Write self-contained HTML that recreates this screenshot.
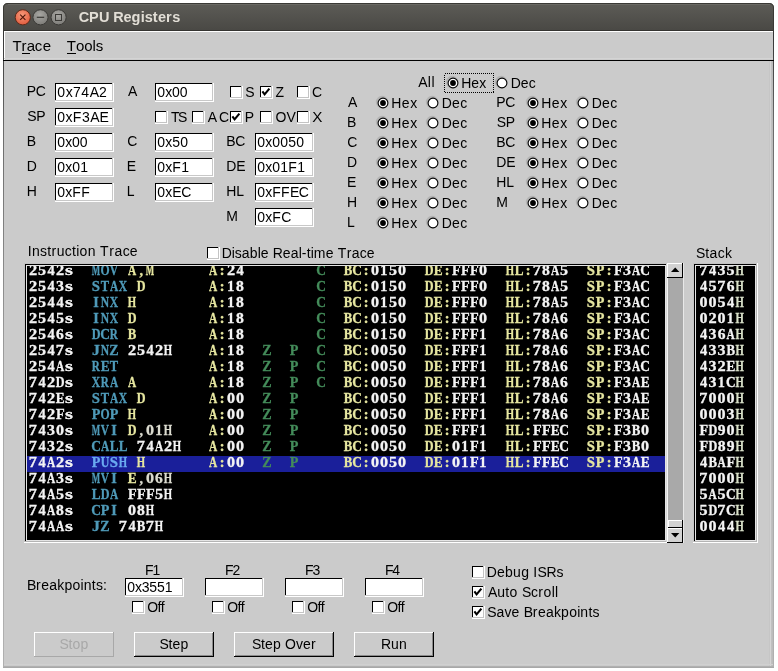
<!DOCTYPE html>
<html><head><meta charset="utf-8"><title>CPU Registers</title>
<style>html,body{margin:0;padding:0;background:#fff;overflow:hidden}svg{display:block;will-change:transform}text{shape-rendering:auto}circle,path{shape-rendering:geometricPrecision}</style>
</head><body><svg width="778" height="671" viewBox="0 0 778 671" shape-rendering="crispEdges"><rect x="0" y="0" width="778" height="671" fill="#ffffff" />
<defs><linearGradient id="lg" x1="0" y1="0" x2="0" y2="1"><stop offset="0" stop-color="#333333"/><stop offset="0.15" stop-color="#6a6a6a"/><stop offset="0.6" stop-color="#a8a8a8"/><stop offset="1" stop-color="#b0b0b0"/></linearGradient><linearGradient id="tg" x1="0" y1="0" x2="0" y2="1"><stop offset="0" stop-color="#5d5c57"/><stop offset="1" stop-color="#494844"/></linearGradient><radialGradient id="cg" cx="0.45" cy="0.35" r="0.7"><stop offset="0" stop-color="#f79a7a"/><stop offset="1" stop-color="#e0573a"/></radialGradient><radialGradient id="gg" cx="0.45" cy="0.35" r="0.7"><stop offset="0" stop-color="#a8a7a3"/><stop offset="1" stop-color="#7a7975"/></radialGradient><clipPath id="tc"><rect x="27" y="266" width="638" height="274"/></clipPath><clipPath id="sc"><rect x="696" y="266" width="59" height="274"/></clipPath></defs>
<rect x="3" y="30" width="771" height="638" fill="#cbcbcb" />
<rect x="3" y="30" width="1" height="638" fill="url(#lg)" />
<rect x="769" y="61" width="1" height="606" fill="#c6c6c6" />
<rect x="770" y="61" width="1" height="606" fill="#d4d4d4" />
<rect x="771" y="61" width="1" height="607" fill="#c0c0c0" />
<rect x="772" y="61" width="1" height="607" fill="#bcbcbc" />
<rect x="773" y="30" width="1" height="638" fill="url(#lg)" />
<rect x="772" y="30" width="1" height="31" fill="#000" />
<rect x="4" y="664" width="769" height="1" fill="#d0d0d0" />
<rect x="3" y="666" width="771" height="1" fill="#b0b0b0" />
<rect x="3" y="667" width="771" height="1" fill="#a8a8a8" />
<path d="M3,31 L3,8 Q3,3 8,3 L769,3 Q774,3 774,8 L774,31 Z" fill="url(#tg)"/>
<path d="M3.5,31 L3.5,8 Q3.5,3.5 8,3.5 L769,3.5 Q773.5,3.5 773.5,8 L773.5,31" fill="none" stroke="#3a3935" stroke-width="1" shape-rendering="geometricPrecision"/>
<rect x="8" y="4" width="762" height="1" fill="#6a6964" />
<rect x="4" y="30" width="770" height="1" fill="#353431" />
<circle cx="22.8" cy="17.3" r="7.6" fill="url(#cg)" stroke="#5a2a1a" stroke-width="1"/>
<path d="M20.2,14.7 L25.4,19.9 M25.4,14.7 L20.2,19.9" stroke="#4a1408" stroke-width="1.1"/>
<circle cx="40.5" cy="17.3" r="7.6" fill="url(#gg)" stroke="#3a3936" stroke-width="1"/>
<path d="M36.8,17.3 L44.2,17.3" stroke="#3a3936" stroke-width="1.2"/>
<circle cx="58.6" cy="17.3" r="7.6" fill="url(#gg)" stroke="#3a3936" stroke-width="1"/>
<rect x="55.5" y="14.2" width="6.2" height="6.2" fill="none" stroke="#3a3936" stroke-width="1.3"/>
<text x="78.81 88.92 99.04 109.16 113.28 123.40 131.52 140.64 144.76 152.87 157.99 166.11 172.23" y="22" font-family="Liberation Sans" font-size="14.5" fill="#e2ded6" font-weight="bold" >CPU Registers</text>
<rect x="4" y="31" width="769" height="29" fill="#cbcbcb" />
<rect x="4" y="31" width="769" height="1" fill="#ffffff" />
<rect x="4" y="31" width="1" height="29" fill="#ffffff" />
<rect x="4" y="58" width="769" height="1" fill="#d4d4d4" />
<rect x="3" y="60" width="771" height="1" fill="#000000" />
<text x="12.46 21.55 26.64 34.73 42.82" y="51" font-family="Liberation Sans" font-size="15" fill="#000" font-weight="normal" >Trace</text>
<rect x="22" y="53" width="8" height="1" fill="#000" />
<text x="66.86 76.06 84.25 92.45 95.64" y="51" font-family="Liberation Sans" font-size="15" fill="#000" font-weight="normal" >Tools</text>
<rect x="67" y="53" width="9" height="1" fill="#000" />
<text transform="translate(0,96) scale(0.9032,1)" x="29.62 39.58" y="0" font-family="Liberation Sans" font-size="15.5" fill="#000" font-weight="normal" >PC</text>
<rect x="55" y="83" width="59" height="19" fill="#ffffff" />
<rect x="55" y="83" width="57" height="1" fill="#000" />
<rect x="55" y="83" width="1" height="17" fill="#000" />
<rect x="55" y="100" width="58" height="1" fill="#c8c8c8" />
<rect x="112" y="83" width="1" height="18" fill="#c8c8c8" />
<text x="57.35 65.69 73.02 81.35 89.69 99.02" y="97" font-family="Liberation Sans" font-size="14" fill="#000" font-weight="normal" >0x74A2</text>
<text transform="translate(0,121) scale(0.9032,1)" x="30.19 40.15" y="0" font-family="Liberation Sans" font-size="15.5" fill="#000" font-weight="normal" >SP</text>
<rect x="55" y="108" width="59" height="19" fill="#ffffff" />
<rect x="55" y="108" width="57" height="1" fill="#000" />
<rect x="55" y="108" width="1" height="17" fill="#000" />
<rect x="55" y="125" width="58" height="1" fill="#c8c8c8" />
<rect x="112" y="108" width="1" height="18" fill="#c8c8c8" />
<text x="57.35 65.58 72.80 82.02 90.24 99.46" y="122" font-family="Liberation Sans" font-size="14" fill="#000" font-weight="normal" >0xF3AE</text>
<text transform="translate(0,146) scale(0.9032,1)" x="29.62" y="0" font-family="Liberation Sans" font-size="15.5" fill="#000" font-weight="normal" >B</text>
<rect x="55" y="133" width="59" height="19" fill="#ffffff" />
<rect x="55" y="133" width="57" height="1" fill="#000" />
<rect x="55" y="133" width="1" height="17" fill="#000" />
<rect x="55" y="150" width="58" height="1" fill="#c8c8c8" />
<rect x="112" y="133" width="1" height="18" fill="#c8c8c8" />
<text x="57.35 65.19 72.02 79.86" y="147" font-family="Liberation Sans" font-size="14" fill="#000" font-weight="normal" >0x00</text>
<text transform="translate(0,171) scale(0.9032,1)" x="29.62" y="0" font-family="Liberation Sans" font-size="15.5" fill="#000" font-weight="normal" >D</text>
<rect x="55" y="158" width="59" height="19" fill="#ffffff" />
<rect x="55" y="158" width="57" height="1" fill="#000" />
<rect x="55" y="158" width="1" height="17" fill="#000" />
<rect x="55" y="175" width="58" height="1" fill="#c8c8c8" />
<rect x="112" y="158" width="1" height="18" fill="#c8c8c8" />
<text x="57.35 65.35 72.35 80.35" y="172" font-family="Liberation Sans" font-size="14" fill="#000" font-weight="normal" >0x01</text>
<text transform="translate(0,196) scale(0.9032,1)" x="29.62" y="0" font-family="Liberation Sans" font-size="15.5" fill="#000" font-weight="normal" >H</text>
<rect x="55" y="183" width="59" height="19" fill="#ffffff" />
<rect x="55" y="183" width="57" height="1" fill="#000" />
<rect x="55" y="183" width="1" height="17" fill="#000" />
<rect x="55" y="200" width="58" height="1" fill="#c8c8c8" />
<rect x="112" y="183" width="1" height="18" fill="#c8c8c8" />
<text x="57.35 65.35 72.35 81.35" y="197" font-family="Liberation Sans" font-size="14" fill="#000" font-weight="normal" >0xFF</text>
<text transform="translate(0,96) scale(0.9032,1)" x="141.68" y="0" font-family="Liberation Sans" font-size="15.5" fill="#000" font-weight="normal" >A</text>
<rect x="155" y="83" width="59" height="19" fill="#ffffff" />
<rect x="155" y="83" width="57" height="1" fill="#000" />
<rect x="155" y="83" width="1" height="17" fill="#000" />
<rect x="155" y="100" width="58" height="1" fill="#c8c8c8" />
<rect x="212" y="83" width="1" height="18" fill="#c8c8c8" />
<text x="157.35 165.19 172.02 179.86" y="97" font-family="Liberation Sans" font-size="14" fill="#000" font-weight="normal" >0x00</text>
<text transform="translate(0,146) scale(0.9032,1)" x="140.93" y="0" font-family="Liberation Sans" font-size="15.5" fill="#000" font-weight="normal" >C</text>
<rect x="155" y="133" width="59" height="19" fill="#ffffff" />
<rect x="155" y="133" width="57" height="1" fill="#000" />
<rect x="155" y="133" width="1" height="17" fill="#000" />
<rect x="155" y="150" width="58" height="1" fill="#c8c8c8" />
<rect x="212" y="133" width="1" height="18" fill="#c8c8c8" />
<text x="157.35 165.35 172.35 180.35" y="147" font-family="Liberation Sans" font-size="14" fill="#000" font-weight="normal" >0x50</text>
<text transform="translate(0,171) scale(0.9032,1)" x="140.44" y="0" font-family="Liberation Sans" font-size="15.5" fill="#000" font-weight="normal" >E</text>
<rect x="155" y="158" width="59" height="19" fill="#ffffff" />
<rect x="155" y="158" width="57" height="1" fill="#000" />
<rect x="155" y="158" width="1" height="17" fill="#000" />
<rect x="155" y="175" width="58" height="1" fill="#c8c8c8" />
<rect x="212" y="158" width="1" height="18" fill="#c8c8c8" />
<text x="157.35 165.35 172.35 181.35" y="172" font-family="Liberation Sans" font-size="14" fill="#000" font-weight="normal" >0xF1</text>
<text transform="translate(0,196) scale(0.9032,1)" x="140.44" y="0" font-family="Liberation Sans" font-size="15.5" fill="#000" font-weight="normal" >L</text>
<rect x="155" y="183" width="59" height="19" fill="#ffffff" />
<rect x="155" y="183" width="57" height="1" fill="#000" />
<rect x="155" y="183" width="1" height="17" fill="#000" />
<rect x="155" y="200" width="58" height="1" fill="#c8c8c8" />
<rect x="212" y="183" width="1" height="18" fill="#c8c8c8" />
<text x="157.35 165.35 172.35 181.35" y="197" font-family="Liberation Sans" font-size="14" fill="#000" font-weight="normal" >0xEC</text>
<text transform="translate(0,146) scale(0.9032,1)" x="250.49 260.46" y="0" font-family="Liberation Sans" font-size="15.5" fill="#000" font-weight="normal" >BC</text>
<rect x="255" y="133" width="59" height="19" fill="#ffffff" />
<rect x="255" y="133" width="57" height="1" fill="#000" />
<rect x="255" y="133" width="1" height="17" fill="#000" />
<rect x="255" y="150" width="58" height="1" fill="#c8c8c8" />
<rect x="312" y="133" width="1" height="18" fill="#c8c8c8" />
<text x="257.35 265.35 272.35 280.35 288.35 296.35" y="147" font-family="Liberation Sans" font-size="14" fill="#000" font-weight="normal" >0x0050</text>
<text transform="translate(0,171) scale(0.9032,1)" x="250.49 261.56" y="0" font-family="Liberation Sans" font-size="15.5" fill="#000" font-weight="normal" >DE</text>
<rect x="255" y="158" width="59" height="19" fill="#ffffff" />
<rect x="255" y="158" width="57" height="1" fill="#000" />
<rect x="255" y="158" width="1" height="17" fill="#000" />
<rect x="255" y="175" width="58" height="1" fill="#c8c8c8" />
<rect x="312" y="158" width="1" height="18" fill="#c8c8c8" />
<text x="257.35 265.35 272.35 280.35 288.35 297.35" y="172" font-family="Liberation Sans" font-size="14" fill="#000" font-weight="normal" >0x01F1</text>
<text transform="translate(0,196) scale(0.9032,1)" x="250.49 261.56" y="0" font-family="Liberation Sans" font-size="15.5" fill="#000" font-weight="normal" >HL</text>
<rect x="255" y="183" width="59" height="19" fill="#ffffff" />
<rect x="255" y="183" width="57" height="1" fill="#000" />
<rect x="255" y="183" width="1" height="17" fill="#000" />
<rect x="255" y="200" width="58" height="1" fill="#c8c8c8" />
<rect x="312" y="183" width="1" height="18" fill="#c8c8c8" />
<text x="257.35 265.25 272.14 281.03 289.93 298.82" y="197" font-family="Liberation Sans" font-size="14" fill="#000" font-weight="normal" >0xFFEC</text>
<text transform="translate(0,221) scale(0.9032,1)" x="250.49" y="0" font-family="Liberation Sans" font-size="15.5" fill="#000" font-weight="normal" >M</text>
<rect x="255" y="208" width="59" height="19" fill="#ffffff" />
<rect x="255" y="208" width="57" height="1" fill="#000" />
<rect x="255" y="208" width="1" height="17" fill="#000" />
<rect x="255" y="225" width="58" height="1" fill="#c8c8c8" />
<rect x="312" y="208" width="1" height="18" fill="#c8c8c8" />
<text x="257.35 265.35 272.35 281.35" y="222" font-family="Liberation Sans" font-size="14" fill="#000" font-weight="normal" >0xFC</text>
<rect x="230" y="86" width="13" height="13" fill="#ffffff" />
<rect x="230" y="86" width="11" height="1" fill="#000" />
<rect x="230" y="86" width="1" height="11" fill="#000" />
<rect x="230" y="97" width="12" height="1" fill="#c4c4c4" />
<rect x="241" y="86" width="1" height="12" fill="#c4c4c4" />
<text transform="translate(0,97) scale(0.9032,1)" x="271.54" y="0" font-family="Liberation Sans" font-size="15.5" fill="#000" font-weight="normal" >S</text>
<rect x="260" y="86" width="13" height="13" fill="#ffffff" />
<rect x="260" y="86" width="11" height="1" fill="#000" />
<rect x="260" y="86" width="1" height="11" fill="#000" />
<rect x="260" y="97" width="12" height="1" fill="#c4c4c4" />
<rect x="271" y="86" width="1" height="12" fill="#c4c4c4" />
<path d="M262.4,91.4 L264.6,94.4 L269.4,88.6" fill="none" stroke="#000" stroke-width="2.1" stroke-linejoin="miter"/>
<text transform="translate(0,97) scale(0.9032,1)" x="305.08" y="0" font-family="Liberation Sans" font-size="15.5" fill="#000" font-weight="normal" >Z</text>
<rect x="297" y="86" width="13" height="13" fill="#ffffff" />
<rect x="297" y="86" width="11" height="1" fill="#000" />
<rect x="297" y="86" width="1" height="11" fill="#000" />
<rect x="297" y="97" width="12" height="1" fill="#c4c4c4" />
<rect x="308" y="86" width="1" height="12" fill="#c4c4c4" />
<text transform="translate(0,97) scale(0.9032,1)" x="345.42" y="0" font-family="Liberation Sans" font-size="15.5" fill="#000" font-weight="normal" >C</text>
<rect x="155" y="111" width="13" height="13" fill="#ffffff" />
<rect x="155" y="111" width="11" height="1" fill="#000" />
<rect x="155" y="111" width="1" height="11" fill="#000" />
<rect x="155" y="122" width="12" height="1" fill="#c4c4c4" />
<rect x="166" y="111" width="1" height="12" fill="#c4c4c4" />
<text transform="translate(0,122) scale(0.9032,1)" x="189.31 196.97" y="0" font-family="Liberation Sans" font-size="15.5" fill="#000" font-weight="normal" >TS</text>
<rect x="192" y="111" width="13" height="13" fill="#ffffff" />
<rect x="192" y="111" width="11" height="1" fill="#000" />
<rect x="192" y="111" width="1" height="11" fill="#000" />
<rect x="192" y="122" width="12" height="1" fill="#c4c4c4" />
<rect x="203" y="111" width="1" height="12" fill="#c4c4c4" />
<text transform="translate(0,122) scale(0.9032,1)" x="230.14 242.60" y="0" font-family="Liberation Sans" font-size="15.5" fill="#000" font-weight="normal" >AC</text>
<rect x="230" y="111" width="13" height="13" fill="#ffffff" />
<rect x="230" y="111" width="11" height="1" fill="#000" />
<rect x="230" y="111" width="1" height="11" fill="#000" />
<rect x="230" y="122" width="12" height="1" fill="#c4c4c4" />
<rect x="241" y="111" width="1" height="12" fill="#c4c4c4" />
<path d="M232.4,116.4 L234.6,119.4 L239.4,113.6" fill="none" stroke="#000" stroke-width="2.1" stroke-linejoin="miter"/>
<text transform="translate(0,122) scale(0.9032,1)" x="271.09" y="0" font-family="Liberation Sans" font-size="15.5" fill="#000" font-weight="normal" >P</text>
<rect x="260" y="111" width="13" height="13" fill="#ffffff" />
<rect x="260" y="111" width="11" height="1" fill="#000" />
<rect x="260" y="111" width="1" height="11" fill="#000" />
<rect x="260" y="122" width="12" height="1" fill="#c4c4c4" />
<rect x="271" y="111" width="1" height="12" fill="#c4c4c4" />
<text transform="translate(0,122) scale(0.9032,1)" x="305.06 317.22" y="0" font-family="Liberation Sans" font-size="15.5" fill="#000" font-weight="normal" >OV</text>
<rect x="297" y="111" width="13" height="13" fill="#ffffff" />
<rect x="297" y="111" width="11" height="1" fill="#000" />
<rect x="297" y="111" width="1" height="11" fill="#000" />
<rect x="297" y="122" width="12" height="1" fill="#c4c4c4" />
<rect x="308" y="111" width="1" height="12" fill="#c4c4c4" />
<text transform="translate(312.5,122) scale(0.983,1)" x="-0.35" font-family="Liberation Sans" font-size="15.5" fill="#000">X</text>
<text transform="translate(0,87) scale(0.9032,1)" x="463.09 473.69 477.65" y="0" font-family="Liberation Sans" font-size="15.5" fill="#000" font-weight="normal" >All</text>
<rect x="444.5" y="73.5" width="49" height="19" fill="none" stroke="#000" stroke-width="1" stroke-dasharray="1,1"/>
<circle cx="453" cy="83" r="6.3" fill="#8a8a8a" opacity="0.35" transform="translate(-0.9,-0.9)"/>
<circle cx="453" cy="83" r="4.9" fill="#ffffff" stroke="#000" stroke-width="1.1"/>
<circle cx="453" cy="83" r="2.9" fill="#000"/>
<text transform="translate(0,88) scale(0.9032,1)" x="510.78 521.85 530.71" y="0" font-family="Liberation Sans" font-size="15.5" fill="#000" font-weight="normal" >Hex</text>
<circle cx="502" cy="83" r="6.3" fill="#8a8a8a" opacity="0.35" transform="translate(-0.9,-0.9)"/>
<circle cx="502" cy="83" r="4.9" fill="#ffffff" stroke="#000" stroke-width="1.1"/>
<text transform="translate(0,88) scale(0.9032,1)" x="565.59 576.66 585.51" y="0" font-family="Liberation Sans" font-size="15.5" fill="#000" font-weight="normal" >Dec</text>
<text transform="translate(0,107) scale(0.9032,1)" x="385.37" y="0" font-family="Liberation Sans" font-size="15.5" fill="#000" font-weight="normal" >A</text>
<circle cx="383" cy="103" r="6.3" fill="#8a8a8a" opacity="0.35" transform="translate(-0.9,-0.9)"/>
<circle cx="383" cy="103" r="4.9" fill="#ffffff" stroke="#000" stroke-width="1.1"/>
<circle cx="383" cy="103" r="2.9" fill="#000"/>
<text transform="translate(0,108) scale(0.9032,1)" x="433.28 444.80 454.10" y="0" font-family="Liberation Sans" font-size="15.5" fill="#000" font-weight="normal" >Hex</text>
<circle cx="433" cy="103" r="6.3" fill="#8a8a8a" opacity="0.35" transform="translate(-0.9,-0.9)"/>
<circle cx="433" cy="103" r="4.9" fill="#ffffff" stroke="#000" stroke-width="1.1"/>
<text transform="translate(0,108) scale(0.9032,1)" x="489.19 500.50 509.58" y="0" font-family="Liberation Sans" font-size="15.5" fill="#000" font-weight="normal" >Dec</text>
<text transform="translate(0,127) scale(0.9032,1)" x="384.12" y="0" font-family="Liberation Sans" font-size="15.5" fill="#000" font-weight="normal" >B</text>
<circle cx="383" cy="123" r="6.3" fill="#8a8a8a" opacity="0.35" transform="translate(-0.9,-0.9)"/>
<circle cx="383" cy="123" r="4.9" fill="#ffffff" stroke="#000" stroke-width="1.1"/>
<circle cx="383" cy="123" r="2.9" fill="#000"/>
<text transform="translate(0,128) scale(0.9032,1)" x="433.28 444.80 454.10" y="0" font-family="Liberation Sans" font-size="15.5" fill="#000" font-weight="normal" >Hex</text>
<circle cx="433" cy="123" r="6.3" fill="#8a8a8a" opacity="0.35" transform="translate(-0.9,-0.9)"/>
<circle cx="433" cy="123" r="4.9" fill="#ffffff" stroke="#000" stroke-width="1.1"/>
<text transform="translate(0,128) scale(0.9032,1)" x="489.19 500.50 509.58" y="0" font-family="Liberation Sans" font-size="15.5" fill="#000" font-weight="normal" >Dec</text>
<text transform="translate(0,147) scale(0.9032,1)" x="384.61" y="0" font-family="Liberation Sans" font-size="15.5" fill="#000" font-weight="normal" >C</text>
<circle cx="383" cy="143" r="6.3" fill="#8a8a8a" opacity="0.35" transform="translate(-0.9,-0.9)"/>
<circle cx="383" cy="143" r="4.9" fill="#ffffff" stroke="#000" stroke-width="1.1"/>
<circle cx="383" cy="143" r="2.9" fill="#000"/>
<text transform="translate(0,148) scale(0.9032,1)" x="433.28 444.80 454.10" y="0" font-family="Liberation Sans" font-size="15.5" fill="#000" font-weight="normal" >Hex</text>
<circle cx="433" cy="143" r="6.3" fill="#8a8a8a" opacity="0.35" transform="translate(-0.9,-0.9)"/>
<circle cx="433" cy="143" r="4.9" fill="#ffffff" stroke="#000" stroke-width="1.1"/>
<text transform="translate(0,148) scale(0.9032,1)" x="489.19 500.50 509.58" y="0" font-family="Liberation Sans" font-size="15.5" fill="#000" font-weight="normal" >Dec</text>
<text transform="translate(0,167) scale(0.9032,1)" x="384.12" y="0" font-family="Liberation Sans" font-size="15.5" fill="#000" font-weight="normal" >D</text>
<circle cx="383" cy="163" r="6.3" fill="#8a8a8a" opacity="0.35" transform="translate(-0.9,-0.9)"/>
<circle cx="383" cy="163" r="4.9" fill="#ffffff" stroke="#000" stroke-width="1.1"/>
<circle cx="383" cy="163" r="2.9" fill="#000"/>
<text transform="translate(0,168) scale(0.9032,1)" x="433.28 444.80 454.10" y="0" font-family="Liberation Sans" font-size="15.5" fill="#000" font-weight="normal" >Hex</text>
<circle cx="433" cy="163" r="6.3" fill="#8a8a8a" opacity="0.35" transform="translate(-0.9,-0.9)"/>
<circle cx="433" cy="163" r="4.9" fill="#ffffff" stroke="#000" stroke-width="1.1"/>
<text transform="translate(0,168) scale(0.9032,1)" x="489.19 500.50 509.58" y="0" font-family="Liberation Sans" font-size="15.5" fill="#000" font-weight="normal" >Dec</text>
<text transform="translate(0,187) scale(0.9032,1)" x="384.12" y="0" font-family="Liberation Sans" font-size="15.5" fill="#000" font-weight="normal" >E</text>
<circle cx="383" cy="183" r="6.3" fill="#8a8a8a" opacity="0.35" transform="translate(-0.9,-0.9)"/>
<circle cx="383" cy="183" r="4.9" fill="#ffffff" stroke="#000" stroke-width="1.1"/>
<circle cx="383" cy="183" r="2.9" fill="#000"/>
<text transform="translate(0,188) scale(0.9032,1)" x="433.28 444.80 454.10" y="0" font-family="Liberation Sans" font-size="15.5" fill="#000" font-weight="normal" >Hex</text>
<circle cx="433" cy="183" r="6.3" fill="#8a8a8a" opacity="0.35" transform="translate(-0.9,-0.9)"/>
<circle cx="433" cy="183" r="4.9" fill="#ffffff" stroke="#000" stroke-width="1.1"/>
<text transform="translate(0,188) scale(0.9032,1)" x="489.19 500.50 509.58" y="0" font-family="Liberation Sans" font-size="15.5" fill="#000" font-weight="normal" >Dec</text>
<text transform="translate(0,207) scale(0.9032,1)" x="384.12" y="0" font-family="Liberation Sans" font-size="15.5" fill="#000" font-weight="normal" >H</text>
<circle cx="383" cy="203" r="6.3" fill="#8a8a8a" opacity="0.35" transform="translate(-0.9,-0.9)"/>
<circle cx="383" cy="203" r="4.9" fill="#ffffff" stroke="#000" stroke-width="1.1"/>
<circle cx="383" cy="203" r="2.9" fill="#000"/>
<text transform="translate(0,208) scale(0.9032,1)" x="433.28 444.80 454.10" y="0" font-family="Liberation Sans" font-size="15.5" fill="#000" font-weight="normal" >Hex</text>
<circle cx="433" cy="203" r="6.3" fill="#8a8a8a" opacity="0.35" transform="translate(-0.9,-0.9)"/>
<circle cx="433" cy="203" r="4.9" fill="#ffffff" stroke="#000" stroke-width="1.1"/>
<text transform="translate(0,208) scale(0.9032,1)" x="489.19 500.50 509.58" y="0" font-family="Liberation Sans" font-size="15.5" fill="#000" font-weight="normal" >Dec</text>
<text transform="translate(0,227) scale(0.9032,1)" x="384.12" y="0" font-family="Liberation Sans" font-size="15.5" fill="#000" font-weight="normal" >L</text>
<circle cx="383" cy="223" r="6.3" fill="#8a8a8a" opacity="0.35" transform="translate(-0.9,-0.9)"/>
<circle cx="383" cy="223" r="4.9" fill="#ffffff" stroke="#000" stroke-width="1.1"/>
<circle cx="383" cy="223" r="2.9" fill="#000"/>
<text transform="translate(0,228) scale(0.9032,1)" x="433.28 444.80 454.10" y="0" font-family="Liberation Sans" font-size="15.5" fill="#000" font-weight="normal" >Hex</text>
<circle cx="433" cy="223" r="6.3" fill="#8a8a8a" opacity="0.35" transform="translate(-0.9,-0.9)"/>
<circle cx="433" cy="223" r="4.9" fill="#ffffff" stroke="#000" stroke-width="1.1"/>
<text transform="translate(0,228) scale(0.9032,1)" x="489.19 500.50 509.58" y="0" font-family="Liberation Sans" font-size="15.5" fill="#000" font-weight="normal" >Dec</text>
<text transform="translate(0,107) scale(0.9032,1)" x="549.53 559.50" y="0" font-family="Liberation Sans" font-size="15.5" fill="#000" font-weight="normal" >PC</text>
<circle cx="533" cy="103" r="6.3" fill="#8a8a8a" opacity="0.35" transform="translate(-0.9,-0.9)"/>
<circle cx="533" cy="103" r="4.9" fill="#ffffff" stroke="#000" stroke-width="1.1"/>
<circle cx="533" cy="103" r="2.9" fill="#000"/>
<text transform="translate(0,108) scale(0.9032,1)" x="599.35 610.87 620.17" y="0" font-family="Liberation Sans" font-size="15.5" fill="#000" font-weight="normal" >Hex</text>
<circle cx="583" cy="103" r="6.3" fill="#8a8a8a" opacity="0.35" transform="translate(-0.9,-0.9)"/>
<circle cx="583" cy="103" r="4.9" fill="#ffffff" stroke="#000" stroke-width="1.1"/>
<text transform="translate(0,108) scale(0.9032,1)" x="655.26 666.57 675.66" y="0" font-family="Liberation Sans" font-size="15.5" fill="#000" font-weight="normal" >Dec</text>
<text transform="translate(0,127) scale(0.9032,1)" x="550.10 560.06" y="0" font-family="Liberation Sans" font-size="15.5" fill="#000" font-weight="normal" >SP</text>
<circle cx="533" cy="123" r="6.3" fill="#8a8a8a" opacity="0.35" transform="translate(-0.9,-0.9)"/>
<circle cx="533" cy="123" r="4.9" fill="#ffffff" stroke="#000" stroke-width="1.1"/>
<circle cx="533" cy="123" r="2.9" fill="#000"/>
<text transform="translate(0,128) scale(0.9032,1)" x="599.35 610.87 620.17" y="0" font-family="Liberation Sans" font-size="15.5" fill="#000" font-weight="normal" >Hex</text>
<circle cx="583" cy="123" r="6.3" fill="#8a8a8a" opacity="0.35" transform="translate(-0.9,-0.9)"/>
<circle cx="583" cy="123" r="4.9" fill="#ffffff" stroke="#000" stroke-width="1.1"/>
<text transform="translate(0,128) scale(0.9032,1)" x="655.26 666.57 675.66" y="0" font-family="Liberation Sans" font-size="15.5" fill="#000" font-weight="normal" >Dec</text>
<text transform="translate(0,147) scale(0.9032,1)" x="549.53 559.50" y="0" font-family="Liberation Sans" font-size="15.5" fill="#000" font-weight="normal" >BC</text>
<circle cx="533" cy="143" r="6.3" fill="#8a8a8a" opacity="0.35" transform="translate(-0.9,-0.9)"/>
<circle cx="533" cy="143" r="4.9" fill="#ffffff" stroke="#000" stroke-width="1.1"/>
<circle cx="533" cy="143" r="2.9" fill="#000"/>
<text transform="translate(0,148) scale(0.9032,1)" x="599.35 610.87 620.17" y="0" font-family="Liberation Sans" font-size="15.5" fill="#000" font-weight="normal" >Hex</text>
<circle cx="583" cy="143" r="6.3" fill="#8a8a8a" opacity="0.35" transform="translate(-0.9,-0.9)"/>
<circle cx="583" cy="143" r="4.9" fill="#ffffff" stroke="#000" stroke-width="1.1"/>
<text transform="translate(0,148) scale(0.9032,1)" x="655.26 666.57 675.66" y="0" font-family="Liberation Sans" font-size="15.5" fill="#000" font-weight="normal" >Dec</text>
<text transform="translate(0,167) scale(0.9032,1)" x="549.53 560.60" y="0" font-family="Liberation Sans" font-size="15.5" fill="#000" font-weight="normal" >DE</text>
<circle cx="533" cy="163" r="6.3" fill="#8a8a8a" opacity="0.35" transform="translate(-0.9,-0.9)"/>
<circle cx="533" cy="163" r="4.9" fill="#ffffff" stroke="#000" stroke-width="1.1"/>
<circle cx="533" cy="163" r="2.9" fill="#000"/>
<text transform="translate(0,168) scale(0.9032,1)" x="599.35 610.87 620.17" y="0" font-family="Liberation Sans" font-size="15.5" fill="#000" font-weight="normal" >Hex</text>
<circle cx="583" cy="163" r="6.3" fill="#8a8a8a" opacity="0.35" transform="translate(-0.9,-0.9)"/>
<circle cx="583" cy="163" r="4.9" fill="#ffffff" stroke="#000" stroke-width="1.1"/>
<text transform="translate(0,168) scale(0.9032,1)" x="655.26 666.57 675.66" y="0" font-family="Liberation Sans" font-size="15.5" fill="#000" font-weight="normal" >Dec</text>
<text transform="translate(0,187) scale(0.9032,1)" x="549.53 560.60" y="0" font-family="Liberation Sans" font-size="15.5" fill="#000" font-weight="normal" >HL</text>
<circle cx="533" cy="183" r="6.3" fill="#8a8a8a" opacity="0.35" transform="translate(-0.9,-0.9)"/>
<circle cx="533" cy="183" r="4.9" fill="#ffffff" stroke="#000" stroke-width="1.1"/>
<circle cx="533" cy="183" r="2.9" fill="#000"/>
<text transform="translate(0,188) scale(0.9032,1)" x="599.35 610.87 620.17" y="0" font-family="Liberation Sans" font-size="15.5" fill="#000" font-weight="normal" >Hex</text>
<circle cx="583" cy="183" r="6.3" fill="#8a8a8a" opacity="0.35" transform="translate(-0.9,-0.9)"/>
<circle cx="583" cy="183" r="4.9" fill="#ffffff" stroke="#000" stroke-width="1.1"/>
<text transform="translate(0,188) scale(0.9032,1)" x="655.26 666.57 675.66" y="0" font-family="Liberation Sans" font-size="15.5" fill="#000" font-weight="normal" >Dec</text>
<text transform="translate(0,207) scale(0.9032,1)" x="549.53" y="0" font-family="Liberation Sans" font-size="15.5" fill="#000" font-weight="normal" >M</text>
<circle cx="533" cy="203" r="6.3" fill="#8a8a8a" opacity="0.35" transform="translate(-0.9,-0.9)"/>
<circle cx="533" cy="203" r="4.9" fill="#ffffff" stroke="#000" stroke-width="1.1"/>
<circle cx="533" cy="203" r="2.9" fill="#000"/>
<text transform="translate(0,208) scale(0.9032,1)" x="599.35 610.87 620.17" y="0" font-family="Liberation Sans" font-size="15.5" fill="#000" font-weight="normal" >Hex</text>
<circle cx="583" cy="203" r="6.3" fill="#8a8a8a" opacity="0.35" transform="translate(-0.9,-0.9)"/>
<circle cx="583" cy="203" r="4.9" fill="#ffffff" stroke="#000" stroke-width="1.1"/>
<text transform="translate(0,208) scale(0.9032,1)" x="655.26 666.57 675.66" y="0" font-family="Liberation Sans" font-size="15.5" fill="#000" font-weight="normal" >Dec</text>
<text transform="translate(0,256) scale(0.9032,1)" x="30.68 35.32 44.40 52.36 57.01 62.76 71.83 79.80 84.44 87.98 97.06 106.13 110.77 120.95 126.71 135.78 143.75" y="0" font-family="Liberation Sans" font-size="15.5" fill="#000" font-weight="normal" >Instruction Trace</text>
<rect x="207" y="247" width="13" height="13" fill="#ffffff" />
<rect x="207" y="247" width="11" height="1" fill="#000" />
<rect x="207" y="247" width="1" height="11" fill="#000" />
<rect x="207" y="258" width="12" height="1" fill="#c4c4c4" />
<rect x="218" y="247" width="1" height="12" fill="#c4c4c4" />
<text transform="translate(0,258) scale(0.9032,1)" x="245.62 256.69 260.01 267.76 276.62 285.47 288.80 297.65 302.08 313.15 322.01 330.86 334.18 339.72 344.15 347.47 360.75 369.61 374.04 384.00 389.53 398.39 406.14" y="0" font-family="Liberation Sans" font-size="15.5" fill="#000" font-weight="normal" >Disable Real-time Trace</text>
<text transform="translate(0,258) scale(0.9032,1)" x="770.64 780.89 785.60 794.74 802.77" y="0" font-family="Liberation Sans" font-size="15.5" fill="#000" font-weight="normal" >Stack</text>
<rect x="24" y="263" width="643" height="1" fill="#c4c4c4" />
<rect x="24" y="263" width="1" height="280" fill="#c4c4c4" />
<rect x="25" y="264" width="641" height="278" fill="#000" />
<rect x="26" y="265" width="640" height="1" fill="#e4e4e4" />
<rect x="26" y="265" width="1" height="276" fill="#e4e4e4" />
<rect x="26" y="540" width="640" height="1" fill="#e4e4e4" />
<rect x="665" y="265" width="1" height="276" fill="#e4e4e4" />
<rect x="25" y="541" width="642" height="1" fill="#b4b4b4" />
<rect x="24" y="542" width="660" height="1" fill="#ffffff" />
<rect x="666" y="264" width="1" height="278" fill="#d8d8d8" />
<rect x="693" y="263" width="65" height="1" fill="#c4c4c4" />
<rect x="693" y="263" width="1" height="280" fill="#c4c4c4" />
<rect x="694" y="264" width="63" height="278" fill="#000" />
<rect x="695" y="265" width="61" height="1" fill="#e4e4e4" />
<rect x="695" y="265" width="1" height="276" fill="#e4e4e4" />
<rect x="695" y="540" width="61" height="1" fill="#e4e4e4" />
<rect x="755" y="265" width="1" height="276" fill="#e4e4e4" />
<rect x="694" y="541" width="63" height="1" fill="#b4b4b4" />
<rect x="756" y="264" width="1" height="278" fill="#b4b4b4" />
<rect x="693" y="542" width="65" height="1" fill="#ffffff" />
<rect x="757" y="263" width="1" height="280" fill="#ffffff" />
<rect x="667" y="263" width="1" height="280" fill="#f4f4f4" />
<rect x="668" y="278" width="15" height="242" fill="#a9a9a9" />
<rect x="667" y="263" width="16" height="15" fill="#d2d2d2" />
<rect x="667" y="263" width="16" height="1" fill="#ffffff" />
<rect x="667" y="263" width="1" height="15" fill="#ffffff" />
<rect x="667" y="277" width="16" height="1" fill="#000" />
<rect x="682" y="263" width="1" height="15" fill="#000" />
<path d="M671,272 L675.2,267.6 L679.4,272 Z" fill="#000"/>
<rect x="668" y="520" width="15" height="8" fill="#d2d2d2" />
<rect x="668" y="520" width="15" height="1" fill="#ffffff" />
<rect x="668" y="520" width="1" height="8" fill="#ffffff" />
<rect x="668" y="527" width="15" height="1" fill="#000" />
<rect x="682" y="520" width="1" height="8" fill="#000" />
<rect x="667" y="528" width="16" height="15" fill="#d2d2d2" />
<rect x="667" y="528" width="16" height="1" fill="#ffffff" />
<rect x="667" y="528" width="1" height="15" fill="#ffffff" />
<rect x="667" y="542" width="16" height="1" fill="#000" />
<rect x="682" y="528" width="1" height="15" fill="#000" />
<path d="M671,533 L675.2,537.4 L679.4,533 Z" fill="#000"/>
<rect x="683" y="263" width="1" height="280" fill="#e8e8e8" />
<g clip-path="url(#tc)">
<text transform="translate(33.00,274.6) scale(1.154,1)" x="-3.54" font-family="Liberation Serif" font-weight="bold" font-size="14.2" fill="#f4f4f4" stroke="#f4f4f4" stroke-width="0.3">2</text>
<text transform="translate(42.00,274.6) scale(1.131,1)" x="-3.57" font-family="Liberation Serif" font-weight="bold" font-size="14.2" fill="#f4f4f4" stroke="#f4f4f4" stroke-width="0.3">5</text>
<text transform="translate(51.00,274.6) scale(1.024,1)" x="-3.52" font-family="Liberation Serif" font-weight="bold" font-size="14.2" fill="#f4f4f4" stroke="#f4f4f4" stroke-width="0.3">4</text>
<text transform="translate(60.00,274.6) scale(1.154,1)" x="-3.54" font-family="Liberation Serif" font-weight="bold" font-size="14.2" fill="#f4f4f4" stroke="#f4f4f4" stroke-width="0.3">2</text>
<text transform="translate(69.00,274.6) scale(1.432,1)" x="-2.80" font-family="Liberation Serif" font-weight="bold" font-size="14.2" fill="#f4f4f4" stroke="#f4f4f4" stroke-width="0.3">s</text>
<text transform="translate(96.00,274.6) scale(0.627,1)" x="-6.62" font-family="Liberation Serif" font-weight="bold" font-size="14.2" fill="#4f9ab8" stroke="#4f9ab8" stroke-width="0.3">M</text>
<text transform="translate(105.00,274.6) scale(0.828,1)" x="-5.52" font-family="Liberation Serif" font-weight="bold" font-size="14.2" fill="#4f9ab8" stroke="#4f9ab8" stroke-width="0.3">O</text>
<text transform="translate(114.00,274.6) scale(0.805,1)" x="-5.13" font-family="Liberation Serif" font-weight="bold" font-size="14.2" fill="#4f9ab8" stroke="#4f9ab8" stroke-width="0.3">V</text>
<text transform="translate(132.00,274.6) scale(0.799,1)" x="-5.14" font-family="Liberation Serif" font-weight="bold" font-size="14.2" fill="#e6e6a0" stroke="#e6e6a0" stroke-width="0.3">A</text>
<text transform="translate(141.00,274.6) scale(1.000,1)" x="-1.60" font-family="Liberation Serif" font-weight="bold" font-size="14.2" fill="#e6e6a0" stroke="#e6e6a0" stroke-width="0.3">,</text>
<text transform="translate(150.00,274.6) scale(0.627,1)" x="-6.62" font-family="Liberation Serif" font-weight="bold" font-size="14.2" fill="#e6e6a0" stroke="#e6e6a0" stroke-width="0.3">M</text>
<text transform="translate(213.00,274.6) scale(0.799,1)" x="-5.14" font-family="Liberation Serif" font-weight="bold" font-size="14.2" fill="#e6e6a0" stroke="#e6e6a0" stroke-width="0.3">A</text>
<text transform="translate(222.00,274.6) scale(1.000,1)" x="-2.31" font-family="Liberation Serif" font-weight="bold" font-size="14.2" fill="#e6e6a0" stroke="#e6e6a0" stroke-width="0.3">:</text>
<text transform="translate(231.00,274.6) scale(1.154,1)" x="-3.54" font-family="Liberation Serif" font-weight="bold" font-size="14.2" fill="#f4f4f4" stroke="#f4f4f4" stroke-width="0.3">2</text>
<text transform="translate(240.00,274.6) scale(1.024,1)" x="-3.52" font-family="Liberation Serif" font-weight="bold" font-size="14.2" fill="#f4f4f4" stroke="#f4f4f4" stroke-width="0.3">4</text>
<text transform="translate(321.00,274.6) scale(0.943,1)" x="-4.93" font-family="Liberation Serif" font-weight="bold" font-size="14.2" fill="#448c5a" stroke="#448c5a" stroke-width="0.3">C</text>
<text transform="translate(348.00,274.6) scale(0.905,1)" x="-4.66" font-family="Liberation Serif" font-weight="bold" font-size="14.2" fill="#e6e6a0" stroke="#e6e6a0" stroke-width="0.3">B</text>
<text transform="translate(357.00,274.6) scale(0.943,1)" x="-4.93" font-family="Liberation Serif" font-weight="bold" font-size="14.2" fill="#e6e6a0" stroke="#e6e6a0" stroke-width="0.3">C</text>
<text transform="translate(366.00,274.6) scale(1.000,1)" x="-2.31" font-family="Liberation Serif" font-weight="bold" font-size="14.2" fill="#e6e6a0" stroke="#e6e6a0" stroke-width="0.3">:</text>
<text transform="translate(375.00,274.6) scale(1.130,1)" x="-3.55" font-family="Liberation Serif" font-weight="bold" font-size="14.2" fill="#f4f4f4" stroke="#f4f4f4" stroke-width="0.3">0</text>
<text transform="translate(384.00,274.6) scale(1.000,1)" x="-3.75" font-family="Liberation Serif" font-weight="bold" font-size="14.2" fill="#f4f4f4" stroke="#f4f4f4" stroke-width="0.3">1</text>
<text transform="translate(393.00,274.6) scale(1.131,1)" x="-3.57" font-family="Liberation Serif" font-weight="bold" font-size="14.2" fill="#f4f4f4" stroke="#f4f4f4" stroke-width="0.3">5</text>
<text transform="translate(402.00,274.6) scale(1.130,1)" x="-3.55" font-family="Liberation Serif" font-weight="bold" font-size="14.2" fill="#f4f4f4" stroke="#f4f4f4" stroke-width="0.3">0</text>
<text transform="translate(429.00,274.6) scale(0.859,1)" x="-4.91" font-family="Liberation Serif" font-weight="bold" font-size="14.2" fill="#e6e6a0" stroke="#e6e6a0" stroke-width="0.3">D</text>
<text transform="translate(438.00,274.6) scale(0.941,1)" x="-4.49" font-family="Liberation Serif" font-weight="bold" font-size="14.2" fill="#e6e6a0" stroke="#e6e6a0" stroke-width="0.3">E</text>
<text transform="translate(447.00,274.6) scale(1.000,1)" x="-2.31" font-family="Liberation Serif" font-weight="bold" font-size="14.2" fill="#e6e6a0" stroke="#e6e6a0" stroke-width="0.3">:</text>
<text transform="translate(456.00,274.6) scale(1.000,1)" x="-4.12" font-family="Liberation Serif" font-weight="bold" font-size="14.2" fill="#f4f4f4" stroke="#f4f4f4" stroke-width="0.3">F</text>
<text transform="translate(465.00,274.6) scale(1.000,1)" x="-4.12" font-family="Liberation Serif" font-weight="bold" font-size="14.2" fill="#f4f4f4" stroke="#f4f4f4" stroke-width="0.3">F</text>
<text transform="translate(474.00,274.6) scale(1.000,1)" x="-4.12" font-family="Liberation Serif" font-weight="bold" font-size="14.2" fill="#f4f4f4" stroke="#f4f4f4" stroke-width="0.3">F</text>
<text transform="translate(483.00,274.6) scale(1.130,1)" x="-3.55" font-family="Liberation Serif" font-weight="bold" font-size="14.2" fill="#f4f4f4" stroke="#f4f4f4" stroke-width="0.3">0</text>
<text transform="translate(510.00,274.6) scale(0.757,1)" x="-5.53" font-family="Liberation Serif" font-weight="bold" font-size="14.2" fill="#e6e6a0" stroke="#e6e6a0" stroke-width="0.3">H</text>
<text transform="translate(519.00,274.6) scale(0.927,1)" x="-4.56" font-family="Liberation Serif" font-weight="bold" font-size="14.2" fill="#e6e6a0" stroke="#e6e6a0" stroke-width="0.3">L</text>
<text transform="translate(528.00,274.6) scale(1.000,1)" x="-2.31" font-family="Liberation Serif" font-weight="bold" font-size="14.2" fill="#e6e6a0" stroke="#e6e6a0" stroke-width="0.3">:</text>
<text transform="translate(537.00,274.6) scale(1.144,1)" x="-3.78" font-family="Liberation Serif" font-weight="bold" font-size="14.2" fill="#f4f4f4" stroke="#f4f4f4" stroke-width="0.3">7</text>
<text transform="translate(546.00,274.6) scale(1.104,1)" x="-3.55" font-family="Liberation Serif" font-weight="bold" font-size="14.2" fill="#f4f4f4" stroke="#f4f4f4" stroke-width="0.3">8</text>
<text transform="translate(555.00,274.6) scale(0.799,1)" x="-5.14" font-family="Liberation Serif" font-weight="bold" font-size="14.2" fill="#f4f4f4" stroke="#f4f4f4" stroke-width="0.3">A</text>
<text transform="translate(564.00,274.6) scale(1.131,1)" x="-3.57" font-family="Liberation Serif" font-weight="bold" font-size="14.2" fill="#f4f4f4" stroke="#f4f4f4" stroke-width="0.3">5</text>
<text transform="translate(591.00,274.6) scale(1.040,1)" x="-4.02" font-family="Liberation Serif" font-weight="bold" font-size="14.2" fill="#e6e6a0" stroke="#e6e6a0" stroke-width="0.3">S</text>
<text transform="translate(600.00,274.6) scale(0.996,1)" x="-4.26" font-family="Liberation Serif" font-weight="bold" font-size="14.2" fill="#e6e6a0" stroke="#e6e6a0" stroke-width="0.3">P</text>
<text transform="translate(609.00,274.6) scale(1.000,1)" x="-2.31" font-family="Liberation Serif" font-weight="bold" font-size="14.2" fill="#e6e6a0" stroke="#e6e6a0" stroke-width="0.3">:</text>
<text transform="translate(618.00,274.6) scale(1.000,1)" x="-4.12" font-family="Liberation Serif" font-weight="bold" font-size="14.2" fill="#f4f4f4" stroke="#f4f4f4" stroke-width="0.3">F</text>
<text transform="translate(627.00,274.6) scale(1.118,1)" x="-3.57" font-family="Liberation Serif" font-weight="bold" font-size="14.2" fill="#f4f4f4" stroke="#f4f4f4" stroke-width="0.3">3</text>
<text transform="translate(636.00,274.6) scale(0.799,1)" x="-5.14" font-family="Liberation Serif" font-weight="bold" font-size="14.2" fill="#f4f4f4" stroke="#f4f4f4" stroke-width="0.3">A</text>
<text transform="translate(645.00,274.6) scale(0.943,1)" x="-4.93" font-family="Liberation Serif" font-weight="bold" font-size="14.2" fill="#f4f4f4" stroke="#f4f4f4" stroke-width="0.3">C</text>
<text transform="translate(33.00,290.6) scale(1.154,1)" x="-3.54" font-family="Liberation Serif" font-weight="bold" font-size="14.2" fill="#f4f4f4" stroke="#f4f4f4" stroke-width="0.3">2</text>
<text transform="translate(42.00,290.6) scale(1.131,1)" x="-3.57" font-family="Liberation Serif" font-weight="bold" font-size="14.2" fill="#f4f4f4" stroke="#f4f4f4" stroke-width="0.3">5</text>
<text transform="translate(51.00,290.6) scale(1.024,1)" x="-3.52" font-family="Liberation Serif" font-weight="bold" font-size="14.2" fill="#f4f4f4" stroke="#f4f4f4" stroke-width="0.3">4</text>
<text transform="translate(60.00,290.6) scale(1.118,1)" x="-3.57" font-family="Liberation Serif" font-weight="bold" font-size="14.2" fill="#f4f4f4" stroke="#f4f4f4" stroke-width="0.3">3</text>
<text transform="translate(69.00,290.6) scale(1.432,1)" x="-2.80" font-family="Liberation Serif" font-weight="bold" font-size="14.2" fill="#f4f4f4" stroke="#f4f4f4" stroke-width="0.3">s</text>
<text transform="translate(96.00,290.6) scale(1.040,1)" x="-4.02" font-family="Liberation Serif" font-weight="bold" font-size="14.2" fill="#4f9ab8" stroke="#4f9ab8" stroke-width="0.3">S</text>
<text transform="translate(105.00,290.6) scale(0.885,1)" x="-4.74" font-family="Liberation Serif" font-weight="bold" font-size="14.2" fill="#4f9ab8" stroke="#4f9ab8" stroke-width="0.3">T</text>
<text transform="translate(114.00,290.6) scale(0.799,1)" x="-5.14" font-family="Liberation Serif" font-weight="bold" font-size="14.2" fill="#4f9ab8" stroke="#4f9ab8" stroke-width="0.3">A</text>
<text transform="translate(123.00,290.6) scale(0.814,1)" x="-5.18" font-family="Liberation Serif" font-weight="bold" font-size="14.2" fill="#4f9ab8" stroke="#4f9ab8" stroke-width="0.3">X</text>
<text transform="translate(141.00,290.6) scale(0.859,1)" x="-4.91" font-family="Liberation Serif" font-weight="bold" font-size="14.2" fill="#e6e6a0" stroke="#e6e6a0" stroke-width="0.3">D</text>
<text transform="translate(213.00,290.6) scale(0.799,1)" x="-5.14" font-family="Liberation Serif" font-weight="bold" font-size="14.2" fill="#e6e6a0" stroke="#e6e6a0" stroke-width="0.3">A</text>
<text transform="translate(222.00,290.6) scale(1.000,1)" x="-2.31" font-family="Liberation Serif" font-weight="bold" font-size="14.2" fill="#e6e6a0" stroke="#e6e6a0" stroke-width="0.3">:</text>
<text transform="translate(231.00,290.6) scale(1.000,1)" x="-3.75" font-family="Liberation Serif" font-weight="bold" font-size="14.2" fill="#f4f4f4" stroke="#f4f4f4" stroke-width="0.3">1</text>
<text transform="translate(240.00,290.6) scale(1.104,1)" x="-3.55" font-family="Liberation Serif" font-weight="bold" font-size="14.2" fill="#f4f4f4" stroke="#f4f4f4" stroke-width="0.3">8</text>
<text transform="translate(321.00,290.6) scale(0.943,1)" x="-4.93" font-family="Liberation Serif" font-weight="bold" font-size="14.2" fill="#448c5a" stroke="#448c5a" stroke-width="0.3">C</text>
<text transform="translate(348.00,290.6) scale(0.905,1)" x="-4.66" font-family="Liberation Serif" font-weight="bold" font-size="14.2" fill="#e6e6a0" stroke="#e6e6a0" stroke-width="0.3">B</text>
<text transform="translate(357.00,290.6) scale(0.943,1)" x="-4.93" font-family="Liberation Serif" font-weight="bold" font-size="14.2" fill="#e6e6a0" stroke="#e6e6a0" stroke-width="0.3">C</text>
<text transform="translate(366.00,290.6) scale(1.000,1)" x="-2.31" font-family="Liberation Serif" font-weight="bold" font-size="14.2" fill="#e6e6a0" stroke="#e6e6a0" stroke-width="0.3">:</text>
<text transform="translate(375.00,290.6) scale(1.130,1)" x="-3.55" font-family="Liberation Serif" font-weight="bold" font-size="14.2" fill="#f4f4f4" stroke="#f4f4f4" stroke-width="0.3">0</text>
<text transform="translate(384.00,290.6) scale(1.000,1)" x="-3.75" font-family="Liberation Serif" font-weight="bold" font-size="14.2" fill="#f4f4f4" stroke="#f4f4f4" stroke-width="0.3">1</text>
<text transform="translate(393.00,290.6) scale(1.131,1)" x="-3.57" font-family="Liberation Serif" font-weight="bold" font-size="14.2" fill="#f4f4f4" stroke="#f4f4f4" stroke-width="0.3">5</text>
<text transform="translate(402.00,290.6) scale(1.130,1)" x="-3.55" font-family="Liberation Serif" font-weight="bold" font-size="14.2" fill="#f4f4f4" stroke="#f4f4f4" stroke-width="0.3">0</text>
<text transform="translate(429.00,290.6) scale(0.859,1)" x="-4.91" font-family="Liberation Serif" font-weight="bold" font-size="14.2" fill="#e6e6a0" stroke="#e6e6a0" stroke-width="0.3">D</text>
<text transform="translate(438.00,290.6) scale(0.941,1)" x="-4.49" font-family="Liberation Serif" font-weight="bold" font-size="14.2" fill="#e6e6a0" stroke="#e6e6a0" stroke-width="0.3">E</text>
<text transform="translate(447.00,290.6) scale(1.000,1)" x="-2.31" font-family="Liberation Serif" font-weight="bold" font-size="14.2" fill="#e6e6a0" stroke="#e6e6a0" stroke-width="0.3">:</text>
<text transform="translate(456.00,290.6) scale(1.000,1)" x="-4.12" font-family="Liberation Serif" font-weight="bold" font-size="14.2" fill="#f4f4f4" stroke="#f4f4f4" stroke-width="0.3">F</text>
<text transform="translate(465.00,290.6) scale(1.000,1)" x="-4.12" font-family="Liberation Serif" font-weight="bold" font-size="14.2" fill="#f4f4f4" stroke="#f4f4f4" stroke-width="0.3">F</text>
<text transform="translate(474.00,290.6) scale(1.000,1)" x="-4.12" font-family="Liberation Serif" font-weight="bold" font-size="14.2" fill="#f4f4f4" stroke="#f4f4f4" stroke-width="0.3">F</text>
<text transform="translate(483.00,290.6) scale(1.130,1)" x="-3.55" font-family="Liberation Serif" font-weight="bold" font-size="14.2" fill="#f4f4f4" stroke="#f4f4f4" stroke-width="0.3">0</text>
<text transform="translate(510.00,290.6) scale(0.757,1)" x="-5.53" font-family="Liberation Serif" font-weight="bold" font-size="14.2" fill="#e6e6a0" stroke="#e6e6a0" stroke-width="0.3">H</text>
<text transform="translate(519.00,290.6) scale(0.927,1)" x="-4.56" font-family="Liberation Serif" font-weight="bold" font-size="14.2" fill="#e6e6a0" stroke="#e6e6a0" stroke-width="0.3">L</text>
<text transform="translate(528.00,290.6) scale(1.000,1)" x="-2.31" font-family="Liberation Serif" font-weight="bold" font-size="14.2" fill="#e6e6a0" stroke="#e6e6a0" stroke-width="0.3">:</text>
<text transform="translate(537.00,290.6) scale(1.144,1)" x="-3.78" font-family="Liberation Serif" font-weight="bold" font-size="14.2" fill="#f4f4f4" stroke="#f4f4f4" stroke-width="0.3">7</text>
<text transform="translate(546.00,290.6) scale(1.104,1)" x="-3.55" font-family="Liberation Serif" font-weight="bold" font-size="14.2" fill="#f4f4f4" stroke="#f4f4f4" stroke-width="0.3">8</text>
<text transform="translate(555.00,290.6) scale(0.799,1)" x="-5.14" font-family="Liberation Serif" font-weight="bold" font-size="14.2" fill="#f4f4f4" stroke="#f4f4f4" stroke-width="0.3">A</text>
<text transform="translate(564.00,290.6) scale(1.131,1)" x="-3.57" font-family="Liberation Serif" font-weight="bold" font-size="14.2" fill="#f4f4f4" stroke="#f4f4f4" stroke-width="0.3">5</text>
<text transform="translate(591.00,290.6) scale(1.040,1)" x="-4.02" font-family="Liberation Serif" font-weight="bold" font-size="14.2" fill="#e6e6a0" stroke="#e6e6a0" stroke-width="0.3">S</text>
<text transform="translate(600.00,290.6) scale(0.996,1)" x="-4.26" font-family="Liberation Serif" font-weight="bold" font-size="14.2" fill="#e6e6a0" stroke="#e6e6a0" stroke-width="0.3">P</text>
<text transform="translate(609.00,290.6) scale(1.000,1)" x="-2.31" font-family="Liberation Serif" font-weight="bold" font-size="14.2" fill="#e6e6a0" stroke="#e6e6a0" stroke-width="0.3">:</text>
<text transform="translate(618.00,290.6) scale(1.000,1)" x="-4.12" font-family="Liberation Serif" font-weight="bold" font-size="14.2" fill="#f4f4f4" stroke="#f4f4f4" stroke-width="0.3">F</text>
<text transform="translate(627.00,290.6) scale(1.118,1)" x="-3.57" font-family="Liberation Serif" font-weight="bold" font-size="14.2" fill="#f4f4f4" stroke="#f4f4f4" stroke-width="0.3">3</text>
<text transform="translate(636.00,290.6) scale(0.799,1)" x="-5.14" font-family="Liberation Serif" font-weight="bold" font-size="14.2" fill="#f4f4f4" stroke="#f4f4f4" stroke-width="0.3">A</text>
<text transform="translate(645.00,290.6) scale(0.943,1)" x="-4.93" font-family="Liberation Serif" font-weight="bold" font-size="14.2" fill="#f4f4f4" stroke="#f4f4f4" stroke-width="0.3">C</text>
<text transform="translate(33.00,306.6) scale(1.154,1)" x="-3.54" font-family="Liberation Serif" font-weight="bold" font-size="14.2" fill="#f4f4f4" stroke="#f4f4f4" stroke-width="0.3">2</text>
<text transform="translate(42.00,306.6) scale(1.131,1)" x="-3.57" font-family="Liberation Serif" font-weight="bold" font-size="14.2" fill="#f4f4f4" stroke="#f4f4f4" stroke-width="0.3">5</text>
<text transform="translate(51.00,306.6) scale(1.024,1)" x="-3.52" font-family="Liberation Serif" font-weight="bold" font-size="14.2" fill="#f4f4f4" stroke="#f4f4f4" stroke-width="0.3">4</text>
<text transform="translate(60.00,306.6) scale(1.024,1)" x="-3.52" font-family="Liberation Serif" font-weight="bold" font-size="14.2" fill="#f4f4f4" stroke="#f4f4f4" stroke-width="0.3">4</text>
<text transform="translate(69.00,306.6) scale(1.432,1)" x="-2.80" font-family="Liberation Serif" font-weight="bold" font-size="14.2" fill="#f4f4f4" stroke="#f4f4f4" stroke-width="0.3">s</text>
<text transform="translate(96.00,306.6) scale(1.000,1)" x="-2.76" font-family="Liberation Serif" font-weight="bold" font-size="14.2" fill="#4f9ab8" stroke="#4f9ab8" stroke-width="0.3">I</text>
<text transform="translate(105.00,306.6) scale(0.817,1)" x="-5.17" font-family="Liberation Serif" font-weight="bold" font-size="14.2" fill="#4f9ab8" stroke="#4f9ab8" stroke-width="0.3">N</text>
<text transform="translate(114.00,306.6) scale(0.814,1)" x="-5.18" font-family="Liberation Serif" font-weight="bold" font-size="14.2" fill="#4f9ab8" stroke="#4f9ab8" stroke-width="0.3">X</text>
<text transform="translate(132.00,306.6) scale(0.757,1)" x="-5.53" font-family="Liberation Serif" font-weight="bold" font-size="14.2" fill="#e6e6a0" stroke="#e6e6a0" stroke-width="0.3">H</text>
<text transform="translate(213.00,306.6) scale(0.799,1)" x="-5.14" font-family="Liberation Serif" font-weight="bold" font-size="14.2" fill="#e6e6a0" stroke="#e6e6a0" stroke-width="0.3">A</text>
<text transform="translate(222.00,306.6) scale(1.000,1)" x="-2.31" font-family="Liberation Serif" font-weight="bold" font-size="14.2" fill="#e6e6a0" stroke="#e6e6a0" stroke-width="0.3">:</text>
<text transform="translate(231.00,306.6) scale(1.000,1)" x="-3.75" font-family="Liberation Serif" font-weight="bold" font-size="14.2" fill="#f4f4f4" stroke="#f4f4f4" stroke-width="0.3">1</text>
<text transform="translate(240.00,306.6) scale(1.104,1)" x="-3.55" font-family="Liberation Serif" font-weight="bold" font-size="14.2" fill="#f4f4f4" stroke="#f4f4f4" stroke-width="0.3">8</text>
<text transform="translate(321.00,306.6) scale(0.943,1)" x="-4.93" font-family="Liberation Serif" font-weight="bold" font-size="14.2" fill="#448c5a" stroke="#448c5a" stroke-width="0.3">C</text>
<text transform="translate(348.00,306.6) scale(0.905,1)" x="-4.66" font-family="Liberation Serif" font-weight="bold" font-size="14.2" fill="#e6e6a0" stroke="#e6e6a0" stroke-width="0.3">B</text>
<text transform="translate(357.00,306.6) scale(0.943,1)" x="-4.93" font-family="Liberation Serif" font-weight="bold" font-size="14.2" fill="#e6e6a0" stroke="#e6e6a0" stroke-width="0.3">C</text>
<text transform="translate(366.00,306.6) scale(1.000,1)" x="-2.31" font-family="Liberation Serif" font-weight="bold" font-size="14.2" fill="#e6e6a0" stroke="#e6e6a0" stroke-width="0.3">:</text>
<text transform="translate(375.00,306.6) scale(1.130,1)" x="-3.55" font-family="Liberation Serif" font-weight="bold" font-size="14.2" fill="#f4f4f4" stroke="#f4f4f4" stroke-width="0.3">0</text>
<text transform="translate(384.00,306.6) scale(1.000,1)" x="-3.75" font-family="Liberation Serif" font-weight="bold" font-size="14.2" fill="#f4f4f4" stroke="#f4f4f4" stroke-width="0.3">1</text>
<text transform="translate(393.00,306.6) scale(1.131,1)" x="-3.57" font-family="Liberation Serif" font-weight="bold" font-size="14.2" fill="#f4f4f4" stroke="#f4f4f4" stroke-width="0.3">5</text>
<text transform="translate(402.00,306.6) scale(1.130,1)" x="-3.55" font-family="Liberation Serif" font-weight="bold" font-size="14.2" fill="#f4f4f4" stroke="#f4f4f4" stroke-width="0.3">0</text>
<text transform="translate(429.00,306.6) scale(0.859,1)" x="-4.91" font-family="Liberation Serif" font-weight="bold" font-size="14.2" fill="#e6e6a0" stroke="#e6e6a0" stroke-width="0.3">D</text>
<text transform="translate(438.00,306.6) scale(0.941,1)" x="-4.49" font-family="Liberation Serif" font-weight="bold" font-size="14.2" fill="#e6e6a0" stroke="#e6e6a0" stroke-width="0.3">E</text>
<text transform="translate(447.00,306.6) scale(1.000,1)" x="-2.31" font-family="Liberation Serif" font-weight="bold" font-size="14.2" fill="#e6e6a0" stroke="#e6e6a0" stroke-width="0.3">:</text>
<text transform="translate(456.00,306.6) scale(1.000,1)" x="-4.12" font-family="Liberation Serif" font-weight="bold" font-size="14.2" fill="#f4f4f4" stroke="#f4f4f4" stroke-width="0.3">F</text>
<text transform="translate(465.00,306.6) scale(1.000,1)" x="-4.12" font-family="Liberation Serif" font-weight="bold" font-size="14.2" fill="#f4f4f4" stroke="#f4f4f4" stroke-width="0.3">F</text>
<text transform="translate(474.00,306.6) scale(1.000,1)" x="-4.12" font-family="Liberation Serif" font-weight="bold" font-size="14.2" fill="#f4f4f4" stroke="#f4f4f4" stroke-width="0.3">F</text>
<text transform="translate(483.00,306.6) scale(1.130,1)" x="-3.55" font-family="Liberation Serif" font-weight="bold" font-size="14.2" fill="#f4f4f4" stroke="#f4f4f4" stroke-width="0.3">0</text>
<text transform="translate(510.00,306.6) scale(0.757,1)" x="-5.53" font-family="Liberation Serif" font-weight="bold" font-size="14.2" fill="#e6e6a0" stroke="#e6e6a0" stroke-width="0.3">H</text>
<text transform="translate(519.00,306.6) scale(0.927,1)" x="-4.56" font-family="Liberation Serif" font-weight="bold" font-size="14.2" fill="#e6e6a0" stroke="#e6e6a0" stroke-width="0.3">L</text>
<text transform="translate(528.00,306.6) scale(1.000,1)" x="-2.31" font-family="Liberation Serif" font-weight="bold" font-size="14.2" fill="#e6e6a0" stroke="#e6e6a0" stroke-width="0.3">:</text>
<text transform="translate(537.00,306.6) scale(1.144,1)" x="-3.78" font-family="Liberation Serif" font-weight="bold" font-size="14.2" fill="#f4f4f4" stroke="#f4f4f4" stroke-width="0.3">7</text>
<text transform="translate(546.00,306.6) scale(1.104,1)" x="-3.55" font-family="Liberation Serif" font-weight="bold" font-size="14.2" fill="#f4f4f4" stroke="#f4f4f4" stroke-width="0.3">8</text>
<text transform="translate(555.00,306.6) scale(0.799,1)" x="-5.14" font-family="Liberation Serif" font-weight="bold" font-size="14.2" fill="#f4f4f4" stroke="#f4f4f4" stroke-width="0.3">A</text>
<text transform="translate(564.00,306.6) scale(1.131,1)" x="-3.57" font-family="Liberation Serif" font-weight="bold" font-size="14.2" fill="#f4f4f4" stroke="#f4f4f4" stroke-width="0.3">5</text>
<text transform="translate(591.00,306.6) scale(1.040,1)" x="-4.02" font-family="Liberation Serif" font-weight="bold" font-size="14.2" fill="#e6e6a0" stroke="#e6e6a0" stroke-width="0.3">S</text>
<text transform="translate(600.00,306.6) scale(0.996,1)" x="-4.26" font-family="Liberation Serif" font-weight="bold" font-size="14.2" fill="#e6e6a0" stroke="#e6e6a0" stroke-width="0.3">P</text>
<text transform="translate(609.00,306.6) scale(1.000,1)" x="-2.31" font-family="Liberation Serif" font-weight="bold" font-size="14.2" fill="#e6e6a0" stroke="#e6e6a0" stroke-width="0.3">:</text>
<text transform="translate(618.00,306.6) scale(1.000,1)" x="-4.12" font-family="Liberation Serif" font-weight="bold" font-size="14.2" fill="#f4f4f4" stroke="#f4f4f4" stroke-width="0.3">F</text>
<text transform="translate(627.00,306.6) scale(1.118,1)" x="-3.57" font-family="Liberation Serif" font-weight="bold" font-size="14.2" fill="#f4f4f4" stroke="#f4f4f4" stroke-width="0.3">3</text>
<text transform="translate(636.00,306.6) scale(0.799,1)" x="-5.14" font-family="Liberation Serif" font-weight="bold" font-size="14.2" fill="#f4f4f4" stroke="#f4f4f4" stroke-width="0.3">A</text>
<text transform="translate(645.00,306.6) scale(0.943,1)" x="-4.93" font-family="Liberation Serif" font-weight="bold" font-size="14.2" fill="#f4f4f4" stroke="#f4f4f4" stroke-width="0.3">C</text>
<text transform="translate(33.00,322.6) scale(1.154,1)" x="-3.54" font-family="Liberation Serif" font-weight="bold" font-size="14.2" fill="#f4f4f4" stroke="#f4f4f4" stroke-width="0.3">2</text>
<text transform="translate(42.00,322.6) scale(1.131,1)" x="-3.57" font-family="Liberation Serif" font-weight="bold" font-size="14.2" fill="#f4f4f4" stroke="#f4f4f4" stroke-width="0.3">5</text>
<text transform="translate(51.00,322.6) scale(1.024,1)" x="-3.52" font-family="Liberation Serif" font-weight="bold" font-size="14.2" fill="#f4f4f4" stroke="#f4f4f4" stroke-width="0.3">4</text>
<text transform="translate(60.00,322.6) scale(1.131,1)" x="-3.57" font-family="Liberation Serif" font-weight="bold" font-size="14.2" fill="#f4f4f4" stroke="#f4f4f4" stroke-width="0.3">5</text>
<text transform="translate(69.00,322.6) scale(1.432,1)" x="-2.80" font-family="Liberation Serif" font-weight="bold" font-size="14.2" fill="#f4f4f4" stroke="#f4f4f4" stroke-width="0.3">s</text>
<text transform="translate(96.00,322.6) scale(1.000,1)" x="-2.76" font-family="Liberation Serif" font-weight="bold" font-size="14.2" fill="#4f9ab8" stroke="#4f9ab8" stroke-width="0.3">I</text>
<text transform="translate(105.00,322.6) scale(0.817,1)" x="-5.17" font-family="Liberation Serif" font-weight="bold" font-size="14.2" fill="#4f9ab8" stroke="#4f9ab8" stroke-width="0.3">N</text>
<text transform="translate(114.00,322.6) scale(0.814,1)" x="-5.18" font-family="Liberation Serif" font-weight="bold" font-size="14.2" fill="#4f9ab8" stroke="#4f9ab8" stroke-width="0.3">X</text>
<text transform="translate(132.00,322.6) scale(0.859,1)" x="-4.91" font-family="Liberation Serif" font-weight="bold" font-size="14.2" fill="#e6e6a0" stroke="#e6e6a0" stroke-width="0.3">D</text>
<text transform="translate(213.00,322.6) scale(0.799,1)" x="-5.14" font-family="Liberation Serif" font-weight="bold" font-size="14.2" fill="#e6e6a0" stroke="#e6e6a0" stroke-width="0.3">A</text>
<text transform="translate(222.00,322.6) scale(1.000,1)" x="-2.31" font-family="Liberation Serif" font-weight="bold" font-size="14.2" fill="#e6e6a0" stroke="#e6e6a0" stroke-width="0.3">:</text>
<text transform="translate(231.00,322.6) scale(1.000,1)" x="-3.75" font-family="Liberation Serif" font-weight="bold" font-size="14.2" fill="#f4f4f4" stroke="#f4f4f4" stroke-width="0.3">1</text>
<text transform="translate(240.00,322.6) scale(1.104,1)" x="-3.55" font-family="Liberation Serif" font-weight="bold" font-size="14.2" fill="#f4f4f4" stroke="#f4f4f4" stroke-width="0.3">8</text>
<text transform="translate(321.00,322.6) scale(0.943,1)" x="-4.93" font-family="Liberation Serif" font-weight="bold" font-size="14.2" fill="#448c5a" stroke="#448c5a" stroke-width="0.3">C</text>
<text transform="translate(348.00,322.6) scale(0.905,1)" x="-4.66" font-family="Liberation Serif" font-weight="bold" font-size="14.2" fill="#e6e6a0" stroke="#e6e6a0" stroke-width="0.3">B</text>
<text transform="translate(357.00,322.6) scale(0.943,1)" x="-4.93" font-family="Liberation Serif" font-weight="bold" font-size="14.2" fill="#e6e6a0" stroke="#e6e6a0" stroke-width="0.3">C</text>
<text transform="translate(366.00,322.6) scale(1.000,1)" x="-2.31" font-family="Liberation Serif" font-weight="bold" font-size="14.2" fill="#e6e6a0" stroke="#e6e6a0" stroke-width="0.3">:</text>
<text transform="translate(375.00,322.6) scale(1.130,1)" x="-3.55" font-family="Liberation Serif" font-weight="bold" font-size="14.2" fill="#f4f4f4" stroke="#f4f4f4" stroke-width="0.3">0</text>
<text transform="translate(384.00,322.6) scale(1.000,1)" x="-3.75" font-family="Liberation Serif" font-weight="bold" font-size="14.2" fill="#f4f4f4" stroke="#f4f4f4" stroke-width="0.3">1</text>
<text transform="translate(393.00,322.6) scale(1.131,1)" x="-3.57" font-family="Liberation Serif" font-weight="bold" font-size="14.2" fill="#f4f4f4" stroke="#f4f4f4" stroke-width="0.3">5</text>
<text transform="translate(402.00,322.6) scale(1.130,1)" x="-3.55" font-family="Liberation Serif" font-weight="bold" font-size="14.2" fill="#f4f4f4" stroke="#f4f4f4" stroke-width="0.3">0</text>
<text transform="translate(429.00,322.6) scale(0.859,1)" x="-4.91" font-family="Liberation Serif" font-weight="bold" font-size="14.2" fill="#e6e6a0" stroke="#e6e6a0" stroke-width="0.3">D</text>
<text transform="translate(438.00,322.6) scale(0.941,1)" x="-4.49" font-family="Liberation Serif" font-weight="bold" font-size="14.2" fill="#e6e6a0" stroke="#e6e6a0" stroke-width="0.3">E</text>
<text transform="translate(447.00,322.6) scale(1.000,1)" x="-2.31" font-family="Liberation Serif" font-weight="bold" font-size="14.2" fill="#e6e6a0" stroke="#e6e6a0" stroke-width="0.3">:</text>
<text transform="translate(456.00,322.6) scale(1.000,1)" x="-4.12" font-family="Liberation Serif" font-weight="bold" font-size="14.2" fill="#f4f4f4" stroke="#f4f4f4" stroke-width="0.3">F</text>
<text transform="translate(465.00,322.6) scale(1.000,1)" x="-4.12" font-family="Liberation Serif" font-weight="bold" font-size="14.2" fill="#f4f4f4" stroke="#f4f4f4" stroke-width="0.3">F</text>
<text transform="translate(474.00,322.6) scale(1.000,1)" x="-4.12" font-family="Liberation Serif" font-weight="bold" font-size="14.2" fill="#f4f4f4" stroke="#f4f4f4" stroke-width="0.3">F</text>
<text transform="translate(483.00,322.6) scale(1.130,1)" x="-3.55" font-family="Liberation Serif" font-weight="bold" font-size="14.2" fill="#f4f4f4" stroke="#f4f4f4" stroke-width="0.3">0</text>
<text transform="translate(510.00,322.6) scale(0.757,1)" x="-5.53" font-family="Liberation Serif" font-weight="bold" font-size="14.2" fill="#e6e6a0" stroke="#e6e6a0" stroke-width="0.3">H</text>
<text transform="translate(519.00,322.6) scale(0.927,1)" x="-4.56" font-family="Liberation Serif" font-weight="bold" font-size="14.2" fill="#e6e6a0" stroke="#e6e6a0" stroke-width="0.3">L</text>
<text transform="translate(528.00,322.6) scale(1.000,1)" x="-2.31" font-family="Liberation Serif" font-weight="bold" font-size="14.2" fill="#e6e6a0" stroke="#e6e6a0" stroke-width="0.3">:</text>
<text transform="translate(537.00,322.6) scale(1.144,1)" x="-3.78" font-family="Liberation Serif" font-weight="bold" font-size="14.2" fill="#f4f4f4" stroke="#f4f4f4" stroke-width="0.3">7</text>
<text transform="translate(546.00,322.6) scale(1.104,1)" x="-3.55" font-family="Liberation Serif" font-weight="bold" font-size="14.2" fill="#f4f4f4" stroke="#f4f4f4" stroke-width="0.3">8</text>
<text transform="translate(555.00,322.6) scale(0.799,1)" x="-5.14" font-family="Liberation Serif" font-weight="bold" font-size="14.2" fill="#f4f4f4" stroke="#f4f4f4" stroke-width="0.3">A</text>
<text transform="translate(564.00,322.6) scale(1.097,1)" x="-3.58" font-family="Liberation Serif" font-weight="bold" font-size="14.2" fill="#f4f4f4" stroke="#f4f4f4" stroke-width="0.3">6</text>
<text transform="translate(591.00,322.6) scale(1.040,1)" x="-4.02" font-family="Liberation Serif" font-weight="bold" font-size="14.2" fill="#e6e6a0" stroke="#e6e6a0" stroke-width="0.3">S</text>
<text transform="translate(600.00,322.6) scale(0.996,1)" x="-4.26" font-family="Liberation Serif" font-weight="bold" font-size="14.2" fill="#e6e6a0" stroke="#e6e6a0" stroke-width="0.3">P</text>
<text transform="translate(609.00,322.6) scale(1.000,1)" x="-2.31" font-family="Liberation Serif" font-weight="bold" font-size="14.2" fill="#e6e6a0" stroke="#e6e6a0" stroke-width="0.3">:</text>
<text transform="translate(618.00,322.6) scale(1.000,1)" x="-4.12" font-family="Liberation Serif" font-weight="bold" font-size="14.2" fill="#f4f4f4" stroke="#f4f4f4" stroke-width="0.3">F</text>
<text transform="translate(627.00,322.6) scale(1.118,1)" x="-3.57" font-family="Liberation Serif" font-weight="bold" font-size="14.2" fill="#f4f4f4" stroke="#f4f4f4" stroke-width="0.3">3</text>
<text transform="translate(636.00,322.6) scale(0.799,1)" x="-5.14" font-family="Liberation Serif" font-weight="bold" font-size="14.2" fill="#f4f4f4" stroke="#f4f4f4" stroke-width="0.3">A</text>
<text transform="translate(645.00,322.6) scale(0.943,1)" x="-4.93" font-family="Liberation Serif" font-weight="bold" font-size="14.2" fill="#f4f4f4" stroke="#f4f4f4" stroke-width="0.3">C</text>
<text transform="translate(33.00,338.6) scale(1.154,1)" x="-3.54" font-family="Liberation Serif" font-weight="bold" font-size="14.2" fill="#f4f4f4" stroke="#f4f4f4" stroke-width="0.3">2</text>
<text transform="translate(42.00,338.6) scale(1.131,1)" x="-3.57" font-family="Liberation Serif" font-weight="bold" font-size="14.2" fill="#f4f4f4" stroke="#f4f4f4" stroke-width="0.3">5</text>
<text transform="translate(51.00,338.6) scale(1.024,1)" x="-3.52" font-family="Liberation Serif" font-weight="bold" font-size="14.2" fill="#f4f4f4" stroke="#f4f4f4" stroke-width="0.3">4</text>
<text transform="translate(60.00,338.6) scale(1.097,1)" x="-3.58" font-family="Liberation Serif" font-weight="bold" font-size="14.2" fill="#f4f4f4" stroke="#f4f4f4" stroke-width="0.3">6</text>
<text transform="translate(69.00,338.6) scale(1.432,1)" x="-2.80" font-family="Liberation Serif" font-weight="bold" font-size="14.2" fill="#f4f4f4" stroke="#f4f4f4" stroke-width="0.3">s</text>
<text transform="translate(96.00,338.6) scale(0.859,1)" x="-4.91" font-family="Liberation Serif" font-weight="bold" font-size="14.2" fill="#4f9ab8" stroke="#4f9ab8" stroke-width="0.3">D</text>
<text transform="translate(105.00,338.6) scale(0.943,1)" x="-4.93" font-family="Liberation Serif" font-weight="bold" font-size="14.2" fill="#4f9ab8" stroke="#4f9ab8" stroke-width="0.3">C</text>
<text transform="translate(114.00,338.6) scale(0.789,1)" x="-5.31" font-family="Liberation Serif" font-weight="bold" font-size="14.2" fill="#4f9ab8" stroke="#4f9ab8" stroke-width="0.3">R</text>
<text transform="translate(132.00,338.6) scale(0.905,1)" x="-4.66" font-family="Liberation Serif" font-weight="bold" font-size="14.2" fill="#e6e6a0" stroke="#e6e6a0" stroke-width="0.3">B</text>
<text transform="translate(213.00,338.6) scale(0.799,1)" x="-5.14" font-family="Liberation Serif" font-weight="bold" font-size="14.2" fill="#e6e6a0" stroke="#e6e6a0" stroke-width="0.3">A</text>
<text transform="translate(222.00,338.6) scale(1.000,1)" x="-2.31" font-family="Liberation Serif" font-weight="bold" font-size="14.2" fill="#e6e6a0" stroke="#e6e6a0" stroke-width="0.3">:</text>
<text transform="translate(231.00,338.6) scale(1.000,1)" x="-3.75" font-family="Liberation Serif" font-weight="bold" font-size="14.2" fill="#f4f4f4" stroke="#f4f4f4" stroke-width="0.3">1</text>
<text transform="translate(240.00,338.6) scale(1.104,1)" x="-3.55" font-family="Liberation Serif" font-weight="bold" font-size="14.2" fill="#f4f4f4" stroke="#f4f4f4" stroke-width="0.3">8</text>
<text transform="translate(321.00,338.6) scale(0.943,1)" x="-4.93" font-family="Liberation Serif" font-weight="bold" font-size="14.2" fill="#448c5a" stroke="#448c5a" stroke-width="0.3">C</text>
<text transform="translate(348.00,338.6) scale(0.905,1)" x="-4.66" font-family="Liberation Serif" font-weight="bold" font-size="14.2" fill="#e6e6a0" stroke="#e6e6a0" stroke-width="0.3">B</text>
<text transform="translate(357.00,338.6) scale(0.943,1)" x="-4.93" font-family="Liberation Serif" font-weight="bold" font-size="14.2" fill="#e6e6a0" stroke="#e6e6a0" stroke-width="0.3">C</text>
<text transform="translate(366.00,338.6) scale(1.000,1)" x="-2.31" font-family="Liberation Serif" font-weight="bold" font-size="14.2" fill="#e6e6a0" stroke="#e6e6a0" stroke-width="0.3">:</text>
<text transform="translate(375.00,338.6) scale(1.130,1)" x="-3.55" font-family="Liberation Serif" font-weight="bold" font-size="14.2" fill="#f4f4f4" stroke="#f4f4f4" stroke-width="0.3">0</text>
<text transform="translate(384.00,338.6) scale(1.000,1)" x="-3.75" font-family="Liberation Serif" font-weight="bold" font-size="14.2" fill="#f4f4f4" stroke="#f4f4f4" stroke-width="0.3">1</text>
<text transform="translate(393.00,338.6) scale(1.131,1)" x="-3.57" font-family="Liberation Serif" font-weight="bold" font-size="14.2" fill="#f4f4f4" stroke="#f4f4f4" stroke-width="0.3">5</text>
<text transform="translate(402.00,338.6) scale(1.130,1)" x="-3.55" font-family="Liberation Serif" font-weight="bold" font-size="14.2" fill="#f4f4f4" stroke="#f4f4f4" stroke-width="0.3">0</text>
<text transform="translate(429.00,338.6) scale(0.859,1)" x="-4.91" font-family="Liberation Serif" font-weight="bold" font-size="14.2" fill="#e6e6a0" stroke="#e6e6a0" stroke-width="0.3">D</text>
<text transform="translate(438.00,338.6) scale(0.941,1)" x="-4.49" font-family="Liberation Serif" font-weight="bold" font-size="14.2" fill="#e6e6a0" stroke="#e6e6a0" stroke-width="0.3">E</text>
<text transform="translate(447.00,338.6) scale(1.000,1)" x="-2.31" font-family="Liberation Serif" font-weight="bold" font-size="14.2" fill="#e6e6a0" stroke="#e6e6a0" stroke-width="0.3">:</text>
<text transform="translate(456.00,338.6) scale(1.000,1)" x="-4.12" font-family="Liberation Serif" font-weight="bold" font-size="14.2" fill="#f4f4f4" stroke="#f4f4f4" stroke-width="0.3">F</text>
<text transform="translate(465.00,338.6) scale(1.000,1)" x="-4.12" font-family="Liberation Serif" font-weight="bold" font-size="14.2" fill="#f4f4f4" stroke="#f4f4f4" stroke-width="0.3">F</text>
<text transform="translate(474.00,338.6) scale(1.000,1)" x="-4.12" font-family="Liberation Serif" font-weight="bold" font-size="14.2" fill="#f4f4f4" stroke="#f4f4f4" stroke-width="0.3">F</text>
<text transform="translate(483.00,338.6) scale(1.000,1)" x="-3.75" font-family="Liberation Serif" font-weight="bold" font-size="14.2" fill="#f4f4f4" stroke="#f4f4f4" stroke-width="0.3">1</text>
<text transform="translate(510.00,338.6) scale(0.757,1)" x="-5.53" font-family="Liberation Serif" font-weight="bold" font-size="14.2" fill="#e6e6a0" stroke="#e6e6a0" stroke-width="0.3">H</text>
<text transform="translate(519.00,338.6) scale(0.927,1)" x="-4.56" font-family="Liberation Serif" font-weight="bold" font-size="14.2" fill="#e6e6a0" stroke="#e6e6a0" stroke-width="0.3">L</text>
<text transform="translate(528.00,338.6) scale(1.000,1)" x="-2.31" font-family="Liberation Serif" font-weight="bold" font-size="14.2" fill="#e6e6a0" stroke="#e6e6a0" stroke-width="0.3">:</text>
<text transform="translate(537.00,338.6) scale(1.144,1)" x="-3.78" font-family="Liberation Serif" font-weight="bold" font-size="14.2" fill="#f4f4f4" stroke="#f4f4f4" stroke-width="0.3">7</text>
<text transform="translate(546.00,338.6) scale(1.104,1)" x="-3.55" font-family="Liberation Serif" font-weight="bold" font-size="14.2" fill="#f4f4f4" stroke="#f4f4f4" stroke-width="0.3">8</text>
<text transform="translate(555.00,338.6) scale(0.799,1)" x="-5.14" font-family="Liberation Serif" font-weight="bold" font-size="14.2" fill="#f4f4f4" stroke="#f4f4f4" stroke-width="0.3">A</text>
<text transform="translate(564.00,338.6) scale(1.097,1)" x="-3.58" font-family="Liberation Serif" font-weight="bold" font-size="14.2" fill="#f4f4f4" stroke="#f4f4f4" stroke-width="0.3">6</text>
<text transform="translate(591.00,338.6) scale(1.040,1)" x="-4.02" font-family="Liberation Serif" font-weight="bold" font-size="14.2" fill="#e6e6a0" stroke="#e6e6a0" stroke-width="0.3">S</text>
<text transform="translate(600.00,338.6) scale(0.996,1)" x="-4.26" font-family="Liberation Serif" font-weight="bold" font-size="14.2" fill="#e6e6a0" stroke="#e6e6a0" stroke-width="0.3">P</text>
<text transform="translate(609.00,338.6) scale(1.000,1)" x="-2.31" font-family="Liberation Serif" font-weight="bold" font-size="14.2" fill="#e6e6a0" stroke="#e6e6a0" stroke-width="0.3">:</text>
<text transform="translate(618.00,338.6) scale(1.000,1)" x="-4.12" font-family="Liberation Serif" font-weight="bold" font-size="14.2" fill="#f4f4f4" stroke="#f4f4f4" stroke-width="0.3">F</text>
<text transform="translate(627.00,338.6) scale(1.118,1)" x="-3.57" font-family="Liberation Serif" font-weight="bold" font-size="14.2" fill="#f4f4f4" stroke="#f4f4f4" stroke-width="0.3">3</text>
<text transform="translate(636.00,338.6) scale(0.799,1)" x="-5.14" font-family="Liberation Serif" font-weight="bold" font-size="14.2" fill="#f4f4f4" stroke="#f4f4f4" stroke-width="0.3">A</text>
<text transform="translate(645.00,338.6) scale(0.943,1)" x="-4.93" font-family="Liberation Serif" font-weight="bold" font-size="14.2" fill="#f4f4f4" stroke="#f4f4f4" stroke-width="0.3">C</text>
<text transform="translate(33.00,354.6) scale(1.154,1)" x="-3.54" font-family="Liberation Serif" font-weight="bold" font-size="14.2" fill="#f4f4f4" stroke="#f4f4f4" stroke-width="0.3">2</text>
<text transform="translate(42.00,354.6) scale(1.131,1)" x="-3.57" font-family="Liberation Serif" font-weight="bold" font-size="14.2" fill="#f4f4f4" stroke="#f4f4f4" stroke-width="0.3">5</text>
<text transform="translate(51.00,354.6) scale(1.024,1)" x="-3.52" font-family="Liberation Serif" font-weight="bold" font-size="14.2" fill="#f4f4f4" stroke="#f4f4f4" stroke-width="0.3">4</text>
<text transform="translate(60.00,354.6) scale(1.144,1)" x="-3.78" font-family="Liberation Serif" font-weight="bold" font-size="14.2" fill="#f4f4f4" stroke="#f4f4f4" stroke-width="0.3">7</text>
<text transform="translate(69.00,354.6) scale(1.432,1)" x="-2.80" font-family="Liberation Serif" font-weight="bold" font-size="14.2" fill="#f4f4f4" stroke="#f4f4f4" stroke-width="0.3">s</text>
<text transform="translate(96.00,354.6) scale(1.118,1)" x="-3.67" font-family="Liberation Serif" font-weight="bold" font-size="14.2" fill="#4f9ab8" stroke="#4f9ab8" stroke-width="0.3">J</text>
<text transform="translate(105.00,354.6) scale(0.817,1)" x="-5.17" font-family="Liberation Serif" font-weight="bold" font-size="14.2" fill="#4f9ab8" stroke="#4f9ab8" stroke-width="0.3">N</text>
<text transform="translate(114.00,354.6) scale(0.991,1)" x="-4.71" font-family="Liberation Serif" font-weight="bold" font-size="14.2" fill="#4f9ab8" stroke="#4f9ab8" stroke-width="0.3">Z</text>
<text transform="translate(132.00,354.6) scale(1.154,1)" x="-3.54" font-family="Liberation Serif" font-weight="bold" font-size="14.2" fill="#f4f4f4" stroke="#f4f4f4" stroke-width="0.3">2</text>
<text transform="translate(141.00,354.6) scale(1.131,1)" x="-3.57" font-family="Liberation Serif" font-weight="bold" font-size="14.2" fill="#f4f4f4" stroke="#f4f4f4" stroke-width="0.3">5</text>
<text transform="translate(150.00,354.6) scale(1.024,1)" x="-3.52" font-family="Liberation Serif" font-weight="bold" font-size="14.2" fill="#f4f4f4" stroke="#f4f4f4" stroke-width="0.3">4</text>
<text transform="translate(159.00,354.6) scale(1.154,1)" x="-3.54" font-family="Liberation Serif" font-weight="bold" font-size="14.2" fill="#f4f4f4" stroke="#f4f4f4" stroke-width="0.3">2</text>
<text transform="translate(168.00,354.6) scale(0.757,1)" x="-5.53" font-family="Liberation Serif" font-weight="bold" font-size="14.2" fill="#f4f4f4" stroke="#f4f4f4" stroke-width="0.3">H</text>
<text transform="translate(213.00,354.6) scale(0.799,1)" x="-5.14" font-family="Liberation Serif" font-weight="bold" font-size="14.2" fill="#e6e6a0" stroke="#e6e6a0" stroke-width="0.3">A</text>
<text transform="translate(222.00,354.6) scale(1.000,1)" x="-2.31" font-family="Liberation Serif" font-weight="bold" font-size="14.2" fill="#e6e6a0" stroke="#e6e6a0" stroke-width="0.3">:</text>
<text transform="translate(231.00,354.6) scale(1.000,1)" x="-3.75" font-family="Liberation Serif" font-weight="bold" font-size="14.2" fill="#f4f4f4" stroke="#f4f4f4" stroke-width="0.3">1</text>
<text transform="translate(240.00,354.6) scale(1.104,1)" x="-3.55" font-family="Liberation Serif" font-weight="bold" font-size="14.2" fill="#f4f4f4" stroke="#f4f4f4" stroke-width="0.3">8</text>
<text transform="translate(267.00,354.6) scale(0.991,1)" x="-4.71" font-family="Liberation Serif" font-weight="bold" font-size="14.2" fill="#448c5a" stroke="#448c5a" stroke-width="0.3">Z</text>
<text transform="translate(294.00,354.6) scale(0.996,1)" x="-4.26" font-family="Liberation Serif" font-weight="bold" font-size="14.2" fill="#448c5a" stroke="#448c5a" stroke-width="0.3">P</text>
<text transform="translate(321.00,354.6) scale(0.943,1)" x="-4.93" font-family="Liberation Serif" font-weight="bold" font-size="14.2" fill="#448c5a" stroke="#448c5a" stroke-width="0.3">C</text>
<text transform="translate(348.00,354.6) scale(0.905,1)" x="-4.66" font-family="Liberation Serif" font-weight="bold" font-size="14.2" fill="#e6e6a0" stroke="#e6e6a0" stroke-width="0.3">B</text>
<text transform="translate(357.00,354.6) scale(0.943,1)" x="-4.93" font-family="Liberation Serif" font-weight="bold" font-size="14.2" fill="#e6e6a0" stroke="#e6e6a0" stroke-width="0.3">C</text>
<text transform="translate(366.00,354.6) scale(1.000,1)" x="-2.31" font-family="Liberation Serif" font-weight="bold" font-size="14.2" fill="#e6e6a0" stroke="#e6e6a0" stroke-width="0.3">:</text>
<text transform="translate(375.00,354.6) scale(1.130,1)" x="-3.55" font-family="Liberation Serif" font-weight="bold" font-size="14.2" fill="#f4f4f4" stroke="#f4f4f4" stroke-width="0.3">0</text>
<text transform="translate(384.00,354.6) scale(1.130,1)" x="-3.55" font-family="Liberation Serif" font-weight="bold" font-size="14.2" fill="#f4f4f4" stroke="#f4f4f4" stroke-width="0.3">0</text>
<text transform="translate(393.00,354.6) scale(1.131,1)" x="-3.57" font-family="Liberation Serif" font-weight="bold" font-size="14.2" fill="#f4f4f4" stroke="#f4f4f4" stroke-width="0.3">5</text>
<text transform="translate(402.00,354.6) scale(1.130,1)" x="-3.55" font-family="Liberation Serif" font-weight="bold" font-size="14.2" fill="#f4f4f4" stroke="#f4f4f4" stroke-width="0.3">0</text>
<text transform="translate(429.00,354.6) scale(0.859,1)" x="-4.91" font-family="Liberation Serif" font-weight="bold" font-size="14.2" fill="#e6e6a0" stroke="#e6e6a0" stroke-width="0.3">D</text>
<text transform="translate(438.00,354.6) scale(0.941,1)" x="-4.49" font-family="Liberation Serif" font-weight="bold" font-size="14.2" fill="#e6e6a0" stroke="#e6e6a0" stroke-width="0.3">E</text>
<text transform="translate(447.00,354.6) scale(1.000,1)" x="-2.31" font-family="Liberation Serif" font-weight="bold" font-size="14.2" fill="#e6e6a0" stroke="#e6e6a0" stroke-width="0.3">:</text>
<text transform="translate(456.00,354.6) scale(1.000,1)" x="-4.12" font-family="Liberation Serif" font-weight="bold" font-size="14.2" fill="#f4f4f4" stroke="#f4f4f4" stroke-width="0.3">F</text>
<text transform="translate(465.00,354.6) scale(1.000,1)" x="-4.12" font-family="Liberation Serif" font-weight="bold" font-size="14.2" fill="#f4f4f4" stroke="#f4f4f4" stroke-width="0.3">F</text>
<text transform="translate(474.00,354.6) scale(1.000,1)" x="-4.12" font-family="Liberation Serif" font-weight="bold" font-size="14.2" fill="#f4f4f4" stroke="#f4f4f4" stroke-width="0.3">F</text>
<text transform="translate(483.00,354.6) scale(1.000,1)" x="-3.75" font-family="Liberation Serif" font-weight="bold" font-size="14.2" fill="#f4f4f4" stroke="#f4f4f4" stroke-width="0.3">1</text>
<text transform="translate(510.00,354.6) scale(0.757,1)" x="-5.53" font-family="Liberation Serif" font-weight="bold" font-size="14.2" fill="#e6e6a0" stroke="#e6e6a0" stroke-width="0.3">H</text>
<text transform="translate(519.00,354.6) scale(0.927,1)" x="-4.56" font-family="Liberation Serif" font-weight="bold" font-size="14.2" fill="#e6e6a0" stroke="#e6e6a0" stroke-width="0.3">L</text>
<text transform="translate(528.00,354.6) scale(1.000,1)" x="-2.31" font-family="Liberation Serif" font-weight="bold" font-size="14.2" fill="#e6e6a0" stroke="#e6e6a0" stroke-width="0.3">:</text>
<text transform="translate(537.00,354.6) scale(1.144,1)" x="-3.78" font-family="Liberation Serif" font-weight="bold" font-size="14.2" fill="#f4f4f4" stroke="#f4f4f4" stroke-width="0.3">7</text>
<text transform="translate(546.00,354.6) scale(1.104,1)" x="-3.55" font-family="Liberation Serif" font-weight="bold" font-size="14.2" fill="#f4f4f4" stroke="#f4f4f4" stroke-width="0.3">8</text>
<text transform="translate(555.00,354.6) scale(0.799,1)" x="-5.14" font-family="Liberation Serif" font-weight="bold" font-size="14.2" fill="#f4f4f4" stroke="#f4f4f4" stroke-width="0.3">A</text>
<text transform="translate(564.00,354.6) scale(1.097,1)" x="-3.58" font-family="Liberation Serif" font-weight="bold" font-size="14.2" fill="#f4f4f4" stroke="#f4f4f4" stroke-width="0.3">6</text>
<text transform="translate(591.00,354.6) scale(1.040,1)" x="-4.02" font-family="Liberation Serif" font-weight="bold" font-size="14.2" fill="#e6e6a0" stroke="#e6e6a0" stroke-width="0.3">S</text>
<text transform="translate(600.00,354.6) scale(0.996,1)" x="-4.26" font-family="Liberation Serif" font-weight="bold" font-size="14.2" fill="#e6e6a0" stroke="#e6e6a0" stroke-width="0.3">P</text>
<text transform="translate(609.00,354.6) scale(1.000,1)" x="-2.31" font-family="Liberation Serif" font-weight="bold" font-size="14.2" fill="#e6e6a0" stroke="#e6e6a0" stroke-width="0.3">:</text>
<text transform="translate(618.00,354.6) scale(1.000,1)" x="-4.12" font-family="Liberation Serif" font-weight="bold" font-size="14.2" fill="#f4f4f4" stroke="#f4f4f4" stroke-width="0.3">F</text>
<text transform="translate(627.00,354.6) scale(1.118,1)" x="-3.57" font-family="Liberation Serif" font-weight="bold" font-size="14.2" fill="#f4f4f4" stroke="#f4f4f4" stroke-width="0.3">3</text>
<text transform="translate(636.00,354.6) scale(0.799,1)" x="-5.14" font-family="Liberation Serif" font-weight="bold" font-size="14.2" fill="#f4f4f4" stroke="#f4f4f4" stroke-width="0.3">A</text>
<text transform="translate(645.00,354.6) scale(0.943,1)" x="-4.93" font-family="Liberation Serif" font-weight="bold" font-size="14.2" fill="#f4f4f4" stroke="#f4f4f4" stroke-width="0.3">C</text>
<text transform="translate(33.00,370.6) scale(1.154,1)" x="-3.54" font-family="Liberation Serif" font-weight="bold" font-size="14.2" fill="#f4f4f4" stroke="#f4f4f4" stroke-width="0.3">2</text>
<text transform="translate(42.00,370.6) scale(1.131,1)" x="-3.57" font-family="Liberation Serif" font-weight="bold" font-size="14.2" fill="#f4f4f4" stroke="#f4f4f4" stroke-width="0.3">5</text>
<text transform="translate(51.00,370.6) scale(1.024,1)" x="-3.52" font-family="Liberation Serif" font-weight="bold" font-size="14.2" fill="#f4f4f4" stroke="#f4f4f4" stroke-width="0.3">4</text>
<text transform="translate(60.00,370.6) scale(0.799,1)" x="-5.14" font-family="Liberation Serif" font-weight="bold" font-size="14.2" fill="#f4f4f4" stroke="#f4f4f4" stroke-width="0.3">A</text>
<text transform="translate(69.00,370.6) scale(1.432,1)" x="-2.80" font-family="Liberation Serif" font-weight="bold" font-size="14.2" fill="#f4f4f4" stroke="#f4f4f4" stroke-width="0.3">s</text>
<text transform="translate(96.00,370.6) scale(0.789,1)" x="-5.31" font-family="Liberation Serif" font-weight="bold" font-size="14.2" fill="#4f9ab8" stroke="#4f9ab8" stroke-width="0.3">R</text>
<text transform="translate(105.00,370.6) scale(0.941,1)" x="-4.49" font-family="Liberation Serif" font-weight="bold" font-size="14.2" fill="#4f9ab8" stroke="#4f9ab8" stroke-width="0.3">E</text>
<text transform="translate(114.00,370.6) scale(0.885,1)" x="-4.74" font-family="Liberation Serif" font-weight="bold" font-size="14.2" fill="#4f9ab8" stroke="#4f9ab8" stroke-width="0.3">T</text>
<text transform="translate(213.00,370.6) scale(0.799,1)" x="-5.14" font-family="Liberation Serif" font-weight="bold" font-size="14.2" fill="#e6e6a0" stroke="#e6e6a0" stroke-width="0.3">A</text>
<text transform="translate(222.00,370.6) scale(1.000,1)" x="-2.31" font-family="Liberation Serif" font-weight="bold" font-size="14.2" fill="#e6e6a0" stroke="#e6e6a0" stroke-width="0.3">:</text>
<text transform="translate(231.00,370.6) scale(1.000,1)" x="-3.75" font-family="Liberation Serif" font-weight="bold" font-size="14.2" fill="#f4f4f4" stroke="#f4f4f4" stroke-width="0.3">1</text>
<text transform="translate(240.00,370.6) scale(1.104,1)" x="-3.55" font-family="Liberation Serif" font-weight="bold" font-size="14.2" fill="#f4f4f4" stroke="#f4f4f4" stroke-width="0.3">8</text>
<text transform="translate(267.00,370.6) scale(0.991,1)" x="-4.71" font-family="Liberation Serif" font-weight="bold" font-size="14.2" fill="#448c5a" stroke="#448c5a" stroke-width="0.3">Z</text>
<text transform="translate(294.00,370.6) scale(0.996,1)" x="-4.26" font-family="Liberation Serif" font-weight="bold" font-size="14.2" fill="#448c5a" stroke="#448c5a" stroke-width="0.3">P</text>
<text transform="translate(321.00,370.6) scale(0.943,1)" x="-4.93" font-family="Liberation Serif" font-weight="bold" font-size="14.2" fill="#448c5a" stroke="#448c5a" stroke-width="0.3">C</text>
<text transform="translate(348.00,370.6) scale(0.905,1)" x="-4.66" font-family="Liberation Serif" font-weight="bold" font-size="14.2" fill="#e6e6a0" stroke="#e6e6a0" stroke-width="0.3">B</text>
<text transform="translate(357.00,370.6) scale(0.943,1)" x="-4.93" font-family="Liberation Serif" font-weight="bold" font-size="14.2" fill="#e6e6a0" stroke="#e6e6a0" stroke-width="0.3">C</text>
<text transform="translate(366.00,370.6) scale(1.000,1)" x="-2.31" font-family="Liberation Serif" font-weight="bold" font-size="14.2" fill="#e6e6a0" stroke="#e6e6a0" stroke-width="0.3">:</text>
<text transform="translate(375.00,370.6) scale(1.130,1)" x="-3.55" font-family="Liberation Serif" font-weight="bold" font-size="14.2" fill="#f4f4f4" stroke="#f4f4f4" stroke-width="0.3">0</text>
<text transform="translate(384.00,370.6) scale(1.130,1)" x="-3.55" font-family="Liberation Serif" font-weight="bold" font-size="14.2" fill="#f4f4f4" stroke="#f4f4f4" stroke-width="0.3">0</text>
<text transform="translate(393.00,370.6) scale(1.131,1)" x="-3.57" font-family="Liberation Serif" font-weight="bold" font-size="14.2" fill="#f4f4f4" stroke="#f4f4f4" stroke-width="0.3">5</text>
<text transform="translate(402.00,370.6) scale(1.130,1)" x="-3.55" font-family="Liberation Serif" font-weight="bold" font-size="14.2" fill="#f4f4f4" stroke="#f4f4f4" stroke-width="0.3">0</text>
<text transform="translate(429.00,370.6) scale(0.859,1)" x="-4.91" font-family="Liberation Serif" font-weight="bold" font-size="14.2" fill="#e6e6a0" stroke="#e6e6a0" stroke-width="0.3">D</text>
<text transform="translate(438.00,370.6) scale(0.941,1)" x="-4.49" font-family="Liberation Serif" font-weight="bold" font-size="14.2" fill="#e6e6a0" stroke="#e6e6a0" stroke-width="0.3">E</text>
<text transform="translate(447.00,370.6) scale(1.000,1)" x="-2.31" font-family="Liberation Serif" font-weight="bold" font-size="14.2" fill="#e6e6a0" stroke="#e6e6a0" stroke-width="0.3">:</text>
<text transform="translate(456.00,370.6) scale(1.000,1)" x="-4.12" font-family="Liberation Serif" font-weight="bold" font-size="14.2" fill="#f4f4f4" stroke="#f4f4f4" stroke-width="0.3">F</text>
<text transform="translate(465.00,370.6) scale(1.000,1)" x="-4.12" font-family="Liberation Serif" font-weight="bold" font-size="14.2" fill="#f4f4f4" stroke="#f4f4f4" stroke-width="0.3">F</text>
<text transform="translate(474.00,370.6) scale(1.000,1)" x="-4.12" font-family="Liberation Serif" font-weight="bold" font-size="14.2" fill="#f4f4f4" stroke="#f4f4f4" stroke-width="0.3">F</text>
<text transform="translate(483.00,370.6) scale(1.000,1)" x="-3.75" font-family="Liberation Serif" font-weight="bold" font-size="14.2" fill="#f4f4f4" stroke="#f4f4f4" stroke-width="0.3">1</text>
<text transform="translate(510.00,370.6) scale(0.757,1)" x="-5.53" font-family="Liberation Serif" font-weight="bold" font-size="14.2" fill="#e6e6a0" stroke="#e6e6a0" stroke-width="0.3">H</text>
<text transform="translate(519.00,370.6) scale(0.927,1)" x="-4.56" font-family="Liberation Serif" font-weight="bold" font-size="14.2" fill="#e6e6a0" stroke="#e6e6a0" stroke-width="0.3">L</text>
<text transform="translate(528.00,370.6) scale(1.000,1)" x="-2.31" font-family="Liberation Serif" font-weight="bold" font-size="14.2" fill="#e6e6a0" stroke="#e6e6a0" stroke-width="0.3">:</text>
<text transform="translate(537.00,370.6) scale(1.144,1)" x="-3.78" font-family="Liberation Serif" font-weight="bold" font-size="14.2" fill="#f4f4f4" stroke="#f4f4f4" stroke-width="0.3">7</text>
<text transform="translate(546.00,370.6) scale(1.104,1)" x="-3.55" font-family="Liberation Serif" font-weight="bold" font-size="14.2" fill="#f4f4f4" stroke="#f4f4f4" stroke-width="0.3">8</text>
<text transform="translate(555.00,370.6) scale(0.799,1)" x="-5.14" font-family="Liberation Serif" font-weight="bold" font-size="14.2" fill="#f4f4f4" stroke="#f4f4f4" stroke-width="0.3">A</text>
<text transform="translate(564.00,370.6) scale(1.097,1)" x="-3.58" font-family="Liberation Serif" font-weight="bold" font-size="14.2" fill="#f4f4f4" stroke="#f4f4f4" stroke-width="0.3">6</text>
<text transform="translate(591.00,370.6) scale(1.040,1)" x="-4.02" font-family="Liberation Serif" font-weight="bold" font-size="14.2" fill="#e6e6a0" stroke="#e6e6a0" stroke-width="0.3">S</text>
<text transform="translate(600.00,370.6) scale(0.996,1)" x="-4.26" font-family="Liberation Serif" font-weight="bold" font-size="14.2" fill="#e6e6a0" stroke="#e6e6a0" stroke-width="0.3">P</text>
<text transform="translate(609.00,370.6) scale(1.000,1)" x="-2.31" font-family="Liberation Serif" font-weight="bold" font-size="14.2" fill="#e6e6a0" stroke="#e6e6a0" stroke-width="0.3">:</text>
<text transform="translate(618.00,370.6) scale(1.000,1)" x="-4.12" font-family="Liberation Serif" font-weight="bold" font-size="14.2" fill="#f4f4f4" stroke="#f4f4f4" stroke-width="0.3">F</text>
<text transform="translate(627.00,370.6) scale(1.118,1)" x="-3.57" font-family="Liberation Serif" font-weight="bold" font-size="14.2" fill="#f4f4f4" stroke="#f4f4f4" stroke-width="0.3">3</text>
<text transform="translate(636.00,370.6) scale(0.799,1)" x="-5.14" font-family="Liberation Serif" font-weight="bold" font-size="14.2" fill="#f4f4f4" stroke="#f4f4f4" stroke-width="0.3">A</text>
<text transform="translate(645.00,370.6) scale(0.943,1)" x="-4.93" font-family="Liberation Serif" font-weight="bold" font-size="14.2" fill="#f4f4f4" stroke="#f4f4f4" stroke-width="0.3">C</text>
<text transform="translate(33.00,386.6) scale(1.144,1)" x="-3.78" font-family="Liberation Serif" font-weight="bold" font-size="14.2" fill="#f4f4f4" stroke="#f4f4f4" stroke-width="0.3">7</text>
<text transform="translate(42.00,386.6) scale(1.024,1)" x="-3.52" font-family="Liberation Serif" font-weight="bold" font-size="14.2" fill="#f4f4f4" stroke="#f4f4f4" stroke-width="0.3">4</text>
<text transform="translate(51.00,386.6) scale(1.154,1)" x="-3.54" font-family="Liberation Serif" font-weight="bold" font-size="14.2" fill="#f4f4f4" stroke="#f4f4f4" stroke-width="0.3">2</text>
<text transform="translate(60.00,386.6) scale(0.859,1)" x="-4.91" font-family="Liberation Serif" font-weight="bold" font-size="14.2" fill="#f4f4f4" stroke="#f4f4f4" stroke-width="0.3">D</text>
<text transform="translate(69.00,386.6) scale(1.432,1)" x="-2.80" font-family="Liberation Serif" font-weight="bold" font-size="14.2" fill="#f4f4f4" stroke="#f4f4f4" stroke-width="0.3">s</text>
<text transform="translate(96.00,386.6) scale(0.814,1)" x="-5.18" font-family="Liberation Serif" font-weight="bold" font-size="14.2" fill="#4f9ab8" stroke="#4f9ab8" stroke-width="0.3">X</text>
<text transform="translate(105.00,386.6) scale(0.789,1)" x="-5.31" font-family="Liberation Serif" font-weight="bold" font-size="14.2" fill="#4f9ab8" stroke="#4f9ab8" stroke-width="0.3">R</text>
<text transform="translate(114.00,386.6) scale(0.799,1)" x="-5.14" font-family="Liberation Serif" font-weight="bold" font-size="14.2" fill="#4f9ab8" stroke="#4f9ab8" stroke-width="0.3">A</text>
<text transform="translate(132.00,386.6) scale(0.799,1)" x="-5.14" font-family="Liberation Serif" font-weight="bold" font-size="14.2" fill="#e6e6a0" stroke="#e6e6a0" stroke-width="0.3">A</text>
<text transform="translate(213.00,386.6) scale(0.799,1)" x="-5.14" font-family="Liberation Serif" font-weight="bold" font-size="14.2" fill="#e6e6a0" stroke="#e6e6a0" stroke-width="0.3">A</text>
<text transform="translate(222.00,386.6) scale(1.000,1)" x="-2.31" font-family="Liberation Serif" font-weight="bold" font-size="14.2" fill="#e6e6a0" stroke="#e6e6a0" stroke-width="0.3">:</text>
<text transform="translate(231.00,386.6) scale(1.000,1)" x="-3.75" font-family="Liberation Serif" font-weight="bold" font-size="14.2" fill="#f4f4f4" stroke="#f4f4f4" stroke-width="0.3">1</text>
<text transform="translate(240.00,386.6) scale(1.104,1)" x="-3.55" font-family="Liberation Serif" font-weight="bold" font-size="14.2" fill="#f4f4f4" stroke="#f4f4f4" stroke-width="0.3">8</text>
<text transform="translate(267.00,386.6) scale(0.991,1)" x="-4.71" font-family="Liberation Serif" font-weight="bold" font-size="14.2" fill="#448c5a" stroke="#448c5a" stroke-width="0.3">Z</text>
<text transform="translate(294.00,386.6) scale(0.996,1)" x="-4.26" font-family="Liberation Serif" font-weight="bold" font-size="14.2" fill="#448c5a" stroke="#448c5a" stroke-width="0.3">P</text>
<text transform="translate(321.00,386.6) scale(0.943,1)" x="-4.93" font-family="Liberation Serif" font-weight="bold" font-size="14.2" fill="#448c5a" stroke="#448c5a" stroke-width="0.3">C</text>
<text transform="translate(348.00,386.6) scale(0.905,1)" x="-4.66" font-family="Liberation Serif" font-weight="bold" font-size="14.2" fill="#e6e6a0" stroke="#e6e6a0" stroke-width="0.3">B</text>
<text transform="translate(357.00,386.6) scale(0.943,1)" x="-4.93" font-family="Liberation Serif" font-weight="bold" font-size="14.2" fill="#e6e6a0" stroke="#e6e6a0" stroke-width="0.3">C</text>
<text transform="translate(366.00,386.6) scale(1.000,1)" x="-2.31" font-family="Liberation Serif" font-weight="bold" font-size="14.2" fill="#e6e6a0" stroke="#e6e6a0" stroke-width="0.3">:</text>
<text transform="translate(375.00,386.6) scale(1.130,1)" x="-3.55" font-family="Liberation Serif" font-weight="bold" font-size="14.2" fill="#f4f4f4" stroke="#f4f4f4" stroke-width="0.3">0</text>
<text transform="translate(384.00,386.6) scale(1.130,1)" x="-3.55" font-family="Liberation Serif" font-weight="bold" font-size="14.2" fill="#f4f4f4" stroke="#f4f4f4" stroke-width="0.3">0</text>
<text transform="translate(393.00,386.6) scale(1.131,1)" x="-3.57" font-family="Liberation Serif" font-weight="bold" font-size="14.2" fill="#f4f4f4" stroke="#f4f4f4" stroke-width="0.3">5</text>
<text transform="translate(402.00,386.6) scale(1.130,1)" x="-3.55" font-family="Liberation Serif" font-weight="bold" font-size="14.2" fill="#f4f4f4" stroke="#f4f4f4" stroke-width="0.3">0</text>
<text transform="translate(429.00,386.6) scale(0.859,1)" x="-4.91" font-family="Liberation Serif" font-weight="bold" font-size="14.2" fill="#e6e6a0" stroke="#e6e6a0" stroke-width="0.3">D</text>
<text transform="translate(438.00,386.6) scale(0.941,1)" x="-4.49" font-family="Liberation Serif" font-weight="bold" font-size="14.2" fill="#e6e6a0" stroke="#e6e6a0" stroke-width="0.3">E</text>
<text transform="translate(447.00,386.6) scale(1.000,1)" x="-2.31" font-family="Liberation Serif" font-weight="bold" font-size="14.2" fill="#e6e6a0" stroke="#e6e6a0" stroke-width="0.3">:</text>
<text transform="translate(456.00,386.6) scale(1.000,1)" x="-4.12" font-family="Liberation Serif" font-weight="bold" font-size="14.2" fill="#f4f4f4" stroke="#f4f4f4" stroke-width="0.3">F</text>
<text transform="translate(465.00,386.6) scale(1.000,1)" x="-4.12" font-family="Liberation Serif" font-weight="bold" font-size="14.2" fill="#f4f4f4" stroke="#f4f4f4" stroke-width="0.3">F</text>
<text transform="translate(474.00,386.6) scale(1.000,1)" x="-4.12" font-family="Liberation Serif" font-weight="bold" font-size="14.2" fill="#f4f4f4" stroke="#f4f4f4" stroke-width="0.3">F</text>
<text transform="translate(483.00,386.6) scale(1.000,1)" x="-3.75" font-family="Liberation Serif" font-weight="bold" font-size="14.2" fill="#f4f4f4" stroke="#f4f4f4" stroke-width="0.3">1</text>
<text transform="translate(510.00,386.6) scale(0.757,1)" x="-5.53" font-family="Liberation Serif" font-weight="bold" font-size="14.2" fill="#e6e6a0" stroke="#e6e6a0" stroke-width="0.3">H</text>
<text transform="translate(519.00,386.6) scale(0.927,1)" x="-4.56" font-family="Liberation Serif" font-weight="bold" font-size="14.2" fill="#e6e6a0" stroke="#e6e6a0" stroke-width="0.3">L</text>
<text transform="translate(528.00,386.6) scale(1.000,1)" x="-2.31" font-family="Liberation Serif" font-weight="bold" font-size="14.2" fill="#e6e6a0" stroke="#e6e6a0" stroke-width="0.3">:</text>
<text transform="translate(537.00,386.6) scale(1.144,1)" x="-3.78" font-family="Liberation Serif" font-weight="bold" font-size="14.2" fill="#f4f4f4" stroke="#f4f4f4" stroke-width="0.3">7</text>
<text transform="translate(546.00,386.6) scale(1.104,1)" x="-3.55" font-family="Liberation Serif" font-weight="bold" font-size="14.2" fill="#f4f4f4" stroke="#f4f4f4" stroke-width="0.3">8</text>
<text transform="translate(555.00,386.6) scale(0.799,1)" x="-5.14" font-family="Liberation Serif" font-weight="bold" font-size="14.2" fill="#f4f4f4" stroke="#f4f4f4" stroke-width="0.3">A</text>
<text transform="translate(564.00,386.6) scale(1.097,1)" x="-3.58" font-family="Liberation Serif" font-weight="bold" font-size="14.2" fill="#f4f4f4" stroke="#f4f4f4" stroke-width="0.3">6</text>
<text transform="translate(591.00,386.6) scale(1.040,1)" x="-4.02" font-family="Liberation Serif" font-weight="bold" font-size="14.2" fill="#e6e6a0" stroke="#e6e6a0" stroke-width="0.3">S</text>
<text transform="translate(600.00,386.6) scale(0.996,1)" x="-4.26" font-family="Liberation Serif" font-weight="bold" font-size="14.2" fill="#e6e6a0" stroke="#e6e6a0" stroke-width="0.3">P</text>
<text transform="translate(609.00,386.6) scale(1.000,1)" x="-2.31" font-family="Liberation Serif" font-weight="bold" font-size="14.2" fill="#e6e6a0" stroke="#e6e6a0" stroke-width="0.3">:</text>
<text transform="translate(618.00,386.6) scale(1.000,1)" x="-4.12" font-family="Liberation Serif" font-weight="bold" font-size="14.2" fill="#f4f4f4" stroke="#f4f4f4" stroke-width="0.3">F</text>
<text transform="translate(627.00,386.6) scale(1.118,1)" x="-3.57" font-family="Liberation Serif" font-weight="bold" font-size="14.2" fill="#f4f4f4" stroke="#f4f4f4" stroke-width="0.3">3</text>
<text transform="translate(636.00,386.6) scale(0.799,1)" x="-5.14" font-family="Liberation Serif" font-weight="bold" font-size="14.2" fill="#f4f4f4" stroke="#f4f4f4" stroke-width="0.3">A</text>
<text transform="translate(645.00,386.6) scale(0.941,1)" x="-4.49" font-family="Liberation Serif" font-weight="bold" font-size="14.2" fill="#f4f4f4" stroke="#f4f4f4" stroke-width="0.3">E</text>
<text transform="translate(33.00,402.6) scale(1.144,1)" x="-3.78" font-family="Liberation Serif" font-weight="bold" font-size="14.2" fill="#f4f4f4" stroke="#f4f4f4" stroke-width="0.3">7</text>
<text transform="translate(42.00,402.6) scale(1.024,1)" x="-3.52" font-family="Liberation Serif" font-weight="bold" font-size="14.2" fill="#f4f4f4" stroke="#f4f4f4" stroke-width="0.3">4</text>
<text transform="translate(51.00,402.6) scale(1.154,1)" x="-3.54" font-family="Liberation Serif" font-weight="bold" font-size="14.2" fill="#f4f4f4" stroke="#f4f4f4" stroke-width="0.3">2</text>
<text transform="translate(60.00,402.6) scale(0.941,1)" x="-4.49" font-family="Liberation Serif" font-weight="bold" font-size="14.2" fill="#f4f4f4" stroke="#f4f4f4" stroke-width="0.3">E</text>
<text transform="translate(69.00,402.6) scale(1.432,1)" x="-2.80" font-family="Liberation Serif" font-weight="bold" font-size="14.2" fill="#f4f4f4" stroke="#f4f4f4" stroke-width="0.3">s</text>
<text transform="translate(96.00,402.6) scale(1.040,1)" x="-4.02" font-family="Liberation Serif" font-weight="bold" font-size="14.2" fill="#4f9ab8" stroke="#4f9ab8" stroke-width="0.3">S</text>
<text transform="translate(105.00,402.6) scale(0.885,1)" x="-4.74" font-family="Liberation Serif" font-weight="bold" font-size="14.2" fill="#4f9ab8" stroke="#4f9ab8" stroke-width="0.3">T</text>
<text transform="translate(114.00,402.6) scale(0.799,1)" x="-5.14" font-family="Liberation Serif" font-weight="bold" font-size="14.2" fill="#4f9ab8" stroke="#4f9ab8" stroke-width="0.3">A</text>
<text transform="translate(123.00,402.6) scale(0.814,1)" x="-5.18" font-family="Liberation Serif" font-weight="bold" font-size="14.2" fill="#4f9ab8" stroke="#4f9ab8" stroke-width="0.3">X</text>
<text transform="translate(141.00,402.6) scale(0.859,1)" x="-4.91" font-family="Liberation Serif" font-weight="bold" font-size="14.2" fill="#e6e6a0" stroke="#e6e6a0" stroke-width="0.3">D</text>
<text transform="translate(213.00,402.6) scale(0.799,1)" x="-5.14" font-family="Liberation Serif" font-weight="bold" font-size="14.2" fill="#e6e6a0" stroke="#e6e6a0" stroke-width="0.3">A</text>
<text transform="translate(222.00,402.6) scale(1.000,1)" x="-2.31" font-family="Liberation Serif" font-weight="bold" font-size="14.2" fill="#e6e6a0" stroke="#e6e6a0" stroke-width="0.3">:</text>
<text transform="translate(231.00,402.6) scale(1.130,1)" x="-3.55" font-family="Liberation Serif" font-weight="bold" font-size="14.2" fill="#f4f4f4" stroke="#f4f4f4" stroke-width="0.3">0</text>
<text transform="translate(240.00,402.6) scale(1.130,1)" x="-3.55" font-family="Liberation Serif" font-weight="bold" font-size="14.2" fill="#f4f4f4" stroke="#f4f4f4" stroke-width="0.3">0</text>
<text transform="translate(267.00,402.6) scale(0.991,1)" x="-4.71" font-family="Liberation Serif" font-weight="bold" font-size="14.2" fill="#448c5a" stroke="#448c5a" stroke-width="0.3">Z</text>
<text transform="translate(294.00,402.6) scale(0.996,1)" x="-4.26" font-family="Liberation Serif" font-weight="bold" font-size="14.2" fill="#448c5a" stroke="#448c5a" stroke-width="0.3">P</text>
<text transform="translate(348.00,402.6) scale(0.905,1)" x="-4.66" font-family="Liberation Serif" font-weight="bold" font-size="14.2" fill="#e6e6a0" stroke="#e6e6a0" stroke-width="0.3">B</text>
<text transform="translate(357.00,402.6) scale(0.943,1)" x="-4.93" font-family="Liberation Serif" font-weight="bold" font-size="14.2" fill="#e6e6a0" stroke="#e6e6a0" stroke-width="0.3">C</text>
<text transform="translate(366.00,402.6) scale(1.000,1)" x="-2.31" font-family="Liberation Serif" font-weight="bold" font-size="14.2" fill="#e6e6a0" stroke="#e6e6a0" stroke-width="0.3">:</text>
<text transform="translate(375.00,402.6) scale(1.130,1)" x="-3.55" font-family="Liberation Serif" font-weight="bold" font-size="14.2" fill="#f4f4f4" stroke="#f4f4f4" stroke-width="0.3">0</text>
<text transform="translate(384.00,402.6) scale(1.130,1)" x="-3.55" font-family="Liberation Serif" font-weight="bold" font-size="14.2" fill="#f4f4f4" stroke="#f4f4f4" stroke-width="0.3">0</text>
<text transform="translate(393.00,402.6) scale(1.131,1)" x="-3.57" font-family="Liberation Serif" font-weight="bold" font-size="14.2" fill="#f4f4f4" stroke="#f4f4f4" stroke-width="0.3">5</text>
<text transform="translate(402.00,402.6) scale(1.130,1)" x="-3.55" font-family="Liberation Serif" font-weight="bold" font-size="14.2" fill="#f4f4f4" stroke="#f4f4f4" stroke-width="0.3">0</text>
<text transform="translate(429.00,402.6) scale(0.859,1)" x="-4.91" font-family="Liberation Serif" font-weight="bold" font-size="14.2" fill="#e6e6a0" stroke="#e6e6a0" stroke-width="0.3">D</text>
<text transform="translate(438.00,402.6) scale(0.941,1)" x="-4.49" font-family="Liberation Serif" font-weight="bold" font-size="14.2" fill="#e6e6a0" stroke="#e6e6a0" stroke-width="0.3">E</text>
<text transform="translate(447.00,402.6) scale(1.000,1)" x="-2.31" font-family="Liberation Serif" font-weight="bold" font-size="14.2" fill="#e6e6a0" stroke="#e6e6a0" stroke-width="0.3">:</text>
<text transform="translate(456.00,402.6) scale(1.000,1)" x="-4.12" font-family="Liberation Serif" font-weight="bold" font-size="14.2" fill="#f4f4f4" stroke="#f4f4f4" stroke-width="0.3">F</text>
<text transform="translate(465.00,402.6) scale(1.000,1)" x="-4.12" font-family="Liberation Serif" font-weight="bold" font-size="14.2" fill="#f4f4f4" stroke="#f4f4f4" stroke-width="0.3">F</text>
<text transform="translate(474.00,402.6) scale(1.000,1)" x="-4.12" font-family="Liberation Serif" font-weight="bold" font-size="14.2" fill="#f4f4f4" stroke="#f4f4f4" stroke-width="0.3">F</text>
<text transform="translate(483.00,402.6) scale(1.000,1)" x="-3.75" font-family="Liberation Serif" font-weight="bold" font-size="14.2" fill="#f4f4f4" stroke="#f4f4f4" stroke-width="0.3">1</text>
<text transform="translate(510.00,402.6) scale(0.757,1)" x="-5.53" font-family="Liberation Serif" font-weight="bold" font-size="14.2" fill="#e6e6a0" stroke="#e6e6a0" stroke-width="0.3">H</text>
<text transform="translate(519.00,402.6) scale(0.927,1)" x="-4.56" font-family="Liberation Serif" font-weight="bold" font-size="14.2" fill="#e6e6a0" stroke="#e6e6a0" stroke-width="0.3">L</text>
<text transform="translate(528.00,402.6) scale(1.000,1)" x="-2.31" font-family="Liberation Serif" font-weight="bold" font-size="14.2" fill="#e6e6a0" stroke="#e6e6a0" stroke-width="0.3">:</text>
<text transform="translate(537.00,402.6) scale(1.144,1)" x="-3.78" font-family="Liberation Serif" font-weight="bold" font-size="14.2" fill="#f4f4f4" stroke="#f4f4f4" stroke-width="0.3">7</text>
<text transform="translate(546.00,402.6) scale(1.104,1)" x="-3.55" font-family="Liberation Serif" font-weight="bold" font-size="14.2" fill="#f4f4f4" stroke="#f4f4f4" stroke-width="0.3">8</text>
<text transform="translate(555.00,402.6) scale(0.799,1)" x="-5.14" font-family="Liberation Serif" font-weight="bold" font-size="14.2" fill="#f4f4f4" stroke="#f4f4f4" stroke-width="0.3">A</text>
<text transform="translate(564.00,402.6) scale(1.097,1)" x="-3.58" font-family="Liberation Serif" font-weight="bold" font-size="14.2" fill="#f4f4f4" stroke="#f4f4f4" stroke-width="0.3">6</text>
<text transform="translate(591.00,402.6) scale(1.040,1)" x="-4.02" font-family="Liberation Serif" font-weight="bold" font-size="14.2" fill="#e6e6a0" stroke="#e6e6a0" stroke-width="0.3">S</text>
<text transform="translate(600.00,402.6) scale(0.996,1)" x="-4.26" font-family="Liberation Serif" font-weight="bold" font-size="14.2" fill="#e6e6a0" stroke="#e6e6a0" stroke-width="0.3">P</text>
<text transform="translate(609.00,402.6) scale(1.000,1)" x="-2.31" font-family="Liberation Serif" font-weight="bold" font-size="14.2" fill="#e6e6a0" stroke="#e6e6a0" stroke-width="0.3">:</text>
<text transform="translate(618.00,402.6) scale(1.000,1)" x="-4.12" font-family="Liberation Serif" font-weight="bold" font-size="14.2" fill="#f4f4f4" stroke="#f4f4f4" stroke-width="0.3">F</text>
<text transform="translate(627.00,402.6) scale(1.118,1)" x="-3.57" font-family="Liberation Serif" font-weight="bold" font-size="14.2" fill="#f4f4f4" stroke="#f4f4f4" stroke-width="0.3">3</text>
<text transform="translate(636.00,402.6) scale(0.799,1)" x="-5.14" font-family="Liberation Serif" font-weight="bold" font-size="14.2" fill="#f4f4f4" stroke="#f4f4f4" stroke-width="0.3">A</text>
<text transform="translate(645.00,402.6) scale(0.941,1)" x="-4.49" font-family="Liberation Serif" font-weight="bold" font-size="14.2" fill="#f4f4f4" stroke="#f4f4f4" stroke-width="0.3">E</text>
<text transform="translate(33.00,418.6) scale(1.144,1)" x="-3.78" font-family="Liberation Serif" font-weight="bold" font-size="14.2" fill="#f4f4f4" stroke="#f4f4f4" stroke-width="0.3">7</text>
<text transform="translate(42.00,418.6) scale(1.024,1)" x="-3.52" font-family="Liberation Serif" font-weight="bold" font-size="14.2" fill="#f4f4f4" stroke="#f4f4f4" stroke-width="0.3">4</text>
<text transform="translate(51.00,418.6) scale(1.154,1)" x="-3.54" font-family="Liberation Serif" font-weight="bold" font-size="14.2" fill="#f4f4f4" stroke="#f4f4f4" stroke-width="0.3">2</text>
<text transform="translate(60.00,418.6) scale(1.000,1)" x="-4.12" font-family="Liberation Serif" font-weight="bold" font-size="14.2" fill="#f4f4f4" stroke="#f4f4f4" stroke-width="0.3">F</text>
<text transform="translate(69.00,418.6) scale(1.432,1)" x="-2.80" font-family="Liberation Serif" font-weight="bold" font-size="14.2" fill="#f4f4f4" stroke="#f4f4f4" stroke-width="0.3">s</text>
<text transform="translate(96.00,418.6) scale(0.996,1)" x="-4.26" font-family="Liberation Serif" font-weight="bold" font-size="14.2" fill="#4f9ab8" stroke="#4f9ab8" stroke-width="0.3">P</text>
<text transform="translate(105.00,418.6) scale(0.828,1)" x="-5.52" font-family="Liberation Serif" font-weight="bold" font-size="14.2" fill="#4f9ab8" stroke="#4f9ab8" stroke-width="0.3">O</text>
<text transform="translate(114.00,418.6) scale(0.996,1)" x="-4.26" font-family="Liberation Serif" font-weight="bold" font-size="14.2" fill="#4f9ab8" stroke="#4f9ab8" stroke-width="0.3">P</text>
<text transform="translate(132.00,418.6) scale(0.757,1)" x="-5.53" font-family="Liberation Serif" font-weight="bold" font-size="14.2" fill="#e6e6a0" stroke="#e6e6a0" stroke-width="0.3">H</text>
<text transform="translate(213.00,418.6) scale(0.799,1)" x="-5.14" font-family="Liberation Serif" font-weight="bold" font-size="14.2" fill="#e6e6a0" stroke="#e6e6a0" stroke-width="0.3">A</text>
<text transform="translate(222.00,418.6) scale(1.000,1)" x="-2.31" font-family="Liberation Serif" font-weight="bold" font-size="14.2" fill="#e6e6a0" stroke="#e6e6a0" stroke-width="0.3">:</text>
<text transform="translate(231.00,418.6) scale(1.130,1)" x="-3.55" font-family="Liberation Serif" font-weight="bold" font-size="14.2" fill="#f4f4f4" stroke="#f4f4f4" stroke-width="0.3">0</text>
<text transform="translate(240.00,418.6) scale(1.130,1)" x="-3.55" font-family="Liberation Serif" font-weight="bold" font-size="14.2" fill="#f4f4f4" stroke="#f4f4f4" stroke-width="0.3">0</text>
<text transform="translate(267.00,418.6) scale(0.991,1)" x="-4.71" font-family="Liberation Serif" font-weight="bold" font-size="14.2" fill="#448c5a" stroke="#448c5a" stroke-width="0.3">Z</text>
<text transform="translate(294.00,418.6) scale(0.996,1)" x="-4.26" font-family="Liberation Serif" font-weight="bold" font-size="14.2" fill="#448c5a" stroke="#448c5a" stroke-width="0.3">P</text>
<text transform="translate(348.00,418.6) scale(0.905,1)" x="-4.66" font-family="Liberation Serif" font-weight="bold" font-size="14.2" fill="#e6e6a0" stroke="#e6e6a0" stroke-width="0.3">B</text>
<text transform="translate(357.00,418.6) scale(0.943,1)" x="-4.93" font-family="Liberation Serif" font-weight="bold" font-size="14.2" fill="#e6e6a0" stroke="#e6e6a0" stroke-width="0.3">C</text>
<text transform="translate(366.00,418.6) scale(1.000,1)" x="-2.31" font-family="Liberation Serif" font-weight="bold" font-size="14.2" fill="#e6e6a0" stroke="#e6e6a0" stroke-width="0.3">:</text>
<text transform="translate(375.00,418.6) scale(1.130,1)" x="-3.55" font-family="Liberation Serif" font-weight="bold" font-size="14.2" fill="#f4f4f4" stroke="#f4f4f4" stroke-width="0.3">0</text>
<text transform="translate(384.00,418.6) scale(1.130,1)" x="-3.55" font-family="Liberation Serif" font-weight="bold" font-size="14.2" fill="#f4f4f4" stroke="#f4f4f4" stroke-width="0.3">0</text>
<text transform="translate(393.00,418.6) scale(1.131,1)" x="-3.57" font-family="Liberation Serif" font-weight="bold" font-size="14.2" fill="#f4f4f4" stroke="#f4f4f4" stroke-width="0.3">5</text>
<text transform="translate(402.00,418.6) scale(1.130,1)" x="-3.55" font-family="Liberation Serif" font-weight="bold" font-size="14.2" fill="#f4f4f4" stroke="#f4f4f4" stroke-width="0.3">0</text>
<text transform="translate(429.00,418.6) scale(0.859,1)" x="-4.91" font-family="Liberation Serif" font-weight="bold" font-size="14.2" fill="#e6e6a0" stroke="#e6e6a0" stroke-width="0.3">D</text>
<text transform="translate(438.00,418.6) scale(0.941,1)" x="-4.49" font-family="Liberation Serif" font-weight="bold" font-size="14.2" fill="#e6e6a0" stroke="#e6e6a0" stroke-width="0.3">E</text>
<text transform="translate(447.00,418.6) scale(1.000,1)" x="-2.31" font-family="Liberation Serif" font-weight="bold" font-size="14.2" fill="#e6e6a0" stroke="#e6e6a0" stroke-width="0.3">:</text>
<text transform="translate(456.00,418.6) scale(1.000,1)" x="-4.12" font-family="Liberation Serif" font-weight="bold" font-size="14.2" fill="#f4f4f4" stroke="#f4f4f4" stroke-width="0.3">F</text>
<text transform="translate(465.00,418.6) scale(1.000,1)" x="-4.12" font-family="Liberation Serif" font-weight="bold" font-size="14.2" fill="#f4f4f4" stroke="#f4f4f4" stroke-width="0.3">F</text>
<text transform="translate(474.00,418.6) scale(1.000,1)" x="-4.12" font-family="Liberation Serif" font-weight="bold" font-size="14.2" fill="#f4f4f4" stroke="#f4f4f4" stroke-width="0.3">F</text>
<text transform="translate(483.00,418.6) scale(1.000,1)" x="-3.75" font-family="Liberation Serif" font-weight="bold" font-size="14.2" fill="#f4f4f4" stroke="#f4f4f4" stroke-width="0.3">1</text>
<text transform="translate(510.00,418.6) scale(0.757,1)" x="-5.53" font-family="Liberation Serif" font-weight="bold" font-size="14.2" fill="#e6e6a0" stroke="#e6e6a0" stroke-width="0.3">H</text>
<text transform="translate(519.00,418.6) scale(0.927,1)" x="-4.56" font-family="Liberation Serif" font-weight="bold" font-size="14.2" fill="#e6e6a0" stroke="#e6e6a0" stroke-width="0.3">L</text>
<text transform="translate(528.00,418.6) scale(1.000,1)" x="-2.31" font-family="Liberation Serif" font-weight="bold" font-size="14.2" fill="#e6e6a0" stroke="#e6e6a0" stroke-width="0.3">:</text>
<text transform="translate(537.00,418.6) scale(1.144,1)" x="-3.78" font-family="Liberation Serif" font-weight="bold" font-size="14.2" fill="#f4f4f4" stroke="#f4f4f4" stroke-width="0.3">7</text>
<text transform="translate(546.00,418.6) scale(1.104,1)" x="-3.55" font-family="Liberation Serif" font-weight="bold" font-size="14.2" fill="#f4f4f4" stroke="#f4f4f4" stroke-width="0.3">8</text>
<text transform="translate(555.00,418.6) scale(0.799,1)" x="-5.14" font-family="Liberation Serif" font-weight="bold" font-size="14.2" fill="#f4f4f4" stroke="#f4f4f4" stroke-width="0.3">A</text>
<text transform="translate(564.00,418.6) scale(1.097,1)" x="-3.58" font-family="Liberation Serif" font-weight="bold" font-size="14.2" fill="#f4f4f4" stroke="#f4f4f4" stroke-width="0.3">6</text>
<text transform="translate(591.00,418.6) scale(1.040,1)" x="-4.02" font-family="Liberation Serif" font-weight="bold" font-size="14.2" fill="#e6e6a0" stroke="#e6e6a0" stroke-width="0.3">S</text>
<text transform="translate(600.00,418.6) scale(0.996,1)" x="-4.26" font-family="Liberation Serif" font-weight="bold" font-size="14.2" fill="#e6e6a0" stroke="#e6e6a0" stroke-width="0.3">P</text>
<text transform="translate(609.00,418.6) scale(1.000,1)" x="-2.31" font-family="Liberation Serif" font-weight="bold" font-size="14.2" fill="#e6e6a0" stroke="#e6e6a0" stroke-width="0.3">:</text>
<text transform="translate(618.00,418.6) scale(1.000,1)" x="-4.12" font-family="Liberation Serif" font-weight="bold" font-size="14.2" fill="#f4f4f4" stroke="#f4f4f4" stroke-width="0.3">F</text>
<text transform="translate(627.00,418.6) scale(1.118,1)" x="-3.57" font-family="Liberation Serif" font-weight="bold" font-size="14.2" fill="#f4f4f4" stroke="#f4f4f4" stroke-width="0.3">3</text>
<text transform="translate(636.00,418.6) scale(0.799,1)" x="-5.14" font-family="Liberation Serif" font-weight="bold" font-size="14.2" fill="#f4f4f4" stroke="#f4f4f4" stroke-width="0.3">A</text>
<text transform="translate(645.00,418.6) scale(0.941,1)" x="-4.49" font-family="Liberation Serif" font-weight="bold" font-size="14.2" fill="#f4f4f4" stroke="#f4f4f4" stroke-width="0.3">E</text>
<text transform="translate(33.00,434.6) scale(1.144,1)" x="-3.78" font-family="Liberation Serif" font-weight="bold" font-size="14.2" fill="#f4f4f4" stroke="#f4f4f4" stroke-width="0.3">7</text>
<text transform="translate(42.00,434.6) scale(1.024,1)" x="-3.52" font-family="Liberation Serif" font-weight="bold" font-size="14.2" fill="#f4f4f4" stroke="#f4f4f4" stroke-width="0.3">4</text>
<text transform="translate(51.00,434.6) scale(1.118,1)" x="-3.57" font-family="Liberation Serif" font-weight="bold" font-size="14.2" fill="#f4f4f4" stroke="#f4f4f4" stroke-width="0.3">3</text>
<text transform="translate(60.00,434.6) scale(1.130,1)" x="-3.55" font-family="Liberation Serif" font-weight="bold" font-size="14.2" fill="#f4f4f4" stroke="#f4f4f4" stroke-width="0.3">0</text>
<text transform="translate(69.00,434.6) scale(1.432,1)" x="-2.80" font-family="Liberation Serif" font-weight="bold" font-size="14.2" fill="#f4f4f4" stroke="#f4f4f4" stroke-width="0.3">s</text>
<text transform="translate(96.00,434.6) scale(0.627,1)" x="-6.62" font-family="Liberation Serif" font-weight="bold" font-size="14.2" fill="#4f9ab8" stroke="#4f9ab8" stroke-width="0.3">M</text>
<text transform="translate(105.00,434.6) scale(0.805,1)" x="-5.13" font-family="Liberation Serif" font-weight="bold" font-size="14.2" fill="#4f9ab8" stroke="#4f9ab8" stroke-width="0.3">V</text>
<text transform="translate(114.00,434.6) scale(1.000,1)" x="-2.76" font-family="Liberation Serif" font-weight="bold" font-size="14.2" fill="#4f9ab8" stroke="#4f9ab8" stroke-width="0.3">I</text>
<text transform="translate(132.00,434.6) scale(0.859,1)" x="-4.91" font-family="Liberation Serif" font-weight="bold" font-size="14.2" fill="#e6e6a0" stroke="#e6e6a0" stroke-width="0.3">D</text>
<text transform="translate(141.00,434.6) scale(1.000,1)" x="-1.60" font-family="Liberation Serif" font-weight="bold" font-size="14.2" fill="#dcdcd0" stroke="#dcdcd0" stroke-width="0.3">,</text>
<text transform="translate(150.00,434.6) scale(1.130,1)" x="-3.55" font-family="Liberation Serif" font-weight="bold" font-size="14.2" fill="#dcdcd0" stroke="#dcdcd0" stroke-width="0.3">0</text>
<text transform="translate(159.00,434.6) scale(1.000,1)" x="-3.75" font-family="Liberation Serif" font-weight="bold" font-size="14.2" fill="#dcdcd0" stroke="#dcdcd0" stroke-width="0.3">1</text>
<text transform="translate(168.00,434.6) scale(0.757,1)" x="-5.53" font-family="Liberation Serif" font-weight="bold" font-size="14.2" fill="#dcdcd0" stroke="#dcdcd0" stroke-width="0.3">H</text>
<text transform="translate(213.00,434.6) scale(0.799,1)" x="-5.14" font-family="Liberation Serif" font-weight="bold" font-size="14.2" fill="#e6e6a0" stroke="#e6e6a0" stroke-width="0.3">A</text>
<text transform="translate(222.00,434.6) scale(1.000,1)" x="-2.31" font-family="Liberation Serif" font-weight="bold" font-size="14.2" fill="#e6e6a0" stroke="#e6e6a0" stroke-width="0.3">:</text>
<text transform="translate(231.00,434.6) scale(1.130,1)" x="-3.55" font-family="Liberation Serif" font-weight="bold" font-size="14.2" fill="#f4f4f4" stroke="#f4f4f4" stroke-width="0.3">0</text>
<text transform="translate(240.00,434.6) scale(1.130,1)" x="-3.55" font-family="Liberation Serif" font-weight="bold" font-size="14.2" fill="#f4f4f4" stroke="#f4f4f4" stroke-width="0.3">0</text>
<text transform="translate(267.00,434.6) scale(0.991,1)" x="-4.71" font-family="Liberation Serif" font-weight="bold" font-size="14.2" fill="#448c5a" stroke="#448c5a" stroke-width="0.3">Z</text>
<text transform="translate(294.00,434.6) scale(0.996,1)" x="-4.26" font-family="Liberation Serif" font-weight="bold" font-size="14.2" fill="#448c5a" stroke="#448c5a" stroke-width="0.3">P</text>
<text transform="translate(348.00,434.6) scale(0.905,1)" x="-4.66" font-family="Liberation Serif" font-weight="bold" font-size="14.2" fill="#e6e6a0" stroke="#e6e6a0" stroke-width="0.3">B</text>
<text transform="translate(357.00,434.6) scale(0.943,1)" x="-4.93" font-family="Liberation Serif" font-weight="bold" font-size="14.2" fill="#e6e6a0" stroke="#e6e6a0" stroke-width="0.3">C</text>
<text transform="translate(366.00,434.6) scale(1.000,1)" x="-2.31" font-family="Liberation Serif" font-weight="bold" font-size="14.2" fill="#e6e6a0" stroke="#e6e6a0" stroke-width="0.3">:</text>
<text transform="translate(375.00,434.6) scale(1.130,1)" x="-3.55" font-family="Liberation Serif" font-weight="bold" font-size="14.2" fill="#f4f4f4" stroke="#f4f4f4" stroke-width="0.3">0</text>
<text transform="translate(384.00,434.6) scale(1.130,1)" x="-3.55" font-family="Liberation Serif" font-weight="bold" font-size="14.2" fill="#f4f4f4" stroke="#f4f4f4" stroke-width="0.3">0</text>
<text transform="translate(393.00,434.6) scale(1.131,1)" x="-3.57" font-family="Liberation Serif" font-weight="bold" font-size="14.2" fill="#f4f4f4" stroke="#f4f4f4" stroke-width="0.3">5</text>
<text transform="translate(402.00,434.6) scale(1.130,1)" x="-3.55" font-family="Liberation Serif" font-weight="bold" font-size="14.2" fill="#f4f4f4" stroke="#f4f4f4" stroke-width="0.3">0</text>
<text transform="translate(429.00,434.6) scale(0.859,1)" x="-4.91" font-family="Liberation Serif" font-weight="bold" font-size="14.2" fill="#e6e6a0" stroke="#e6e6a0" stroke-width="0.3">D</text>
<text transform="translate(438.00,434.6) scale(0.941,1)" x="-4.49" font-family="Liberation Serif" font-weight="bold" font-size="14.2" fill="#e6e6a0" stroke="#e6e6a0" stroke-width="0.3">E</text>
<text transform="translate(447.00,434.6) scale(1.000,1)" x="-2.31" font-family="Liberation Serif" font-weight="bold" font-size="14.2" fill="#e6e6a0" stroke="#e6e6a0" stroke-width="0.3">:</text>
<text transform="translate(456.00,434.6) scale(1.000,1)" x="-4.12" font-family="Liberation Serif" font-weight="bold" font-size="14.2" fill="#f4f4f4" stroke="#f4f4f4" stroke-width="0.3">F</text>
<text transform="translate(465.00,434.6) scale(1.000,1)" x="-4.12" font-family="Liberation Serif" font-weight="bold" font-size="14.2" fill="#f4f4f4" stroke="#f4f4f4" stroke-width="0.3">F</text>
<text transform="translate(474.00,434.6) scale(1.000,1)" x="-4.12" font-family="Liberation Serif" font-weight="bold" font-size="14.2" fill="#f4f4f4" stroke="#f4f4f4" stroke-width="0.3">F</text>
<text transform="translate(483.00,434.6) scale(1.000,1)" x="-3.75" font-family="Liberation Serif" font-weight="bold" font-size="14.2" fill="#f4f4f4" stroke="#f4f4f4" stroke-width="0.3">1</text>
<text transform="translate(510.00,434.6) scale(0.757,1)" x="-5.53" font-family="Liberation Serif" font-weight="bold" font-size="14.2" fill="#e6e6a0" stroke="#e6e6a0" stroke-width="0.3">H</text>
<text transform="translate(519.00,434.6) scale(0.927,1)" x="-4.56" font-family="Liberation Serif" font-weight="bold" font-size="14.2" fill="#e6e6a0" stroke="#e6e6a0" stroke-width="0.3">L</text>
<text transform="translate(528.00,434.6) scale(1.000,1)" x="-2.31" font-family="Liberation Serif" font-weight="bold" font-size="14.2" fill="#e6e6a0" stroke="#e6e6a0" stroke-width="0.3">:</text>
<text transform="translate(537.00,434.6) scale(1.000,1)" x="-4.12" font-family="Liberation Serif" font-weight="bold" font-size="14.2" fill="#f4f4f4" stroke="#f4f4f4" stroke-width="0.3">F</text>
<text transform="translate(546.00,434.6) scale(1.000,1)" x="-4.12" font-family="Liberation Serif" font-weight="bold" font-size="14.2" fill="#f4f4f4" stroke="#f4f4f4" stroke-width="0.3">F</text>
<text transform="translate(555.00,434.6) scale(0.941,1)" x="-4.49" font-family="Liberation Serif" font-weight="bold" font-size="14.2" fill="#f4f4f4" stroke="#f4f4f4" stroke-width="0.3">E</text>
<text transform="translate(564.00,434.6) scale(0.943,1)" x="-4.93" font-family="Liberation Serif" font-weight="bold" font-size="14.2" fill="#f4f4f4" stroke="#f4f4f4" stroke-width="0.3">C</text>
<text transform="translate(591.00,434.6) scale(1.040,1)" x="-4.02" font-family="Liberation Serif" font-weight="bold" font-size="14.2" fill="#e6e6a0" stroke="#e6e6a0" stroke-width="0.3">S</text>
<text transform="translate(600.00,434.6) scale(0.996,1)" x="-4.26" font-family="Liberation Serif" font-weight="bold" font-size="14.2" fill="#e6e6a0" stroke="#e6e6a0" stroke-width="0.3">P</text>
<text transform="translate(609.00,434.6) scale(1.000,1)" x="-2.31" font-family="Liberation Serif" font-weight="bold" font-size="14.2" fill="#e6e6a0" stroke="#e6e6a0" stroke-width="0.3">:</text>
<text transform="translate(618.00,434.6) scale(1.000,1)" x="-4.12" font-family="Liberation Serif" font-weight="bold" font-size="14.2" fill="#f4f4f4" stroke="#f4f4f4" stroke-width="0.3">F</text>
<text transform="translate(627.00,434.6) scale(1.118,1)" x="-3.57" font-family="Liberation Serif" font-weight="bold" font-size="14.2" fill="#f4f4f4" stroke="#f4f4f4" stroke-width="0.3">3</text>
<text transform="translate(636.00,434.6) scale(0.905,1)" x="-4.66" font-family="Liberation Serif" font-weight="bold" font-size="14.2" fill="#f4f4f4" stroke="#f4f4f4" stroke-width="0.3">B</text>
<text transform="translate(645.00,434.6) scale(1.130,1)" x="-3.55" font-family="Liberation Serif" font-weight="bold" font-size="14.2" fill="#f4f4f4" stroke="#f4f4f4" stroke-width="0.3">0</text>
<text transform="translate(33.00,450.6) scale(1.144,1)" x="-3.78" font-family="Liberation Serif" font-weight="bold" font-size="14.2" fill="#f4f4f4" stroke="#f4f4f4" stroke-width="0.3">7</text>
<text transform="translate(42.00,450.6) scale(1.024,1)" x="-3.52" font-family="Liberation Serif" font-weight="bold" font-size="14.2" fill="#f4f4f4" stroke="#f4f4f4" stroke-width="0.3">4</text>
<text transform="translate(51.00,450.6) scale(1.118,1)" x="-3.57" font-family="Liberation Serif" font-weight="bold" font-size="14.2" fill="#f4f4f4" stroke="#f4f4f4" stroke-width="0.3">3</text>
<text transform="translate(60.00,450.6) scale(1.154,1)" x="-3.54" font-family="Liberation Serif" font-weight="bold" font-size="14.2" fill="#f4f4f4" stroke="#f4f4f4" stroke-width="0.3">2</text>
<text transform="translate(69.00,450.6) scale(1.432,1)" x="-2.80" font-family="Liberation Serif" font-weight="bold" font-size="14.2" fill="#f4f4f4" stroke="#f4f4f4" stroke-width="0.3">s</text>
<text transform="translate(96.00,450.6) scale(0.943,1)" x="-4.93" font-family="Liberation Serif" font-weight="bold" font-size="14.2" fill="#4f9ab8" stroke="#4f9ab8" stroke-width="0.3">C</text>
<text transform="translate(105.00,450.6) scale(0.799,1)" x="-5.14" font-family="Liberation Serif" font-weight="bold" font-size="14.2" fill="#4f9ab8" stroke="#4f9ab8" stroke-width="0.3">A</text>
<text transform="translate(114.00,450.6) scale(0.927,1)" x="-4.56" font-family="Liberation Serif" font-weight="bold" font-size="14.2" fill="#4f9ab8" stroke="#4f9ab8" stroke-width="0.3">L</text>
<text transform="translate(123.00,450.6) scale(0.927,1)" x="-4.56" font-family="Liberation Serif" font-weight="bold" font-size="14.2" fill="#4f9ab8" stroke="#4f9ab8" stroke-width="0.3">L</text>
<text transform="translate(141.00,450.6) scale(1.144,1)" x="-3.78" font-family="Liberation Serif" font-weight="bold" font-size="14.2" fill="#f4f4f4" stroke="#f4f4f4" stroke-width="0.3">7</text>
<text transform="translate(150.00,450.6) scale(1.024,1)" x="-3.52" font-family="Liberation Serif" font-weight="bold" font-size="14.2" fill="#f4f4f4" stroke="#f4f4f4" stroke-width="0.3">4</text>
<text transform="translate(159.00,450.6) scale(0.799,1)" x="-5.14" font-family="Liberation Serif" font-weight="bold" font-size="14.2" fill="#f4f4f4" stroke="#f4f4f4" stroke-width="0.3">A</text>
<text transform="translate(168.00,450.6) scale(1.154,1)" x="-3.54" font-family="Liberation Serif" font-weight="bold" font-size="14.2" fill="#f4f4f4" stroke="#f4f4f4" stroke-width="0.3">2</text>
<text transform="translate(177.00,450.6) scale(0.757,1)" x="-5.53" font-family="Liberation Serif" font-weight="bold" font-size="14.2" fill="#f4f4f4" stroke="#f4f4f4" stroke-width="0.3">H</text>
<text transform="translate(213.00,450.6) scale(0.799,1)" x="-5.14" font-family="Liberation Serif" font-weight="bold" font-size="14.2" fill="#e6e6a0" stroke="#e6e6a0" stroke-width="0.3">A</text>
<text transform="translate(222.00,450.6) scale(1.000,1)" x="-2.31" font-family="Liberation Serif" font-weight="bold" font-size="14.2" fill="#e6e6a0" stroke="#e6e6a0" stroke-width="0.3">:</text>
<text transform="translate(231.00,450.6) scale(1.130,1)" x="-3.55" font-family="Liberation Serif" font-weight="bold" font-size="14.2" fill="#f4f4f4" stroke="#f4f4f4" stroke-width="0.3">0</text>
<text transform="translate(240.00,450.6) scale(1.130,1)" x="-3.55" font-family="Liberation Serif" font-weight="bold" font-size="14.2" fill="#f4f4f4" stroke="#f4f4f4" stroke-width="0.3">0</text>
<text transform="translate(267.00,450.6) scale(0.991,1)" x="-4.71" font-family="Liberation Serif" font-weight="bold" font-size="14.2" fill="#448c5a" stroke="#448c5a" stroke-width="0.3">Z</text>
<text transform="translate(294.00,450.6) scale(0.996,1)" x="-4.26" font-family="Liberation Serif" font-weight="bold" font-size="14.2" fill="#448c5a" stroke="#448c5a" stroke-width="0.3">P</text>
<text transform="translate(348.00,450.6) scale(0.905,1)" x="-4.66" font-family="Liberation Serif" font-weight="bold" font-size="14.2" fill="#e6e6a0" stroke="#e6e6a0" stroke-width="0.3">B</text>
<text transform="translate(357.00,450.6) scale(0.943,1)" x="-4.93" font-family="Liberation Serif" font-weight="bold" font-size="14.2" fill="#e6e6a0" stroke="#e6e6a0" stroke-width="0.3">C</text>
<text transform="translate(366.00,450.6) scale(1.000,1)" x="-2.31" font-family="Liberation Serif" font-weight="bold" font-size="14.2" fill="#e6e6a0" stroke="#e6e6a0" stroke-width="0.3">:</text>
<text transform="translate(375.00,450.6) scale(1.130,1)" x="-3.55" font-family="Liberation Serif" font-weight="bold" font-size="14.2" fill="#f4f4f4" stroke="#f4f4f4" stroke-width="0.3">0</text>
<text transform="translate(384.00,450.6) scale(1.130,1)" x="-3.55" font-family="Liberation Serif" font-weight="bold" font-size="14.2" fill="#f4f4f4" stroke="#f4f4f4" stroke-width="0.3">0</text>
<text transform="translate(393.00,450.6) scale(1.131,1)" x="-3.57" font-family="Liberation Serif" font-weight="bold" font-size="14.2" fill="#f4f4f4" stroke="#f4f4f4" stroke-width="0.3">5</text>
<text transform="translate(402.00,450.6) scale(1.130,1)" x="-3.55" font-family="Liberation Serif" font-weight="bold" font-size="14.2" fill="#f4f4f4" stroke="#f4f4f4" stroke-width="0.3">0</text>
<text transform="translate(429.00,450.6) scale(0.859,1)" x="-4.91" font-family="Liberation Serif" font-weight="bold" font-size="14.2" fill="#e6e6a0" stroke="#e6e6a0" stroke-width="0.3">D</text>
<text transform="translate(438.00,450.6) scale(0.941,1)" x="-4.49" font-family="Liberation Serif" font-weight="bold" font-size="14.2" fill="#e6e6a0" stroke="#e6e6a0" stroke-width="0.3">E</text>
<text transform="translate(447.00,450.6) scale(1.000,1)" x="-2.31" font-family="Liberation Serif" font-weight="bold" font-size="14.2" fill="#e6e6a0" stroke="#e6e6a0" stroke-width="0.3">:</text>
<text transform="translate(456.00,450.6) scale(1.130,1)" x="-3.55" font-family="Liberation Serif" font-weight="bold" font-size="14.2" fill="#f4f4f4" stroke="#f4f4f4" stroke-width="0.3">0</text>
<text transform="translate(465.00,450.6) scale(1.000,1)" x="-3.75" font-family="Liberation Serif" font-weight="bold" font-size="14.2" fill="#f4f4f4" stroke="#f4f4f4" stroke-width="0.3">1</text>
<text transform="translate(474.00,450.6) scale(1.000,1)" x="-4.12" font-family="Liberation Serif" font-weight="bold" font-size="14.2" fill="#f4f4f4" stroke="#f4f4f4" stroke-width="0.3">F</text>
<text transform="translate(483.00,450.6) scale(1.000,1)" x="-3.75" font-family="Liberation Serif" font-weight="bold" font-size="14.2" fill="#f4f4f4" stroke="#f4f4f4" stroke-width="0.3">1</text>
<text transform="translate(510.00,450.6) scale(0.757,1)" x="-5.53" font-family="Liberation Serif" font-weight="bold" font-size="14.2" fill="#e6e6a0" stroke="#e6e6a0" stroke-width="0.3">H</text>
<text transform="translate(519.00,450.6) scale(0.927,1)" x="-4.56" font-family="Liberation Serif" font-weight="bold" font-size="14.2" fill="#e6e6a0" stroke="#e6e6a0" stroke-width="0.3">L</text>
<text transform="translate(528.00,450.6) scale(1.000,1)" x="-2.31" font-family="Liberation Serif" font-weight="bold" font-size="14.2" fill="#e6e6a0" stroke="#e6e6a0" stroke-width="0.3">:</text>
<text transform="translate(537.00,450.6) scale(1.000,1)" x="-4.12" font-family="Liberation Serif" font-weight="bold" font-size="14.2" fill="#f4f4f4" stroke="#f4f4f4" stroke-width="0.3">F</text>
<text transform="translate(546.00,450.6) scale(1.000,1)" x="-4.12" font-family="Liberation Serif" font-weight="bold" font-size="14.2" fill="#f4f4f4" stroke="#f4f4f4" stroke-width="0.3">F</text>
<text transform="translate(555.00,450.6) scale(0.941,1)" x="-4.49" font-family="Liberation Serif" font-weight="bold" font-size="14.2" fill="#f4f4f4" stroke="#f4f4f4" stroke-width="0.3">E</text>
<text transform="translate(564.00,450.6) scale(0.943,1)" x="-4.93" font-family="Liberation Serif" font-weight="bold" font-size="14.2" fill="#f4f4f4" stroke="#f4f4f4" stroke-width="0.3">C</text>
<text transform="translate(591.00,450.6) scale(1.040,1)" x="-4.02" font-family="Liberation Serif" font-weight="bold" font-size="14.2" fill="#e6e6a0" stroke="#e6e6a0" stroke-width="0.3">S</text>
<text transform="translate(600.00,450.6) scale(0.996,1)" x="-4.26" font-family="Liberation Serif" font-weight="bold" font-size="14.2" fill="#e6e6a0" stroke="#e6e6a0" stroke-width="0.3">P</text>
<text transform="translate(609.00,450.6) scale(1.000,1)" x="-2.31" font-family="Liberation Serif" font-weight="bold" font-size="14.2" fill="#e6e6a0" stroke="#e6e6a0" stroke-width="0.3">:</text>
<text transform="translate(618.00,450.6) scale(1.000,1)" x="-4.12" font-family="Liberation Serif" font-weight="bold" font-size="14.2" fill="#f4f4f4" stroke="#f4f4f4" stroke-width="0.3">F</text>
<text transform="translate(627.00,450.6) scale(1.118,1)" x="-3.57" font-family="Liberation Serif" font-weight="bold" font-size="14.2" fill="#f4f4f4" stroke="#f4f4f4" stroke-width="0.3">3</text>
<text transform="translate(636.00,450.6) scale(0.905,1)" x="-4.66" font-family="Liberation Serif" font-weight="bold" font-size="14.2" fill="#f4f4f4" stroke="#f4f4f4" stroke-width="0.3">B</text>
<text transform="translate(645.00,450.6) scale(1.130,1)" x="-3.55" font-family="Liberation Serif" font-weight="bold" font-size="14.2" fill="#f4f4f4" stroke="#f4f4f4" stroke-width="0.3">0</text>
<rect x="27" y="456" width="638" height="16" fill="#1a1f9a" />
<text transform="translate(33.00,466.6) scale(1.144,1)" x="-3.78" font-family="Liberation Serif" font-weight="bold" font-size="14.2" fill="#f4f4f4" stroke="#f4f4f4" stroke-width="0.3">7</text>
<text transform="translate(42.00,466.6) scale(1.024,1)" x="-3.52" font-family="Liberation Serif" font-weight="bold" font-size="14.2" fill="#f4f4f4" stroke="#f4f4f4" stroke-width="0.3">4</text>
<text transform="translate(51.00,466.6) scale(0.799,1)" x="-5.14" font-family="Liberation Serif" font-weight="bold" font-size="14.2" fill="#f4f4f4" stroke="#f4f4f4" stroke-width="0.3">A</text>
<text transform="translate(60.00,466.6) scale(1.154,1)" x="-3.54" font-family="Liberation Serif" font-weight="bold" font-size="14.2" fill="#f4f4f4" stroke="#f4f4f4" stroke-width="0.3">2</text>
<text transform="translate(69.00,466.6) scale(1.432,1)" x="-2.80" font-family="Liberation Serif" font-weight="bold" font-size="14.2" fill="#f4f4f4" stroke="#f4f4f4" stroke-width="0.3">s</text>
<text transform="translate(96.00,466.6) scale(0.996,1)" x="-4.26" font-family="Liberation Serif" font-weight="bold" font-size="14.2" fill="#6aaaf0" stroke="#6aaaf0" stroke-width="0.3">P</text>
<text transform="translate(105.00,466.6) scale(0.838,1)" x="-5.13" font-family="Liberation Serif" font-weight="bold" font-size="14.2" fill="#6aaaf0" stroke="#6aaaf0" stroke-width="0.3">U</text>
<text transform="translate(114.00,466.6) scale(1.040,1)" x="-4.02" font-family="Liberation Serif" font-weight="bold" font-size="14.2" fill="#6aaaf0" stroke="#6aaaf0" stroke-width="0.3">S</text>
<text transform="translate(123.00,466.6) scale(0.757,1)" x="-5.53" font-family="Liberation Serif" font-weight="bold" font-size="14.2" fill="#6aaaf0" stroke="#6aaaf0" stroke-width="0.3">H</text>
<text transform="translate(141.00,466.6) scale(0.757,1)" x="-5.53" font-family="Liberation Serif" font-weight="bold" font-size="14.2" fill="#e6e6a0" stroke="#e6e6a0" stroke-width="0.3">H</text>
<text transform="translate(213.00,466.6) scale(0.799,1)" x="-5.14" font-family="Liberation Serif" font-weight="bold" font-size="14.2" fill="#e6e6a0" stroke="#e6e6a0" stroke-width="0.3">A</text>
<text transform="translate(222.00,466.6) scale(1.000,1)" x="-2.31" font-family="Liberation Serif" font-weight="bold" font-size="14.2" fill="#e6e6a0" stroke="#e6e6a0" stroke-width="0.3">:</text>
<text transform="translate(231.00,466.6) scale(1.130,1)" x="-3.55" font-family="Liberation Serif" font-weight="bold" font-size="14.2" fill="#f4f4f4" stroke="#f4f4f4" stroke-width="0.3">0</text>
<text transform="translate(240.00,466.6) scale(1.130,1)" x="-3.55" font-family="Liberation Serif" font-weight="bold" font-size="14.2" fill="#f4f4f4" stroke="#f4f4f4" stroke-width="0.3">0</text>
<text transform="translate(267.00,466.6) scale(0.991,1)" x="-4.71" font-family="Liberation Serif" font-weight="bold" font-size="14.2" fill="#448c5a" stroke="#448c5a" stroke-width="0.3">Z</text>
<text transform="translate(294.00,466.6) scale(0.996,1)" x="-4.26" font-family="Liberation Serif" font-weight="bold" font-size="14.2" fill="#448c5a" stroke="#448c5a" stroke-width="0.3">P</text>
<text transform="translate(348.00,466.6) scale(0.905,1)" x="-4.66" font-family="Liberation Serif" font-weight="bold" font-size="14.2" fill="#e6e6a0" stroke="#e6e6a0" stroke-width="0.3">B</text>
<text transform="translate(357.00,466.6) scale(0.943,1)" x="-4.93" font-family="Liberation Serif" font-weight="bold" font-size="14.2" fill="#e6e6a0" stroke="#e6e6a0" stroke-width="0.3">C</text>
<text transform="translate(366.00,466.6) scale(1.000,1)" x="-2.31" font-family="Liberation Serif" font-weight="bold" font-size="14.2" fill="#e6e6a0" stroke="#e6e6a0" stroke-width="0.3">:</text>
<text transform="translate(375.00,466.6) scale(1.130,1)" x="-3.55" font-family="Liberation Serif" font-weight="bold" font-size="14.2" fill="#f4f4f4" stroke="#f4f4f4" stroke-width="0.3">0</text>
<text transform="translate(384.00,466.6) scale(1.130,1)" x="-3.55" font-family="Liberation Serif" font-weight="bold" font-size="14.2" fill="#f4f4f4" stroke="#f4f4f4" stroke-width="0.3">0</text>
<text transform="translate(393.00,466.6) scale(1.131,1)" x="-3.57" font-family="Liberation Serif" font-weight="bold" font-size="14.2" fill="#f4f4f4" stroke="#f4f4f4" stroke-width="0.3">5</text>
<text transform="translate(402.00,466.6) scale(1.130,1)" x="-3.55" font-family="Liberation Serif" font-weight="bold" font-size="14.2" fill="#f4f4f4" stroke="#f4f4f4" stroke-width="0.3">0</text>
<text transform="translate(429.00,466.6) scale(0.859,1)" x="-4.91" font-family="Liberation Serif" font-weight="bold" font-size="14.2" fill="#e6e6a0" stroke="#e6e6a0" stroke-width="0.3">D</text>
<text transform="translate(438.00,466.6) scale(0.941,1)" x="-4.49" font-family="Liberation Serif" font-weight="bold" font-size="14.2" fill="#e6e6a0" stroke="#e6e6a0" stroke-width="0.3">E</text>
<text transform="translate(447.00,466.6) scale(1.000,1)" x="-2.31" font-family="Liberation Serif" font-weight="bold" font-size="14.2" fill="#e6e6a0" stroke="#e6e6a0" stroke-width="0.3">:</text>
<text transform="translate(456.00,466.6) scale(1.130,1)" x="-3.55" font-family="Liberation Serif" font-weight="bold" font-size="14.2" fill="#f4f4f4" stroke="#f4f4f4" stroke-width="0.3">0</text>
<text transform="translate(465.00,466.6) scale(1.000,1)" x="-3.75" font-family="Liberation Serif" font-weight="bold" font-size="14.2" fill="#f4f4f4" stroke="#f4f4f4" stroke-width="0.3">1</text>
<text transform="translate(474.00,466.6) scale(1.000,1)" x="-4.12" font-family="Liberation Serif" font-weight="bold" font-size="14.2" fill="#f4f4f4" stroke="#f4f4f4" stroke-width="0.3">F</text>
<text transform="translate(483.00,466.6) scale(1.000,1)" x="-3.75" font-family="Liberation Serif" font-weight="bold" font-size="14.2" fill="#f4f4f4" stroke="#f4f4f4" stroke-width="0.3">1</text>
<text transform="translate(510.00,466.6) scale(0.757,1)" x="-5.53" font-family="Liberation Serif" font-weight="bold" font-size="14.2" fill="#e6e6a0" stroke="#e6e6a0" stroke-width="0.3">H</text>
<text transform="translate(519.00,466.6) scale(0.927,1)" x="-4.56" font-family="Liberation Serif" font-weight="bold" font-size="14.2" fill="#e6e6a0" stroke="#e6e6a0" stroke-width="0.3">L</text>
<text transform="translate(528.00,466.6) scale(1.000,1)" x="-2.31" font-family="Liberation Serif" font-weight="bold" font-size="14.2" fill="#e6e6a0" stroke="#e6e6a0" stroke-width="0.3">:</text>
<text transform="translate(537.00,466.6) scale(1.000,1)" x="-4.12" font-family="Liberation Serif" font-weight="bold" font-size="14.2" fill="#f4f4f4" stroke="#f4f4f4" stroke-width="0.3">F</text>
<text transform="translate(546.00,466.6) scale(1.000,1)" x="-4.12" font-family="Liberation Serif" font-weight="bold" font-size="14.2" fill="#f4f4f4" stroke="#f4f4f4" stroke-width="0.3">F</text>
<text transform="translate(555.00,466.6) scale(0.941,1)" x="-4.49" font-family="Liberation Serif" font-weight="bold" font-size="14.2" fill="#f4f4f4" stroke="#f4f4f4" stroke-width="0.3">E</text>
<text transform="translate(564.00,466.6) scale(0.943,1)" x="-4.93" font-family="Liberation Serif" font-weight="bold" font-size="14.2" fill="#f4f4f4" stroke="#f4f4f4" stroke-width="0.3">C</text>
<text transform="translate(591.00,466.6) scale(1.040,1)" x="-4.02" font-family="Liberation Serif" font-weight="bold" font-size="14.2" fill="#e6e6a0" stroke="#e6e6a0" stroke-width="0.3">S</text>
<text transform="translate(600.00,466.6) scale(0.996,1)" x="-4.26" font-family="Liberation Serif" font-weight="bold" font-size="14.2" fill="#e6e6a0" stroke="#e6e6a0" stroke-width="0.3">P</text>
<text transform="translate(609.00,466.6) scale(1.000,1)" x="-2.31" font-family="Liberation Serif" font-weight="bold" font-size="14.2" fill="#e6e6a0" stroke="#e6e6a0" stroke-width="0.3">:</text>
<text transform="translate(618.00,466.6) scale(1.000,1)" x="-4.12" font-family="Liberation Serif" font-weight="bold" font-size="14.2" fill="#f4f4f4" stroke="#f4f4f4" stroke-width="0.3">F</text>
<text transform="translate(627.00,466.6) scale(1.118,1)" x="-3.57" font-family="Liberation Serif" font-weight="bold" font-size="14.2" fill="#f4f4f4" stroke="#f4f4f4" stroke-width="0.3">3</text>
<text transform="translate(636.00,466.6) scale(0.799,1)" x="-5.14" font-family="Liberation Serif" font-weight="bold" font-size="14.2" fill="#f4f4f4" stroke="#f4f4f4" stroke-width="0.3">A</text>
<text transform="translate(645.00,466.6) scale(0.941,1)" x="-4.49" font-family="Liberation Serif" font-weight="bold" font-size="14.2" fill="#f4f4f4" stroke="#f4f4f4" stroke-width="0.3">E</text>
<text transform="translate(33.00,482.6) scale(1.144,1)" x="-3.78" font-family="Liberation Serif" font-weight="bold" font-size="14.2" fill="#f4f4f4" stroke="#f4f4f4" stroke-width="0.3">7</text>
<text transform="translate(42.00,482.6) scale(1.024,1)" x="-3.52" font-family="Liberation Serif" font-weight="bold" font-size="14.2" fill="#f4f4f4" stroke="#f4f4f4" stroke-width="0.3">4</text>
<text transform="translate(51.00,482.6) scale(0.799,1)" x="-5.14" font-family="Liberation Serif" font-weight="bold" font-size="14.2" fill="#f4f4f4" stroke="#f4f4f4" stroke-width="0.3">A</text>
<text transform="translate(60.00,482.6) scale(1.118,1)" x="-3.57" font-family="Liberation Serif" font-weight="bold" font-size="14.2" fill="#f4f4f4" stroke="#f4f4f4" stroke-width="0.3">3</text>
<text transform="translate(69.00,482.6) scale(1.432,1)" x="-2.80" font-family="Liberation Serif" font-weight="bold" font-size="14.2" fill="#f4f4f4" stroke="#f4f4f4" stroke-width="0.3">s</text>
<text transform="translate(96.00,482.6) scale(0.627,1)" x="-6.62" font-family="Liberation Serif" font-weight="bold" font-size="14.2" fill="#4f9ab8" stroke="#4f9ab8" stroke-width="0.3">M</text>
<text transform="translate(105.00,482.6) scale(0.805,1)" x="-5.13" font-family="Liberation Serif" font-weight="bold" font-size="14.2" fill="#4f9ab8" stroke="#4f9ab8" stroke-width="0.3">V</text>
<text transform="translate(114.00,482.6) scale(1.000,1)" x="-2.76" font-family="Liberation Serif" font-weight="bold" font-size="14.2" fill="#4f9ab8" stroke="#4f9ab8" stroke-width="0.3">I</text>
<text transform="translate(132.00,482.6) scale(0.941,1)" x="-4.49" font-family="Liberation Serif" font-weight="bold" font-size="14.2" fill="#e6e6a0" stroke="#e6e6a0" stroke-width="0.3">E</text>
<text transform="translate(141.00,482.6) scale(1.000,1)" x="-1.60" font-family="Liberation Serif" font-weight="bold" font-size="14.2" fill="#dcdcd0" stroke="#dcdcd0" stroke-width="0.3">,</text>
<text transform="translate(150.00,482.6) scale(1.130,1)" x="-3.55" font-family="Liberation Serif" font-weight="bold" font-size="14.2" fill="#dcdcd0" stroke="#dcdcd0" stroke-width="0.3">0</text>
<text transform="translate(159.00,482.6) scale(1.097,1)" x="-3.58" font-family="Liberation Serif" font-weight="bold" font-size="14.2" fill="#dcdcd0" stroke="#dcdcd0" stroke-width="0.3">6</text>
<text transform="translate(168.00,482.6) scale(0.757,1)" x="-5.53" font-family="Liberation Serif" font-weight="bold" font-size="14.2" fill="#dcdcd0" stroke="#dcdcd0" stroke-width="0.3">H</text>
<text transform="translate(33.00,498.6) scale(1.144,1)" x="-3.78" font-family="Liberation Serif" font-weight="bold" font-size="14.2" fill="#f4f4f4" stroke="#f4f4f4" stroke-width="0.3">7</text>
<text transform="translate(42.00,498.6) scale(1.024,1)" x="-3.52" font-family="Liberation Serif" font-weight="bold" font-size="14.2" fill="#f4f4f4" stroke="#f4f4f4" stroke-width="0.3">4</text>
<text transform="translate(51.00,498.6) scale(0.799,1)" x="-5.14" font-family="Liberation Serif" font-weight="bold" font-size="14.2" fill="#f4f4f4" stroke="#f4f4f4" stroke-width="0.3">A</text>
<text transform="translate(60.00,498.6) scale(1.131,1)" x="-3.57" font-family="Liberation Serif" font-weight="bold" font-size="14.2" fill="#f4f4f4" stroke="#f4f4f4" stroke-width="0.3">5</text>
<text transform="translate(69.00,498.6) scale(1.432,1)" x="-2.80" font-family="Liberation Serif" font-weight="bold" font-size="14.2" fill="#f4f4f4" stroke="#f4f4f4" stroke-width="0.3">s</text>
<text transform="translate(96.00,498.6) scale(0.927,1)" x="-4.56" font-family="Liberation Serif" font-weight="bold" font-size="14.2" fill="#4f9ab8" stroke="#4f9ab8" stroke-width="0.3">L</text>
<text transform="translate(105.00,498.6) scale(0.859,1)" x="-4.91" font-family="Liberation Serif" font-weight="bold" font-size="14.2" fill="#4f9ab8" stroke="#4f9ab8" stroke-width="0.3">D</text>
<text transform="translate(114.00,498.6) scale(0.799,1)" x="-5.14" font-family="Liberation Serif" font-weight="bold" font-size="14.2" fill="#4f9ab8" stroke="#4f9ab8" stroke-width="0.3">A</text>
<text transform="translate(132.00,498.6) scale(1.000,1)" x="-4.12" font-family="Liberation Serif" font-weight="bold" font-size="14.2" fill="#f4f4f4" stroke="#f4f4f4" stroke-width="0.3">F</text>
<text transform="translate(141.00,498.6) scale(1.000,1)" x="-4.12" font-family="Liberation Serif" font-weight="bold" font-size="14.2" fill="#f4f4f4" stroke="#f4f4f4" stroke-width="0.3">F</text>
<text transform="translate(150.00,498.6) scale(1.000,1)" x="-4.12" font-family="Liberation Serif" font-weight="bold" font-size="14.2" fill="#f4f4f4" stroke="#f4f4f4" stroke-width="0.3">F</text>
<text transform="translate(159.00,498.6) scale(1.131,1)" x="-3.57" font-family="Liberation Serif" font-weight="bold" font-size="14.2" fill="#f4f4f4" stroke="#f4f4f4" stroke-width="0.3">5</text>
<text transform="translate(168.00,498.6) scale(0.757,1)" x="-5.53" font-family="Liberation Serif" font-weight="bold" font-size="14.2" fill="#f4f4f4" stroke="#f4f4f4" stroke-width="0.3">H</text>
<text transform="translate(33.00,514.6) scale(1.144,1)" x="-3.78" font-family="Liberation Serif" font-weight="bold" font-size="14.2" fill="#f4f4f4" stroke="#f4f4f4" stroke-width="0.3">7</text>
<text transform="translate(42.00,514.6) scale(1.024,1)" x="-3.52" font-family="Liberation Serif" font-weight="bold" font-size="14.2" fill="#f4f4f4" stroke="#f4f4f4" stroke-width="0.3">4</text>
<text transform="translate(51.00,514.6) scale(0.799,1)" x="-5.14" font-family="Liberation Serif" font-weight="bold" font-size="14.2" fill="#f4f4f4" stroke="#f4f4f4" stroke-width="0.3">A</text>
<text transform="translate(60.00,514.6) scale(1.104,1)" x="-3.55" font-family="Liberation Serif" font-weight="bold" font-size="14.2" fill="#f4f4f4" stroke="#f4f4f4" stroke-width="0.3">8</text>
<text transform="translate(69.00,514.6) scale(1.432,1)" x="-2.80" font-family="Liberation Serif" font-weight="bold" font-size="14.2" fill="#f4f4f4" stroke="#f4f4f4" stroke-width="0.3">s</text>
<text transform="translate(96.00,514.6) scale(0.943,1)" x="-4.93" font-family="Liberation Serif" font-weight="bold" font-size="14.2" fill="#4f9ab8" stroke="#4f9ab8" stroke-width="0.3">C</text>
<text transform="translate(105.00,514.6) scale(0.996,1)" x="-4.26" font-family="Liberation Serif" font-weight="bold" font-size="14.2" fill="#4f9ab8" stroke="#4f9ab8" stroke-width="0.3">P</text>
<text transform="translate(114.00,514.6) scale(1.000,1)" x="-2.76" font-family="Liberation Serif" font-weight="bold" font-size="14.2" fill="#4f9ab8" stroke="#4f9ab8" stroke-width="0.3">I</text>
<text transform="translate(132.00,514.6) scale(1.130,1)" x="-3.55" font-family="Liberation Serif" font-weight="bold" font-size="14.2" fill="#f4f4f4" stroke="#f4f4f4" stroke-width="0.3">0</text>
<text transform="translate(141.00,514.6) scale(1.104,1)" x="-3.55" font-family="Liberation Serif" font-weight="bold" font-size="14.2" fill="#f4f4f4" stroke="#f4f4f4" stroke-width="0.3">8</text>
<text transform="translate(150.00,514.6) scale(0.757,1)" x="-5.53" font-family="Liberation Serif" font-weight="bold" font-size="14.2" fill="#f4f4f4" stroke="#f4f4f4" stroke-width="0.3">H</text>
<text transform="translate(33.00,530.6) scale(1.144,1)" x="-3.78" font-family="Liberation Serif" font-weight="bold" font-size="14.2" fill="#f4f4f4" stroke="#f4f4f4" stroke-width="0.3">7</text>
<text transform="translate(42.00,530.6) scale(1.024,1)" x="-3.52" font-family="Liberation Serif" font-weight="bold" font-size="14.2" fill="#f4f4f4" stroke="#f4f4f4" stroke-width="0.3">4</text>
<text transform="translate(51.00,530.6) scale(0.799,1)" x="-5.14" font-family="Liberation Serif" font-weight="bold" font-size="14.2" fill="#f4f4f4" stroke="#f4f4f4" stroke-width="0.3">A</text>
<text transform="translate(60.00,530.6) scale(0.799,1)" x="-5.14" font-family="Liberation Serif" font-weight="bold" font-size="14.2" fill="#f4f4f4" stroke="#f4f4f4" stroke-width="0.3">A</text>
<text transform="translate(69.00,530.6) scale(1.432,1)" x="-2.80" font-family="Liberation Serif" font-weight="bold" font-size="14.2" fill="#f4f4f4" stroke="#f4f4f4" stroke-width="0.3">s</text>
<text transform="translate(96.00,530.6) scale(1.118,1)" x="-3.67" font-family="Liberation Serif" font-weight="bold" font-size="14.2" fill="#4f9ab8" stroke="#4f9ab8" stroke-width="0.3">J</text>
<text transform="translate(105.00,530.6) scale(0.991,1)" x="-4.71" font-family="Liberation Serif" font-weight="bold" font-size="14.2" fill="#4f9ab8" stroke="#4f9ab8" stroke-width="0.3">Z</text>
<text transform="translate(123.00,530.6) scale(1.144,1)" x="-3.78" font-family="Liberation Serif" font-weight="bold" font-size="14.2" fill="#f4f4f4" stroke="#f4f4f4" stroke-width="0.3">7</text>
<text transform="translate(132.00,530.6) scale(1.024,1)" x="-3.52" font-family="Liberation Serif" font-weight="bold" font-size="14.2" fill="#f4f4f4" stroke="#f4f4f4" stroke-width="0.3">4</text>
<text transform="translate(141.00,530.6) scale(0.905,1)" x="-4.66" font-family="Liberation Serif" font-weight="bold" font-size="14.2" fill="#f4f4f4" stroke="#f4f4f4" stroke-width="0.3">B</text>
<text transform="translate(150.00,530.6) scale(1.144,1)" x="-3.78" font-family="Liberation Serif" font-weight="bold" font-size="14.2" fill="#f4f4f4" stroke="#f4f4f4" stroke-width="0.3">7</text>
<text transform="translate(159.00,530.6) scale(0.757,1)" x="-5.53" font-family="Liberation Serif" font-weight="bold" font-size="14.2" fill="#f4f4f4" stroke="#f4f4f4" stroke-width="0.3">H</text>
</g>
<g clip-path="url(#sc)">
<text transform="translate(703.60,274.6) scale(1.144,1)" x="-3.78" font-family="Liberation Serif" font-weight="bold" font-size="14.2" fill="#f4f4f4" stroke="#f4f4f4" stroke-width="0.3">7</text>
<text transform="translate(712.60,274.6) scale(1.024,1)" x="-3.52" font-family="Liberation Serif" font-weight="bold" font-size="14.2" fill="#f4f4f4" stroke="#f4f4f4" stroke-width="0.3">4</text>
<text transform="translate(721.60,274.6) scale(1.118,1)" x="-3.57" font-family="Liberation Serif" font-weight="bold" font-size="14.2" fill="#f4f4f4" stroke="#f4f4f4" stroke-width="0.3">3</text>
<text transform="translate(730.60,274.6) scale(1.131,1)" x="-3.57" font-family="Liberation Serif" font-weight="bold" font-size="14.2" fill="#f4f4f4" stroke="#f4f4f4" stroke-width="0.3">5</text>
<text transform="translate(739.60,274.6) scale(0.757,1)" x="-5.53" font-family="Liberation Serif" font-weight="bold" font-size="14.2" fill="#d8e0c8" stroke="#d8e0c8" stroke-width="0.3">H</text>
<text transform="translate(703.60,290.6) scale(1.024,1)" x="-3.52" font-family="Liberation Serif" font-weight="bold" font-size="14.2" fill="#f4f4f4" stroke="#f4f4f4" stroke-width="0.3">4</text>
<text transform="translate(712.60,290.6) scale(1.131,1)" x="-3.57" font-family="Liberation Serif" font-weight="bold" font-size="14.2" fill="#f4f4f4" stroke="#f4f4f4" stroke-width="0.3">5</text>
<text transform="translate(721.60,290.6) scale(1.144,1)" x="-3.78" font-family="Liberation Serif" font-weight="bold" font-size="14.2" fill="#f4f4f4" stroke="#f4f4f4" stroke-width="0.3">7</text>
<text transform="translate(730.60,290.6) scale(1.097,1)" x="-3.58" font-family="Liberation Serif" font-weight="bold" font-size="14.2" fill="#f4f4f4" stroke="#f4f4f4" stroke-width="0.3">6</text>
<text transform="translate(739.60,290.6) scale(0.757,1)" x="-5.53" font-family="Liberation Serif" font-weight="bold" font-size="14.2" fill="#d8e0c8" stroke="#d8e0c8" stroke-width="0.3">H</text>
<text transform="translate(703.60,306.6) scale(1.130,1)" x="-3.55" font-family="Liberation Serif" font-weight="bold" font-size="14.2" fill="#f4f4f4" stroke="#f4f4f4" stroke-width="0.3">0</text>
<text transform="translate(712.60,306.6) scale(1.130,1)" x="-3.55" font-family="Liberation Serif" font-weight="bold" font-size="14.2" fill="#f4f4f4" stroke="#f4f4f4" stroke-width="0.3">0</text>
<text transform="translate(721.60,306.6) scale(1.131,1)" x="-3.57" font-family="Liberation Serif" font-weight="bold" font-size="14.2" fill="#f4f4f4" stroke="#f4f4f4" stroke-width="0.3">5</text>
<text transform="translate(730.60,306.6) scale(1.024,1)" x="-3.52" font-family="Liberation Serif" font-weight="bold" font-size="14.2" fill="#f4f4f4" stroke="#f4f4f4" stroke-width="0.3">4</text>
<text transform="translate(739.60,306.6) scale(0.757,1)" x="-5.53" font-family="Liberation Serif" font-weight="bold" font-size="14.2" fill="#d8e0c8" stroke="#d8e0c8" stroke-width="0.3">H</text>
<text transform="translate(703.60,322.6) scale(1.130,1)" x="-3.55" font-family="Liberation Serif" font-weight="bold" font-size="14.2" fill="#f4f4f4" stroke="#f4f4f4" stroke-width="0.3">0</text>
<text transform="translate(712.60,322.6) scale(1.154,1)" x="-3.54" font-family="Liberation Serif" font-weight="bold" font-size="14.2" fill="#f4f4f4" stroke="#f4f4f4" stroke-width="0.3">2</text>
<text transform="translate(721.60,322.6) scale(1.130,1)" x="-3.55" font-family="Liberation Serif" font-weight="bold" font-size="14.2" fill="#f4f4f4" stroke="#f4f4f4" stroke-width="0.3">0</text>
<text transform="translate(730.60,322.6) scale(1.000,1)" x="-3.75" font-family="Liberation Serif" font-weight="bold" font-size="14.2" fill="#f4f4f4" stroke="#f4f4f4" stroke-width="0.3">1</text>
<text transform="translate(739.60,322.6) scale(0.757,1)" x="-5.53" font-family="Liberation Serif" font-weight="bold" font-size="14.2" fill="#d8e0c8" stroke="#d8e0c8" stroke-width="0.3">H</text>
<text transform="translate(703.60,338.6) scale(1.024,1)" x="-3.52" font-family="Liberation Serif" font-weight="bold" font-size="14.2" fill="#f4f4f4" stroke="#f4f4f4" stroke-width="0.3">4</text>
<text transform="translate(712.60,338.6) scale(1.118,1)" x="-3.57" font-family="Liberation Serif" font-weight="bold" font-size="14.2" fill="#f4f4f4" stroke="#f4f4f4" stroke-width="0.3">3</text>
<text transform="translate(721.60,338.6) scale(1.097,1)" x="-3.58" font-family="Liberation Serif" font-weight="bold" font-size="14.2" fill="#f4f4f4" stroke="#f4f4f4" stroke-width="0.3">6</text>
<text transform="translate(730.60,338.6) scale(0.799,1)" x="-5.14" font-family="Liberation Serif" font-weight="bold" font-size="14.2" fill="#f4f4f4" stroke="#f4f4f4" stroke-width="0.3">A</text>
<text transform="translate(739.60,338.6) scale(0.757,1)" x="-5.53" font-family="Liberation Serif" font-weight="bold" font-size="14.2" fill="#d8e0c8" stroke="#d8e0c8" stroke-width="0.3">H</text>
<text transform="translate(703.60,354.6) scale(1.024,1)" x="-3.52" font-family="Liberation Serif" font-weight="bold" font-size="14.2" fill="#f4f4f4" stroke="#f4f4f4" stroke-width="0.3">4</text>
<text transform="translate(712.60,354.6) scale(1.118,1)" x="-3.57" font-family="Liberation Serif" font-weight="bold" font-size="14.2" fill="#f4f4f4" stroke="#f4f4f4" stroke-width="0.3">3</text>
<text transform="translate(721.60,354.6) scale(1.118,1)" x="-3.57" font-family="Liberation Serif" font-weight="bold" font-size="14.2" fill="#f4f4f4" stroke="#f4f4f4" stroke-width="0.3">3</text>
<text transform="translate(730.60,354.6) scale(0.905,1)" x="-4.66" font-family="Liberation Serif" font-weight="bold" font-size="14.2" fill="#f4f4f4" stroke="#f4f4f4" stroke-width="0.3">B</text>
<text transform="translate(739.60,354.6) scale(0.757,1)" x="-5.53" font-family="Liberation Serif" font-weight="bold" font-size="14.2" fill="#d8e0c8" stroke="#d8e0c8" stroke-width="0.3">H</text>
<text transform="translate(703.60,370.6) scale(1.024,1)" x="-3.52" font-family="Liberation Serif" font-weight="bold" font-size="14.2" fill="#f4f4f4" stroke="#f4f4f4" stroke-width="0.3">4</text>
<text transform="translate(712.60,370.6) scale(1.118,1)" x="-3.57" font-family="Liberation Serif" font-weight="bold" font-size="14.2" fill="#f4f4f4" stroke="#f4f4f4" stroke-width="0.3">3</text>
<text transform="translate(721.60,370.6) scale(1.154,1)" x="-3.54" font-family="Liberation Serif" font-weight="bold" font-size="14.2" fill="#f4f4f4" stroke="#f4f4f4" stroke-width="0.3">2</text>
<text transform="translate(730.60,370.6) scale(0.941,1)" x="-4.49" font-family="Liberation Serif" font-weight="bold" font-size="14.2" fill="#f4f4f4" stroke="#f4f4f4" stroke-width="0.3">E</text>
<text transform="translate(739.60,370.6) scale(0.757,1)" x="-5.53" font-family="Liberation Serif" font-weight="bold" font-size="14.2" fill="#d8e0c8" stroke="#d8e0c8" stroke-width="0.3">H</text>
<text transform="translate(703.60,386.6) scale(1.024,1)" x="-3.52" font-family="Liberation Serif" font-weight="bold" font-size="14.2" fill="#f4f4f4" stroke="#f4f4f4" stroke-width="0.3">4</text>
<text transform="translate(712.60,386.6) scale(1.118,1)" x="-3.57" font-family="Liberation Serif" font-weight="bold" font-size="14.2" fill="#f4f4f4" stroke="#f4f4f4" stroke-width="0.3">3</text>
<text transform="translate(721.60,386.6) scale(1.000,1)" x="-3.75" font-family="Liberation Serif" font-weight="bold" font-size="14.2" fill="#f4f4f4" stroke="#f4f4f4" stroke-width="0.3">1</text>
<text transform="translate(730.60,386.6) scale(0.943,1)" x="-4.93" font-family="Liberation Serif" font-weight="bold" font-size="14.2" fill="#f4f4f4" stroke="#f4f4f4" stroke-width="0.3">C</text>
<text transform="translate(739.60,386.6) scale(0.757,1)" x="-5.53" font-family="Liberation Serif" font-weight="bold" font-size="14.2" fill="#d8e0c8" stroke="#d8e0c8" stroke-width="0.3">H</text>
<text transform="translate(703.60,402.6) scale(1.144,1)" x="-3.78" font-family="Liberation Serif" font-weight="bold" font-size="14.2" fill="#f4f4f4" stroke="#f4f4f4" stroke-width="0.3">7</text>
<text transform="translate(712.60,402.6) scale(1.130,1)" x="-3.55" font-family="Liberation Serif" font-weight="bold" font-size="14.2" fill="#f4f4f4" stroke="#f4f4f4" stroke-width="0.3">0</text>
<text transform="translate(721.60,402.6) scale(1.130,1)" x="-3.55" font-family="Liberation Serif" font-weight="bold" font-size="14.2" fill="#f4f4f4" stroke="#f4f4f4" stroke-width="0.3">0</text>
<text transform="translate(730.60,402.6) scale(1.130,1)" x="-3.55" font-family="Liberation Serif" font-weight="bold" font-size="14.2" fill="#f4f4f4" stroke="#f4f4f4" stroke-width="0.3">0</text>
<text transform="translate(739.60,402.6) scale(0.757,1)" x="-5.53" font-family="Liberation Serif" font-weight="bold" font-size="14.2" fill="#d8e0c8" stroke="#d8e0c8" stroke-width="0.3">H</text>
<text transform="translate(703.60,418.6) scale(1.130,1)" x="-3.55" font-family="Liberation Serif" font-weight="bold" font-size="14.2" fill="#f4f4f4" stroke="#f4f4f4" stroke-width="0.3">0</text>
<text transform="translate(712.60,418.6) scale(1.130,1)" x="-3.55" font-family="Liberation Serif" font-weight="bold" font-size="14.2" fill="#f4f4f4" stroke="#f4f4f4" stroke-width="0.3">0</text>
<text transform="translate(721.60,418.6) scale(1.130,1)" x="-3.55" font-family="Liberation Serif" font-weight="bold" font-size="14.2" fill="#f4f4f4" stroke="#f4f4f4" stroke-width="0.3">0</text>
<text transform="translate(730.60,418.6) scale(1.118,1)" x="-3.57" font-family="Liberation Serif" font-weight="bold" font-size="14.2" fill="#f4f4f4" stroke="#f4f4f4" stroke-width="0.3">3</text>
<text transform="translate(739.60,418.6) scale(0.757,1)" x="-5.53" font-family="Liberation Serif" font-weight="bold" font-size="14.2" fill="#d8e0c8" stroke="#d8e0c8" stroke-width="0.3">H</text>
<text transform="translate(703.60,434.6) scale(1.000,1)" x="-4.12" font-family="Liberation Serif" font-weight="bold" font-size="14.2" fill="#f4f4f4" stroke="#f4f4f4" stroke-width="0.3">F</text>
<text transform="translate(712.60,434.6) scale(0.859,1)" x="-4.91" font-family="Liberation Serif" font-weight="bold" font-size="14.2" fill="#f4f4f4" stroke="#f4f4f4" stroke-width="0.3">D</text>
<text transform="translate(721.60,434.6) scale(1.097,1)" x="-3.49" font-family="Liberation Serif" font-weight="bold" font-size="14.2" fill="#f4f4f4" stroke="#f4f4f4" stroke-width="0.3">9</text>
<text transform="translate(730.60,434.6) scale(1.130,1)" x="-3.55" font-family="Liberation Serif" font-weight="bold" font-size="14.2" fill="#f4f4f4" stroke="#f4f4f4" stroke-width="0.3">0</text>
<text transform="translate(739.60,434.6) scale(0.757,1)" x="-5.53" font-family="Liberation Serif" font-weight="bold" font-size="14.2" fill="#d8e0c8" stroke="#d8e0c8" stroke-width="0.3">H</text>
<text transform="translate(703.60,450.6) scale(1.000,1)" x="-4.12" font-family="Liberation Serif" font-weight="bold" font-size="14.2" fill="#f4f4f4" stroke="#f4f4f4" stroke-width="0.3">F</text>
<text transform="translate(712.60,450.6) scale(0.859,1)" x="-4.91" font-family="Liberation Serif" font-weight="bold" font-size="14.2" fill="#f4f4f4" stroke="#f4f4f4" stroke-width="0.3">D</text>
<text transform="translate(721.60,450.6) scale(1.104,1)" x="-3.55" font-family="Liberation Serif" font-weight="bold" font-size="14.2" fill="#f4f4f4" stroke="#f4f4f4" stroke-width="0.3">8</text>
<text transform="translate(730.60,450.6) scale(1.097,1)" x="-3.49" font-family="Liberation Serif" font-weight="bold" font-size="14.2" fill="#f4f4f4" stroke="#f4f4f4" stroke-width="0.3">9</text>
<text transform="translate(739.60,450.6) scale(0.757,1)" x="-5.53" font-family="Liberation Serif" font-weight="bold" font-size="14.2" fill="#d8e0c8" stroke="#d8e0c8" stroke-width="0.3">H</text>
<text transform="translate(703.60,466.6) scale(1.024,1)" x="-3.52" font-family="Liberation Serif" font-weight="bold" font-size="14.2" fill="#f4f4f4" stroke="#f4f4f4" stroke-width="0.3">4</text>
<text transform="translate(712.60,466.6) scale(0.905,1)" x="-4.66" font-family="Liberation Serif" font-weight="bold" font-size="14.2" fill="#f4f4f4" stroke="#f4f4f4" stroke-width="0.3">B</text>
<text transform="translate(721.60,466.6) scale(0.799,1)" x="-5.14" font-family="Liberation Serif" font-weight="bold" font-size="14.2" fill="#f4f4f4" stroke="#f4f4f4" stroke-width="0.3">A</text>
<text transform="translate(730.60,466.6) scale(1.000,1)" x="-4.12" font-family="Liberation Serif" font-weight="bold" font-size="14.2" fill="#f4f4f4" stroke="#f4f4f4" stroke-width="0.3">F</text>
<text transform="translate(739.60,466.6) scale(0.757,1)" x="-5.53" font-family="Liberation Serif" font-weight="bold" font-size="14.2" fill="#d8e0c8" stroke="#d8e0c8" stroke-width="0.3">H</text>
<text transform="translate(703.60,482.6) scale(1.144,1)" x="-3.78" font-family="Liberation Serif" font-weight="bold" font-size="14.2" fill="#f4f4f4" stroke="#f4f4f4" stroke-width="0.3">7</text>
<text transform="translate(712.60,482.6) scale(1.130,1)" x="-3.55" font-family="Liberation Serif" font-weight="bold" font-size="14.2" fill="#f4f4f4" stroke="#f4f4f4" stroke-width="0.3">0</text>
<text transform="translate(721.60,482.6) scale(1.130,1)" x="-3.55" font-family="Liberation Serif" font-weight="bold" font-size="14.2" fill="#f4f4f4" stroke="#f4f4f4" stroke-width="0.3">0</text>
<text transform="translate(730.60,482.6) scale(1.130,1)" x="-3.55" font-family="Liberation Serif" font-weight="bold" font-size="14.2" fill="#f4f4f4" stroke="#f4f4f4" stroke-width="0.3">0</text>
<text transform="translate(739.60,482.6) scale(0.757,1)" x="-5.53" font-family="Liberation Serif" font-weight="bold" font-size="14.2" fill="#d8e0c8" stroke="#d8e0c8" stroke-width="0.3">H</text>
<text transform="translate(703.60,498.6) scale(1.131,1)" x="-3.57" font-family="Liberation Serif" font-weight="bold" font-size="14.2" fill="#f4f4f4" stroke="#f4f4f4" stroke-width="0.3">5</text>
<text transform="translate(712.60,498.6) scale(0.799,1)" x="-5.14" font-family="Liberation Serif" font-weight="bold" font-size="14.2" fill="#f4f4f4" stroke="#f4f4f4" stroke-width="0.3">A</text>
<text transform="translate(721.60,498.6) scale(1.131,1)" x="-3.57" font-family="Liberation Serif" font-weight="bold" font-size="14.2" fill="#f4f4f4" stroke="#f4f4f4" stroke-width="0.3">5</text>
<text transform="translate(730.60,498.6) scale(0.943,1)" x="-4.93" font-family="Liberation Serif" font-weight="bold" font-size="14.2" fill="#f4f4f4" stroke="#f4f4f4" stroke-width="0.3">C</text>
<text transform="translate(739.60,498.6) scale(0.757,1)" x="-5.53" font-family="Liberation Serif" font-weight="bold" font-size="14.2" fill="#d8e0c8" stroke="#d8e0c8" stroke-width="0.3">H</text>
<text transform="translate(703.60,514.6) scale(1.131,1)" x="-3.57" font-family="Liberation Serif" font-weight="bold" font-size="14.2" fill="#f4f4f4" stroke="#f4f4f4" stroke-width="0.3">5</text>
<text transform="translate(712.60,514.6) scale(0.859,1)" x="-4.91" font-family="Liberation Serif" font-weight="bold" font-size="14.2" fill="#f4f4f4" stroke="#f4f4f4" stroke-width="0.3">D</text>
<text transform="translate(721.60,514.6) scale(1.144,1)" x="-3.78" font-family="Liberation Serif" font-weight="bold" font-size="14.2" fill="#f4f4f4" stroke="#f4f4f4" stroke-width="0.3">7</text>
<text transform="translate(730.60,514.6) scale(0.943,1)" x="-4.93" font-family="Liberation Serif" font-weight="bold" font-size="14.2" fill="#f4f4f4" stroke="#f4f4f4" stroke-width="0.3">C</text>
<text transform="translate(739.60,514.6) scale(0.757,1)" x="-5.53" font-family="Liberation Serif" font-weight="bold" font-size="14.2" fill="#d8e0c8" stroke="#d8e0c8" stroke-width="0.3">H</text>
<text transform="translate(703.60,530.6) scale(1.130,1)" x="-3.55" font-family="Liberation Serif" font-weight="bold" font-size="14.2" fill="#f4f4f4" stroke="#f4f4f4" stroke-width="0.3">0</text>
<text transform="translate(712.60,530.6) scale(1.130,1)" x="-3.55" font-family="Liberation Serif" font-weight="bold" font-size="14.2" fill="#f4f4f4" stroke="#f4f4f4" stroke-width="0.3">0</text>
<text transform="translate(721.60,530.6) scale(1.024,1)" x="-3.52" font-family="Liberation Serif" font-weight="bold" font-size="14.2" fill="#f4f4f4" stroke="#f4f4f4" stroke-width="0.3">4</text>
<text transform="translate(730.60,530.6) scale(1.024,1)" x="-3.52" font-family="Liberation Serif" font-weight="bold" font-size="14.2" fill="#f4f4f4" stroke="#f4f4f4" stroke-width="0.3">4</text>
<text transform="translate(739.60,530.6) scale(0.757,1)" x="-5.53" font-family="Liberation Serif" font-weight="bold" font-size="14.2" fill="#d8e0c8" stroke="#d8e0c8" stroke-width="0.3">H</text>
</g>
<text transform="translate(0,590) scale(0.9032,1)" x="29.84 39.91 45.55 54.51 63.47 71.33 80.29 89.25 92.67 101.64 106.17 114.02" y="0" font-family="Liberation Sans" font-size="15.5" fill="#000" font-weight="normal" >Breakpoints:</text>
<text transform="translate(0,575) scale(0.9032,1)" x="160.48 168.84" y="0" font-family="Liberation Sans" font-size="15.5" fill="#000" font-weight="normal" >F1</text>
<rect x="125" y="578" width="59" height="19" fill="#ffffff" />
<rect x="125" y="578" width="57" height="1" fill="#000" />
<rect x="125" y="578" width="1" height="17" fill="#000" />
<rect x="125" y="595" width="58" height="1" fill="#c8c8c8" />
<rect x="182" y="578" width="1" height="18" fill="#c8c8c8" />
<text x="127.35 135.02 141.69 149.36 157.03 164.70" y="592" font-family="Liberation Sans" font-size="14" fill="#000" font-weight="normal" >0x3551</text>
<rect x="132" y="601" width="13" height="13" fill="#ffffff" />
<rect x="132" y="601" width="11" height="1" fill="#000" />
<rect x="132" y="601" width="1" height="11" fill="#000" />
<rect x="132" y="612" width="12" height="1" fill="#c4c4c4" />
<rect x="143" y="601" width="1" height="12" fill="#c4c4c4" />
<text transform="translate(0,612) scale(0.9032,1)" x="163.01 174.33 177.91" y="0" font-family="Liberation Sans" font-size="15.5" fill="#000" font-weight="normal" >Off</text>
<text transform="translate(0,575) scale(0.9032,1)" x="249.05 257.43" y="0" font-family="Liberation Sans" font-size="15.5" fill="#000" font-weight="normal" >F2</text>
<rect x="205" y="578" width="59" height="19" fill="#ffffff" />
<rect x="205" y="578" width="57" height="1" fill="#000" />
<rect x="205" y="578" width="1" height="17" fill="#000" />
<rect x="205" y="595" width="58" height="1" fill="#c8c8c8" />
<rect x="262" y="578" width="1" height="18" fill="#c8c8c8" />
<rect x="212" y="601" width="13" height="13" fill="#ffffff" />
<rect x="212" y="601" width="11" height="1" fill="#000" />
<rect x="212" y="601" width="1" height="11" fill="#000" />
<rect x="212" y="612" width="12" height="1" fill="#c4c4c4" />
<rect x="223" y="601" width="1" height="12" fill="#c4c4c4" />
<text transform="translate(0,612) scale(0.9032,1)" x="251.58 262.91 266.48" y="0" font-family="Liberation Sans" font-size="15.5" fill="#000" font-weight="normal" >Off</text>
<text transform="translate(0,575) scale(0.9032,1)" x="337.62 345.90" y="0" font-family="Liberation Sans" font-size="15.5" fill="#000" font-weight="normal" >F3</text>
<rect x="285" y="578" width="59" height="19" fill="#ffffff" />
<rect x="285" y="578" width="57" height="1" fill="#000" />
<rect x="285" y="578" width="1" height="17" fill="#000" />
<rect x="285" y="595" width="58" height="1" fill="#c8c8c8" />
<rect x="342" y="578" width="1" height="18" fill="#c8c8c8" />
<rect x="292" y="601" width="13" height="13" fill="#ffffff" />
<rect x="292" y="601" width="11" height="1" fill="#000" />
<rect x="292" y="601" width="1" height="11" fill="#000" />
<rect x="292" y="612" width="12" height="1" fill="#c4c4c4" />
<rect x="303" y="601" width="1" height="12" fill="#c4c4c4" />
<text transform="translate(0,612) scale(0.9032,1)" x="340.16 351.48 355.05" y="0" font-family="Liberation Sans" font-size="15.5" fill="#000" font-weight="normal" >Off</text>
<text transform="translate(0,575) scale(0.9032,1)" x="426.20 434.25" y="0" font-family="Liberation Sans" font-size="15.5" fill="#000" font-weight="normal" >F4</text>
<rect x="365" y="578" width="59" height="19" fill="#ffffff" />
<rect x="365" y="578" width="57" height="1" fill="#000" />
<rect x="365" y="578" width="1" height="17" fill="#000" />
<rect x="365" y="595" width="58" height="1" fill="#c8c8c8" />
<rect x="422" y="578" width="1" height="18" fill="#c8c8c8" />
<rect x="372" y="601" width="13" height="13" fill="#ffffff" />
<rect x="372" y="601" width="11" height="1" fill="#000" />
<rect x="372" y="601" width="1" height="11" fill="#000" />
<rect x="372" y="612" width="12" height="1" fill="#c4c4c4" />
<rect x="383" y="601" width="1" height="12" fill="#c4c4c4" />
<text transform="translate(0,612) scale(0.9032,1)" x="428.73 440.05 443.62" y="0" font-family="Liberation Sans" font-size="15.5" fill="#000" font-weight="normal" >Off</text>
<rect x="472" y="566" width="13" height="13" fill="#ffffff" />
<rect x="472" y="566" width="11" height="1" fill="#000" />
<rect x="472" y="566" width="1" height="11" fill="#000" />
<rect x="472" y="577" width="12" height="1" fill="#c4c4c4" />
<rect x="483" y="566" width="1" height="12" fill="#c4c4c4" />
<text transform="translate(0,577) scale(0.9032,1)" x="539.01 550.18 559.13 568.08 577.03 585.98 590.50 595.02 605.08 616.24" y="0" font-family="Liberation Sans" font-size="15.5" fill="#000" font-weight="normal" >Debug ISRs</text>
<rect x="472" y="586" width="13" height="13" fill="#ffffff" />
<rect x="472" y="586" width="11" height="1" fill="#000" />
<rect x="472" y="586" width="1" height="11" fill="#000" />
<rect x="472" y="597" width="12" height="1" fill="#c4c4c4" />
<rect x="483" y="586" width="1" height="12" fill="#c4c4c4" />
<path d="M474.4,591.4 L476.6,594.4 L481.4,588.6" fill="none" stroke="#000" stroke-width="2.1" stroke-linejoin="miter"/>
<text transform="translate(0,597) scale(0.9032,1)" x="540.26 550.44 559.51 564.15 573.23 577.87 588.05 596.02 601.77 610.84 614.38" y="0" font-family="Liberation Sans" font-size="15.5" fill="#000" font-weight="normal" >Auto Scroll</text>
<rect x="472" y="606" width="13" height="13" fill="#ffffff" />
<rect x="472" y="606" width="11" height="1" fill="#000" />
<rect x="472" y="606" width="1" height="11" fill="#000" />
<rect x="472" y="617" width="12" height="1" fill="#c4c4c4" />
<rect x="483" y="606" width="1" height="12" fill="#c4c4c4" />
<path d="M474.4,611.4 L476.6,614.4 L481.4,608.6" fill="none" stroke="#000" stroke-width="2.1" stroke-linejoin="miter"/>
<text transform="translate(0,617) scale(0.9032,1)" x="539.58 549.63 558.57 566.41 575.35 579.86 589.91 595.53 604.47 613.41 621.25 630.19 639.13 642.53 651.48 655.99" y="0" font-family="Liberation Sans" font-size="15.5" fill="#000" font-weight="normal" >Save Breakpoints</text>
<rect x="34" y="632" width="80" height="25" fill="#cbcbcb" />
<rect x="34" y="632" width="80" height="1" fill="#ffffff" />
<rect x="34" y="632" width="1" height="25" fill="#ffffff" />
<rect x="34" y="656" width="80" height="1" fill="#a8a8a8" />
<rect x="113" y="632" width="1" height="25" fill="#a8a8a8" />
<text transform="translate(0,649) scale(0.9032,1)" x="65.97 75.93 80.36 89.22" y="0" font-family="Liberation Sans" font-size="15.5" fill="#a8a8a8" font-weight="normal" >Stop</text>
<rect x="134" y="632" width="80" height="25" fill="#cbcbcb" />
<rect x="134" y="632" width="80" height="1" fill="#ffffff" />
<rect x="134" y="632" width="1" height="25" fill="#ffffff" />
<rect x="134" y="656" width="80" height="1" fill="#000" />
<rect x="213" y="632" width="1" height="25" fill="#000" />
<rect x="135" y="655" width="78" height="1" fill="#8a8a8a" />
<rect x="212" y="633" width="1" height="23" fill="#8a8a8a" />
<text transform="translate(0,649) scale(0.9032,1)" x="176.68 186.65 191.07 199.93" y="0" font-family="Liberation Sans" font-size="15.5" fill="#000" font-weight="normal" >Step</text>
<rect x="234" y="632" width="100" height="25" fill="#cbcbcb" />
<rect x="234" y="632" width="100" height="1" fill="#ffffff" />
<rect x="234" y="632" width="1" height="25" fill="#ffffff" />
<rect x="234" y="656" width="100" height="1" fill="#000" />
<rect x="333" y="632" width="1" height="25" fill="#000" />
<rect x="235" y="655" width="98" height="1" fill="#8a8a8a" />
<rect x="332" y="633" width="1" height="23" fill="#8a8a8a" />
<text transform="translate(0,649) scale(0.9032,1)" x="278.96 288.93 293.36 302.21 311.07 315.50 327.68 335.43 344.29" y="0" font-family="Liberation Sans" font-size="15.5" fill="#000" font-weight="normal" >Step Over</text>
<rect x="354" y="632" width="80" height="25" fill="#cbcbcb" />
<rect x="354" y="632" width="80" height="1" fill="#ffffff" />
<rect x="354" y="632" width="1" height="25" fill="#ffffff" />
<rect x="354" y="656" width="80" height="1" fill="#000" />
<rect x="433" y="632" width="1" height="25" fill="#000" />
<rect x="355" y="655" width="78" height="1" fill="#8a8a8a" />
<rect x="432" y="633" width="1" height="23" fill="#8a8a8a" />
<text transform="translate(0,649) scale(0.9032,1)" x="421.81 432.88 441.74" y="0" font-family="Liberation Sans" font-size="15.5" fill="#000" font-weight="normal" >Run</text></svg></body></html>
